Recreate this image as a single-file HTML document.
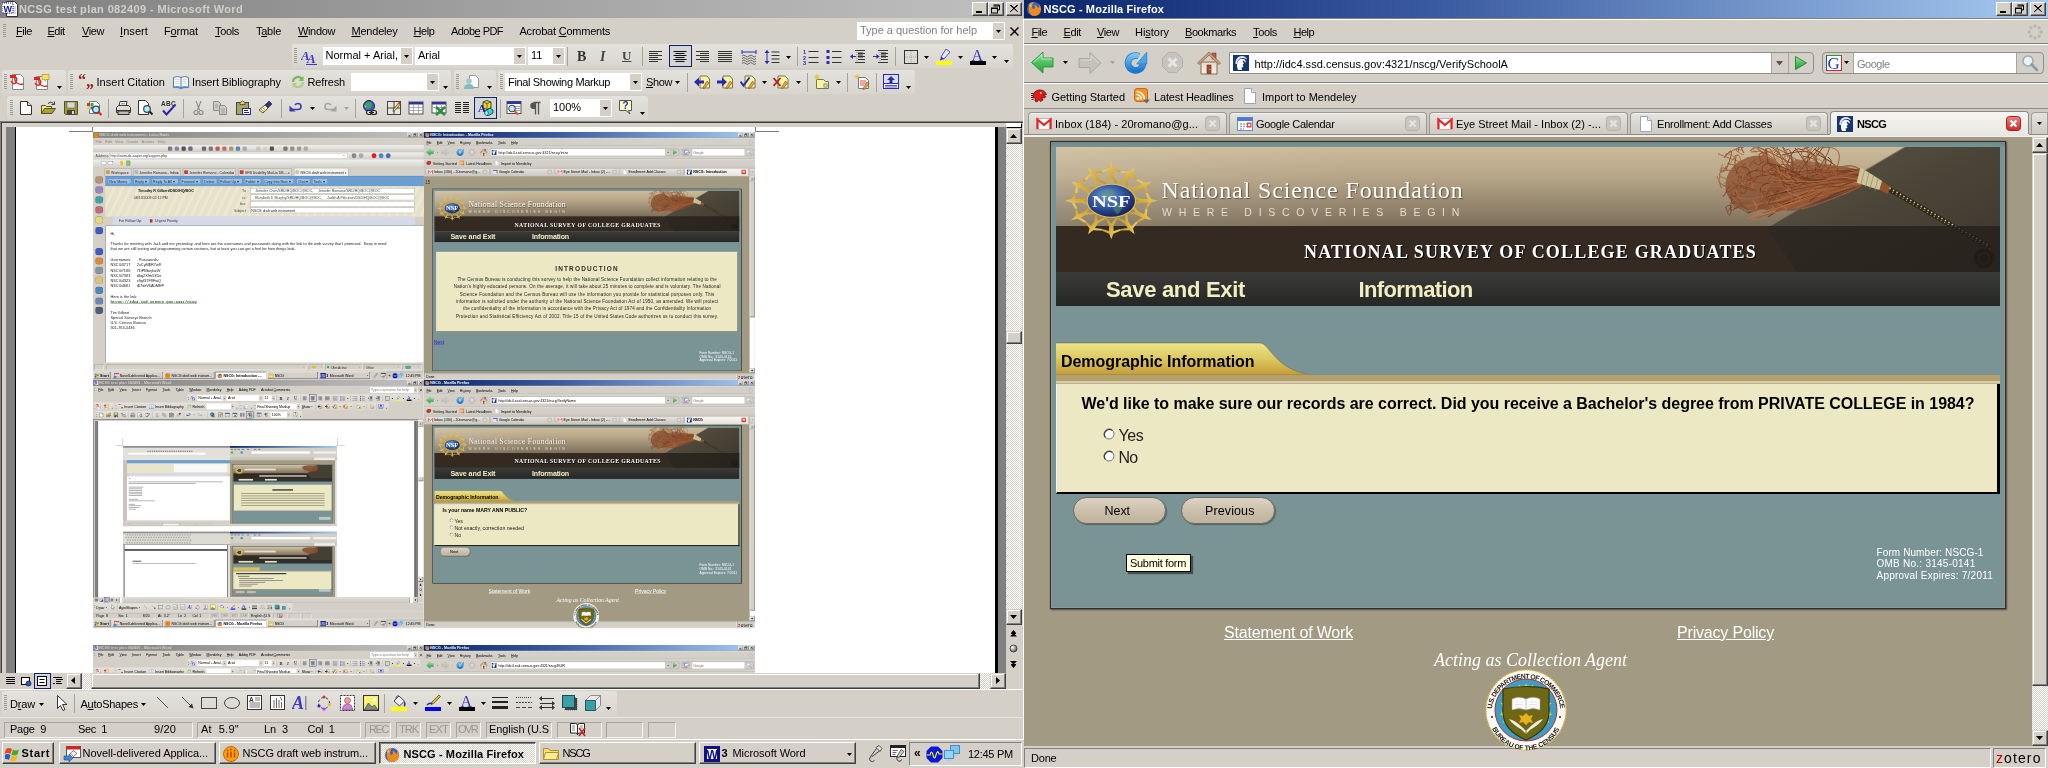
<!DOCTYPE html><html lang="en"><head><meta charset="utf-8"><title>NSCG screenshot</title><style>
*{box-sizing:border-box;margin:0;padding:0}
html,body{width:2048px;height:768px;overflow:hidden;background:#d4d0c8}
body{font-family:"Liberation Sans",sans-serif;font-size:11px;color:#000;position:relative}
.a{position:absolute;display:block}
.t{position:absolute;white-space:pre;display:block}
u{text-decoration:underline;text-underline-offset:1px}
.win{position:absolute;overflow:hidden;background:#d4d0c8}
.top{will-change:transform}
.raised{border:1px solid;border-color:#fff #404040 #404040 #fff;box-shadow:inset -1px -1px 0 #808080,inset 1px 1px 0 #d4d0c8;background:#d4d0c8}
.sraised{border:1px solid;border-color:#d4d0c8 #404040 #404040 #d4d0c8;box-shadow:inset -1px -1px 0 #808080,inset 1px 1px 0 #fff;background:#d4d0c8}
.sunk{border:1px solid;border-color:#808080 #fff #fff #808080}
.sunk2{border:1px solid;border-color:#808080 #fff #fff #808080;box-shadow:inset 1px 1px 0 #404040,inset -1px -1px 0 #d4d0c8}
.tb{background:linear-gradient(#e4e2dc,#d8d5ce);border-radius:3px}
.grip{background:repeating-linear-gradient(#9c9a94 0 1px,transparent 1px 2px)}
.sep{background:#a6a398;width:1px}
.dith{background-image:conic-gradient(#fff 25%,#d4d0c8 0 50%,#fff 0 75%,#d4d0c8 0);background-size:2px 2px}
.cap{border:1px solid;border-color:#fff #404040 #404040 #fff;box-shadow:inset -1px -1px 0 #808080;background:#d4d0c8}

.pagebg{background:#a29a82}
</style></head><body><svg width="0" height="0" style="position:absolute"><defs><linearGradient id="gGreen" x1="0" y1="0" x2="0" y2="1"><stop offset="0" stop-color="#a8e8a8"/><stop offset=".5" stop-color="#50c060"/><stop offset="1" stop-color="#2a9a3a"/></linearGradient>
<linearGradient id="gBlue" x1="0" y1="0" x2="0" y2="1"><stop offset="0" stop-color="#78c4f4"/><stop offset="1" stop-color="#1a78d0"/></linearGradient>
<linearGradient id="gHome" x1="0" y1="0" x2="0" y2="1"><stop offset="0" stop-color="#e8d8c8"/><stop offset="1" stop-color="#f8f0e8"/></linearGradient>
<linearGradient id="gRed" x1="0" y1="0" x2="0" y2="1"><stop offset="0" stop-color="#f08080"/><stop offset="1" stop-color="#d02828"/></linearGradient><linearGradient id="gGold" x1="0" y1="0" x2="1" y2="1"><stop offset="0" stop-color="#f4e088"/><stop offset=".5" stop-color="#d8b040"/><stop offset="1" stop-color="#b88a20"/></linearGradient>
<radialGradient id="gGlobe" cx=".4" cy=".35" r=".7"><stop offset="0" stop-color="#6a9ad8"/><stop offset=".6" stop-color="#2a4a98"/><stop offset="1" stop-color="#141e50"/></radialGradient>
<linearGradient id="gBan" x1="0" y1="0" x2="0" y2="1"><stop offset="0" stop-color="#ccbb9a"/><stop offset=".35" stop-color="#b8a789"/><stop offset=".8" stop-color="#8f816a"/><stop offset="1" stop-color="#7d6f5a"/></linearGradient>
<linearGradient id="gHaze" x1="0" y1="0" x2="1" y2="0"><stop offset="0" stop-color="#fff" stop-opacity=".12"/><stop offset="1" stop-color="#fff" stop-opacity="0"/></linearGradient><linearGradient id="gNav" x1="0" y1="0" x2="0" y2="1"><stop offset="0" stop-color="#3b3c39"/><stop offset="1" stop-color="#262725"/></linearGradient>
<linearGradient id="gCap" x1="0" y1="0" x2="1" y2="1"><stop offset="0" stop-color="#5e5645"/><stop offset=".5" stop-color="#4a4438"/><stop offset="1" stop-color="#3b362d"/></linearGradient>
<radialGradient id="gBall" cx=".35" cy=".35" r=".7"><stop offset="0" stop-color="#fff"/><stop offset="1" stop-color="#555"/></radialGradient><linearGradient id="gTab" x1="0" y1="0" x2="0" y2="1"><stop offset="0" stop-color="#ece488"/><stop offset=".5" stop-color="#dcc860"/><stop offset="1" stop-color="#c29c3a"/></linearGradient><symbol id="new" viewBox="0 0 16 16" overflow="visible"><path d="M2.5 1.5h7l4 4v9h-11z" fill="#fff" stroke="#333" /><path d="M9.5 1.5v4h4" fill="#ddd" stroke="#333"/></symbol><symbol id="open" viewBox="0 0 16 16" overflow="visible"><path d="M1.5 13.5v-8h4l1 1h5v2" fill="#f4ec7a" stroke="#55521a"/><path d="M1.5 13.5l3-5h11l-3.5 5z" fill="#a8a43c" stroke="#55521a"/><path d="M8 3.5q3-3 5.5 0" fill="none" stroke="#333"/><path d="M14.5 1.5v3h-3" fill="none" stroke="#333"/></symbol><symbol id="save" viewBox="0 0 16 16" overflow="visible"><path d="M1.5 1.5h13v13h-12l-1-1z" fill="#9c983c" stroke="#55521a"/><rect x="4" y="2" width="8" height="6" fill="#d8d8d8" stroke="#666" stroke-width=".6"/><rect x="4" y="10" width="8" height="4.5" fill="#444"/><rect x="9" y="11" width="2" height="3" fill="#ddd"/></symbol><symbol id="perm" viewBox="0 0 16 16" overflow="visible"><path d="M3.5 1.5h7l3 3v9h-10z" fill="#fff" stroke="#777"/><rect x="1" y="3" width="3" height="3" fill="#d33"/><rect x="4.5" y="3" width="3" height="3" fill="#3a3"/><rect x="1" y="6.5" width="3" height="3" fill="#dd3"/><rect x="4.5" y="6.5" width="3" height="3" fill="#36c"/><circle cx="10" cy="9.5" r="3.3" fill="#aef" stroke="#444" stroke-width="1.2"/><path d="M12.5 12l3 3" stroke="#e22" stroke-width="2.2"/></symbol><symbol id="print" viewBox="0 0 16 16" overflow="visible"><path d="M4 6l1-4.5h7l-1 4.5" fill="#fff" stroke="#333"/><path d="M1.5 7.5l2-2h10l2 2v5h-14z" fill="#ddd" stroke="#333"/><path d="M1.5 10.5h14" stroke="#333"/><rect x="3" y="11" width="11" height="3.5" fill="#bbb" stroke="#333"/><rect x="8" y="9" width="3" height="1" fill="#ee3"/><path d="M6 3.5h4M5.7 5h4" stroke="#777" stroke-width=".7"/></symbol><symbol id="preview" viewBox="0 0 16 16" overflow="visible"><path d="M1.5 .5h7l3 3v11h-10z" fill="#fff" stroke="#333"/><circle cx="10" cy="9" r="3.3" fill="#aef" stroke="#444" stroke-width="1.2"/><path d="M12.5 11.5l3 3" stroke="#222" stroke-width="2"/></symbol><symbol id="spell" viewBox="0 0 16 16" overflow="visible"><text x="0" y="6" font-size="6.5" font-family="Liberation Sans,sans-serif" font-weight="bold" fill="#333" letter-spacing=".3">ABC</text><path d="M2 10.5l3.5 4 9-10" fill="none" stroke="#2a2aa0" stroke-width="2"/></symbol><symbol id="cut" viewBox="0 0 16 16" overflow="visible"><path d="M6 1l3.5 9M11 1L7.5 10" stroke="#8c8c8c" stroke-width="1.1" fill="none"/><circle cx="6" cy="12.5" r="2" fill="none" stroke="#8c8c8c" stroke-width="1.1"/><circle cx="11" cy="12.5" r="2" fill="none" stroke="#8c8c8c" stroke-width="1.1"/></symbol><symbol id="copy" viewBox="0 0 16 16" overflow="visible"><path d="M1.5 1.5h5l2 2v7h-7z" fill="#d0cdc6" stroke="#8c8c8c"/><path d="M7.5 5.5h5l2 2v7h-7z" fill="#d0cdc6" stroke="#8c8c8c"/><path d="M9 9h4M9 11h4M9 13h4M3 5h3M3 7h3" stroke="#8c8c8c" stroke-width=".7"/></symbol><symbol id="paste" viewBox="0 0 16 16" overflow="visible"><rect x="1.5" y="2.5" width="12" height="12" fill="#a8a468" stroke="#444"/><path d="M5 2.5q2.5-3 5 0v2h-5z" fill="#e8d860" stroke="#444" stroke-width=".8"/><rect x="7.5" y="8.5" width="8" height="6" fill="#fff" stroke="#2a2aa0"/><path d="M9 10.5h4M9 12.5h5" stroke="#2a2aa0"/></symbol><symbol id="painter" viewBox="0 0 16 16" overflow="visible"><path d="M11 1l3 3-4 4-3-3z" fill="#33338c" stroke="#222" stroke-width=".6"/><path d="M7 5l3 3-5 5-4-3z" fill="#f8f4a0" stroke="#333" stroke-width=".8"/><path d="M3 9l3 3M4.5 7.5l3 3" stroke="#888" stroke-width=".7"/><path d="M1 14.5h3l1-1" stroke="#ee4" fill="none"/></symbol><symbol id="undo" viewBox="0 0 16 16" overflow="visible"><path d="M4 9.5h6a3 3 0 0 0 0-6q-2 0-3 1.5" fill="none" stroke="#3a3ab4" stroke-width="1.6"/><path d="M1.5 5.5v6h6z" fill="#3a3ab4"/></symbol><symbol id="redo" viewBox="0 0 16 16" overflow="visible"><path d="M12 9.5h-6a3 3 0 0 1 0-6q2 0 3 1.5" fill="none" stroke="#a4a4a4" stroke-width="1.6"/><path d="M14.5 5.5v6h-6z" fill="#a4a4a4"/></symbol><symbol id="hlink" viewBox="0 0 16 16" overflow="visible"><circle cx="7" cy="6" r="5.5" fill="#3c5ce0" stroke="#223"/><path d="M4 3q3-2 5 0l1 3-3 3-3-1-1-3z" fill="#3fa845"/><path d="M2 5l2 1v2z" fill="#fff" opacity=".7"/><rect x="4.5" y="10.5" width="5" height="4" rx="2" fill="#ddd" stroke="#222" stroke-width="1.2"/><rect x="9.5" y="10.5" width="5" height="4" rx="2" fill="#ddd" stroke="#222" stroke-width="1.2"/><path d="M7 12.5h5" stroke="#222" stroke-width="1.2"/></symbol><symbol id="tblbord" viewBox="0 0 16 16" overflow="visible"><rect x="1.5" y="1.5" width="13" height="13" fill="#e8e6e0" stroke="#444"/><path d="M8 1.5v13M1.5 8h13" stroke="#444"/><path d="M12.5 3l1.5 1.5-5 6-2 1 .5-2z" fill="#f0e040" stroke="#333" stroke-width=".7"/><circle cx="13.3" cy="3.2" r="1.2" fill="#d33"/></symbol><symbol id="instbl" viewBox="0 0 16 16" overflow="visible"><rect x="1" y="2" width="14" height="12" fill="#fff" stroke="#555"/><rect x="1" y="2" width="14" height="2.5" fill="#33339c"/><path d="M1 7.5h14M1 10.5h14M5.5 4.5v9.5M10.5 4.5v9.5" stroke="#999" stroke-width=".8"/></symbol><symbol id="excel" viewBox="0 0 16 16" overflow="visible"><rect x="1" y="2" width="14" height="11" fill="#fff" stroke="#555"/><rect x="1" y="2" width="14" height="2.5" fill="#33339c"/><path d="M1 7.5h14M5.5 4.5v8.5M10.5 4.5v8.5" stroke="#999" stroke-width=".8"/><path d="M5 7l9 8M14 7l-9 8" stroke="#2e8b3e" stroke-width="2.6"/></symbol><symbol id="columns" viewBox="0 0 16 16" overflow="visible"><path d="M1 2.5h6M1 4.5h6M1 6.5h6M1 8.5h6M1 10.5h6M1 12.5h6M9 2.5h6M9 4.5h6M9 6.5h6M9 8.5h6M9 10.5h6M9 12.5h6" stroke="#222" stroke-width="1"/></symbol><symbol id="drawing" viewBox="0 0 16 16" overflow="visible"><path d="M5 2l4-1.5 4 1.5v6l-4 1.5-4-1.5z" fill="#e8d820" stroke="#222" stroke-width=".8"/><path d="M5 2l4 1.5 4-1.5M9 3.5v6" stroke="#222" stroke-width=".6" fill="none"/><text x="0" y="12" font-size="11" font-weight="bold" font-family="Liberation Serif,serif" fill="#1a1ab0">A</text><path d="M7 11l5-3 3 2v3l-5 3-3-2z" fill="#30d8e0" stroke="#222" stroke-width=".8"/><ellipse cx="8.5" cy="13" rx="1.8" ry="2.4" fill="#8ff" stroke="#222" stroke-width=".6"/></symbol><symbol id="docmap" viewBox="0 0 16 16" overflow="visible"><rect x="1" y="1.5" width="14" height="12" fill="#fff" stroke="#555"/><rect x="1" y="1.5" width="14" height="2.5" fill="#33339c"/><path d="M9 6.5h5M9 8.5h5M9 10.5h5" stroke="#888" stroke-width=".8"/><circle cx="6" cy="8.5" r="3.2" fill="#bef" stroke="#444" stroke-width="1.1"/><path d="M8.5 11l3.5 3.5" stroke="#e44" stroke-width="2"/></symbol><symbol id="para" viewBox="0 0 16 16" overflow="visible"><path d="M11.5 2.5v12M8.5 2.5v12M13.5 2.5h-7" stroke="#555" stroke-width="1.3" fill="none"/><path d="M8.5 2.5h-2a3 3 0 0 0 0 6.5h2z" fill="#555"/></symbol><symbol id="help" viewBox="0 0 16 16" overflow="visible"><path d="M1.5 .5h12v10h-3l1.5 3.5-4-3.5h-6.5z" fill="#fbf8c8" stroke="#555"/><text x="4.5" y="9" font-size="10" font-weight="bold" font-family="Liberation Sans,sans-serif" fill="#2a2aa8">?</text></symbol><symbol id="pdf1" viewBox="0 0 16 16" overflow="visible"><path d="M2.5 .5h8l3 3v12h-11z" fill="#fff" stroke="#888"/><path d="M1 7q3 5 5 1t-1-5q-1 4 2 6t6 1" fill="none" stroke="#d22" stroke-width="1.4"/><rect x="0" y="1" width="6" height="3" fill="#d22"/></symbol><symbol id="pdf2" viewBox="0 0 16 16" overflow="visible"><path d="M2.5 2.5h8l3 3v10h-11z" fill="#fff" stroke="#888"/><path d="M1 9q3 4 5 1t-1-5q-1 4 2 6t6 1" fill="none" stroke="#d22" stroke-width="1.4"/><rect x="0" y="3" width="6" height="3" fill="#d22"/><path d="M8 .5h7v5h-3l-1 2v-2h-3z" fill="#f8e060" stroke="#a80" stroke-width=".6"/></symbol><symbol id="quote" viewBox="0 0 16 16" overflow="visible"><text x="0" y="11" font-size="16" font-weight="bold" font-family="Liberation Serif,serif" fill="#a02020">&#8220;</text><text x="8" y="13" font-size="16" font-weight="bold" font-family="Liberation Serif,serif" fill="#a02020">&#8222;</text></symbol><symbol id="book" viewBox="0 0 16 16" overflow="visible"><path d="M.5 3.5q4-2 7.5 0q3.5-2 7.5 0v10q-4-2-7.5 0q-3.5-2-7.5 0z" fill="#fff" stroke="#4a7ab0" stroke-width="1"/><path d="M8 3.5v10" stroke="#4a7ab0"/><path d="M.5 13.5q4-1 7.5 1q3.5-2 7.5-1" stroke="#4a90d0" stroke-width="1.5" fill="none"/><path d="M2.5 5.5q2-.8 4 0M2.5 7.5q2-.8 4 0M2.5 9.5q2-.8 4 0M9.5 5.5q2-.8 4 0M9.5 7.5q2-.8 4 0M9.5 9.5q2-.8 4 0" stroke="#aaa" stroke-width=".6" fill="none"/></symbol><symbol id="refresh" viewBox="0 0 16 16" overflow="visible"><path d="M3 8a5 5 0 0 1 9-3" fill="none" stroke="#78b858" stroke-width="2.2"/><path d="M13.5 2v5h-5z" fill="#78b858"/><path d="M13 8a5 5 0 0 1-9 3" fill="none" stroke="#a8d088" stroke-width="2.2"/><path d="M2.5 14v-5h5z" fill="#a8d088"/></symbol><symbol id="emailrev" viewBox="0 0 16 16" overflow="visible"><path d="M5.5 1.5h6l3 3v9h-9z" fill="#fff" stroke="#999"/><circle cx="5" cy="7" r="2.8" fill="#9cc"/><path d="M0 15q0-5 5-5t5 5z" fill="#8bb"/></symbol><symbol id="revprev" viewBox="0 0 16 16" overflow="visible"><path d="M6 2h7l2.5 3v9h-9.5z" fill="#f8f4a0" stroke="#775"/><path d="M0 8l5-4.5v3h5v3h-5v3z" fill="#2a2ab0"/><path d="M13 7l2 2-4 5-2 .5.5-2z" fill="#e8a040" stroke="#642" stroke-width=".5"/></symbol><symbol id="revnext" viewBox="0 0 16 16" overflow="visible"><path d="M6 2h7l2.5 3v9h-9.5z" fill="#f8f4a0" stroke="#775"/><path d="M10 8l-5-4.5v3h-5v3h5v3z" fill="#2a2ab0"/><path d="M13 7l2 2-4 5-2 .5.5-2z" fill="#e8a040" stroke="#642" stroke-width=".5"/></symbol><symbol id="revacc" viewBox="0 0 16 16" overflow="visible"><path d="M5 2h7l3 3v9h-10z" fill="#f8f4a0" stroke="#775"/><path d="M.5 7.5l3 4 6-8" fill="none" stroke="#2a2ab0" stroke-width="2"/><path d="M12.5 7l2 2-4 5-2 .5.5-2z" fill="#e8a040" stroke="#642" stroke-width=".5"/></symbol><symbol id="revrej" viewBox="0 0 16 16" overflow="visible"><path d="M5 2h7l3 3v9h-10z" fill="#f8f4a0" stroke="#775"/><path d="M.5 4l7 8M7.5 4l-7 8" stroke="#b02020" stroke-width="1.8"/><path d="M12.5 7l2 2-4 5-2 .5.5-2z" fill="#e8a040" stroke="#642" stroke-width=".5"/></symbol><symbol id="newcomm" viewBox="0 0 16 16" overflow="visible"><path d="M2.5 5.5h7l2 2h3v7h-12z" fill="#f8f4a0" stroke="#775"/><path d="M3 0v6M0 3h6M1 1l4 4M5 1l-4 4" stroke="#e8c020" stroke-width=".8"/><rect x="10" y="10" width="3" height="3" fill="#fff" stroke="#555" stroke-width=".7"/></symbol><symbol id="track" viewBox="0 0 16 16" overflow="visible"><path d="M4.5 3.5h7l3 3v8h-10z" fill="#fff" stroke="#777"/><path d="M6 7h6M6 9h6M6 11h4" stroke="#d33" stroke-width=".9"/><path d="M3 0v5M.5 2.5h5M1.3 .8l3.4 3.4M4.7 .8l-3.4 3.4" stroke="#e8c020" stroke-width=".8"/><path d="M13 8l2 2-4 5-2 .5.5-2z" fill="#e8a040" stroke="#642" stroke-width=".5"/></symbol><symbol id="revpane" viewBox="0 0 16 16" overflow="visible"><rect x=".5" y=".5" width="15" height="14" fill="#fff" stroke="#2a2ab0"/><rect x=".5" y=".5" width="15" height="9" fill="#d8e0f8" stroke="#2a2ab0"/><path d="M8 2l4 4h-2.5v3h-3v-3h-2.5z" fill="#2a2ab0"/><path d="M2 11.5h12M2 13h12" stroke="#2a2ab0" stroke-width=".8"/></symbol><symbol id="styles" viewBox="0 0 16 16" overflow="visible"><text x="0" y="11" font-size="13" font-style="italic" font-weight="bold" font-family="Liberation Serif,serif" fill="#3a3ad0">A</text><text x="6" y="14" font-size="13" font-style="italic" font-weight="bold" font-family="Liberation Serif,serif" fill="#3a3ad0">A</text><path d="M5 15.5h11" stroke="#3a3ad0"/></symbol><symbol id="al_l" viewBox="0 0 16 16" overflow="visible"><path d="M1 2.5h13M1 4.5h9M1 6.5h13M1 8.5h9M1 10.5h13M1 12.5h9" stroke="#333"/></symbol><symbol id="al_c" viewBox="0 0 16 16" overflow="visible"><path d="M1.5 2.5h13M3.5 4.5h9M1.5 6.5h13M3.5 8.5h9M1.5 10.5h13M3.5 12.5h9" stroke="#111"/></symbol><symbol id="al_r" viewBox="0 0 16 16" overflow="visible"><path d="M2 2.5h13M6 4.5h9M2 6.5h13M6 8.5h9M2 10.5h13M6 12.5h9" stroke="#333"/></symbol><symbol id="al_j" viewBox="0 0 16 16" overflow="visible"><path d="M1 2.5h14M1 4.5h14M1 6.5h14M1 8.5h14M1 10.5h14M1 12.5h14" stroke="#333"/></symbol><symbol id="al_d" viewBox="0 0 16 16" overflow="visible"><path d="M1 3h14" stroke="#2a2ab0"/><path d="M1 1v4M15 1v4" stroke="#2a2ab0"/><path d="M1 7q1.8-2 3.5 0t3.5 0t3.5 0t3.5 0M1 9.5q1.8-2 3.5 0t3.5 0t3.5 0t3.5 0M1 12q1.8-2 3.5 0t3.5 0t3.5 0t3.5 0M1 14.5q1.8-2 3.5 0t3.5 0t3.5 0t3.5 0" stroke="#555" fill="none" stroke-width=".9"/></symbol><symbol id="lnsp" viewBox="0 0 16 16" overflow="visible"><path d="M3 1.5v13" stroke="#2a2ab0"/><path d="M.5 4l2.5-3 2.5 3zM.5 12l2.5 3 2.5-3z" fill="#2a2ab0"/><path d="M7.5 3h8M7.5 6.5h8M7.5 10h8M7.5 13.5h8" stroke="#333"/></symbol><symbol id="numlist" viewBox="0 0 16 16" overflow="visible"><text x="0" y="5" font-size="5.5" font-weight="bold" font-family="Liberation Sans,sans-serif" fill="#2a2ab0">1</text><text x="0" y="10.5" font-size="5.5" font-weight="bold" font-family="Liberation Sans,sans-serif" fill="#2a2ab0">2</text><text x="0" y="16" font-size="5.5" font-weight="bold" font-family="Liberation Sans,sans-serif" fill="#2a2ab0">3</text><path d="M5.5 2.5h10M5.5 8.5h10M5.5 13.5h10" stroke="#333"/></symbol><symbol id="bullist" viewBox="0 0 16 16" overflow="visible"><rect x=".5" y="1" width="3" height="3" fill="#2a2ab0"/><rect x=".5" y="7" width="3" height="3" fill="#2a2ab0"/><rect x=".5" y="12" width="3" height="3" fill="#2a2ab0"/><path d="M6 2.5h9.5M6 8.5h9.5M6 13.5h9.5" stroke="#333"/></symbol><symbol id="outdent" viewBox="0 0 16 16" overflow="visible"><path d="M5 1.5h10M8 4.5h7M8 7.5h7M8 10.5h7M5 13.5h10" stroke="#333"/><path d="M8 4.5h5M8 7.5h5" stroke="#333" stroke-width="2"/><path d="M6 7.5h-5" stroke="#2a2ab0"/><path d="M0 7.5l3-2.5v5z" fill="#2a2ab0"/><path d="M7 1v14" stroke="#555" stroke-dasharray="1 1" stroke-width=".6"/></symbol><symbol id="indent" viewBox="0 0 16 16" overflow="visible"><path d="M5 1.5h10M8 4.5h7M8 7.5h7M8 10.5h7M5 13.5h10" stroke="#333"/><path d="M8 4.5h5M8 7.5h5" stroke="#333" stroke-width="2"/><path d="M0 7.5h5" stroke="#2a2ab0"/><path d="M6.5 7.5l-3-2.5v5z" fill="#2a2ab0"/><path d="M7 1v14" stroke="#555" stroke-dasharray="1 1" stroke-width=".6"/></symbol><symbol id="borders" viewBox="0 0 16 16" overflow="visible"><rect x="1.5" y="1.5" width="13" height="13" fill="none" stroke="#333"/><path d="M8 2v12M2 8h12" stroke="#999" stroke-dasharray="1 1" stroke-width=".8"/></symbol><symbol id="hilite" viewBox="0 0 16 16" overflow="visible"><path d="M10 0l4 3-6 7-3-2z" fill="#e8e8f8" stroke="#2a2ab0" stroke-width=".8"/><path d="M5 8l3 2-4 1.5z" fill="#2a2ab0"/><rect x="0" y="12" width="16" height="4" fill="#ff0"/></symbol><symbol id="fcolor" viewBox="0 0 16 16" overflow="visible"><text x="1.5" y="11.5" font-size="16" font-family="Liberation Serif,serif" fill="#3232c0">A</text><rect x="0" y="12" width="16" height="4" fill="#000"/></symbol><symbol id="cursor" viewBox="0 0 16 16" overflow="visible"><path d="M3.5 .5v13l3-3 2.5 5 2-1-2.5-5h4.5z" fill="#fff" stroke="#222" stroke-width=".9"/></symbol><symbol id="line" viewBox="0 0 16 16" overflow="visible"><path d="M2 2l11 11" stroke="#555" stroke-width="1"/></symbol><symbol id="arrowi" viewBox="0 0 16 16" overflow="visible"><path d="M2 2l9 9" stroke="#555" stroke-width="1"/><path d="M13.5 13.5l-5-1.5 3.5-3.5z" fill="#333"/></symbol><symbol id="rect" viewBox="0 0 16 16" overflow="visible"><rect x=".5" y="2.5" width="15" height="11" fill="none" stroke="#444"/></symbol><symbol id="oval" viewBox="0 0 16 16" overflow="visible"><ellipse cx="8" cy="8" rx="7.5" ry="5.5" fill="none" stroke="#444"/></symbol><symbol id="textbox" viewBox="0 0 16 16" overflow="visible"><rect x=".5" y=".5" width="14" height="14" fill="#fff" stroke="#333"/><text x="2" y="6.5" font-size="6.5" font-weight="bold" font-family="Liberation Sans,sans-serif" fill="#333">A</text><path d="M8 3h5M8 5h5M2.5 8h10.5M2.5 10h10.5M2.5 12h10.5" stroke="#555" stroke-width=".8"/></symbol><symbol id="vtextbox" viewBox="0 0 16 16" overflow="visible"><rect x=".5" y=".5" width="14" height="14" fill="#fff" stroke="#333"/><path d="M4 5v8M6.5 3v10M9 5v8M11.5 7v6" stroke="#555" stroke-width=".9"/><path d="M10 2l2 3h-1" stroke="#333" fill="none" stroke-width=".7"/></symbol><symbol id="wordart" viewBox="0 0 16 16" overflow="visible"><text x="0" y="14" font-size="18" font-weight="bold" font-style="italic" font-family="Liberation Serif,serif" fill="#3a3ad0">A</text><path d="M13 1l1.5 0v14h-1.5z" fill="#88a"/></symbol><symbol id="diagram" viewBox="0 0 16 16" overflow="visible"><circle cx="8" cy="8" r="5.5" fill="none" stroke="#2a2ab0" stroke-dasharray="2.5 2"/><circle cx="8" cy="2" r="1.6" fill="#d33"/><circle cx="13.5" cy="9.5" r="1.6" fill="#e8c020"/><circle cx="3" cy="11" r="1.6" fill="#2a2ab0"/><circle cx="8" cy="14" r="1.6" fill="#d3d"/></symbol><symbol id="clipart" viewBox="0 0 16 16" overflow="visible"><rect x=".5" y=".5" width="14" height="15" fill="#fff" stroke="#333" stroke-dasharray="2 1"/><circle cx="7.5" cy="5.5" r="3" fill="#e8a0a0" stroke="#a33" stroke-width=".6"/><path d="M2.5 15q0-6 5-6t5 6z" fill="#c8c" stroke="#737" stroke-width=".6"/></symbol><symbol id="picture" viewBox="0 0 16 16" overflow="visible"><rect x=".5" y=".5" width="15" height="15" fill="#f8f070" stroke="#333"/><circle cx="11.5" cy="4.5" r="1.8" fill="#fff"/><path d="M1 15l4.5-7 3.5 4 2.5-2 3.5 5z" fill="#888" stroke="#333" stroke-width=".6"/></symbol><symbol id="fill" viewBox="0 0 16 16" overflow="visible"><path d="M3 6l5-5 5.5 5-5 5z" fill="#eee" stroke="#333" stroke-width=".9"/><path d="M8 1q-3-1-3 3" fill="none" stroke="#333" stroke-width=".8"/><path d="M13.5 6q2 3 .5 5t-1-3z" fill="#2a2ab0"/><rect x="0" y="12" width="16" height="4" fill="#ff0"/></symbol><symbol id="lcolor" viewBox="0 0 16 16" overflow="visible"><path d="M14 0l1.5 1.5-7 7-2.5 1 1-2.5z" fill="#e8c020" stroke="#333" stroke-width=".7"/><path d="M2 10q3-3 5-1" stroke="#2a2ab0" fill="none" stroke-width="1.5"/><rect x="0" y="12" width="16" height="4" fill="#00f"/></symbol><symbol id="lstyle" viewBox="0 0 16 16" overflow="visible"><path d="M0 2.5h16" stroke="#222" stroke-width="1"/><path d="M0 7h16" stroke="#222" stroke-width="2"/><path d="M0 12.5h16" stroke="#222" stroke-width="3"/></symbol><symbol id="dstyle" viewBox="0 0 16 16" overflow="visible"><path d="M0 2.5h16" stroke="#444" stroke-dasharray="1 1"/><path d="M0 7.5h16" stroke="#444" stroke-dasharray="2 1"/><path d="M0 12.5h16" stroke="#444" stroke-dasharray="4 2"/></symbol><symbol id="astyle" viewBox="0 0 16 16" overflow="visible"><path d="M2 3.5h13M1 8.5h13M2 12.5h13" stroke="#333"/><path d="M0 3.5l3-2.5v5zM16 8.5l-3-2.5v5zM0 12.5l3-2.5v5zM16 12.5l-3-2.5v5z" fill="#333"/></symbol><symbol id="shadow" viewBox="0 0 16 16" overflow="visible"><rect x="3" y="3" width="12" height="12" fill="#444" /><path d="M3 3h12v12h-12z" fill="none" stroke="#222" stroke-dasharray="1 1" stroke-width=".5"/><rect x=".5" y=".5" width="12" height="12" fill="#3aa0a8" stroke="#245"/></symbol><symbol id="threed" viewBox="0 0 16 16" overflow="visible"><path d="M.5 5.5l5-5h10v10l-5 5h-10z" fill="#e8e8e8" stroke="#777" stroke-width=".8"/><rect x=".5" y="5.5" width="10" height="10" fill="#3aa0a8" stroke="#245" stroke-width=".8"/><path d="M10.5 5.5l5-5" stroke="#777" stroke-width=".8"/></symbol><symbol id="v_normal" viewBox="0 0 16 16" overflow="visible"><path d="M1 1.5h9M1 3.5h9M1 5.5h9M1 7.5h9" stroke="#000"/></symbol><symbol id="v_web" viewBox="0 0 16 16" overflow="visible"><rect x=".5" y=".5" width="8" height="7" fill="#fff" stroke="#000"/><circle cx="7.5" cy="6.5" r="2.5" fill="#2a5ad0" stroke="#000" stroke-width=".6"/></symbol><symbol id="v_print" viewBox="0 0 16 16" overflow="visible"><rect x=".5" y=".5" width="9" height="9" fill="#fff" stroke="#000"/><path d="M2.5 3.5h5M2.5 6.5h5" stroke="#000"/></symbol><symbol id="v_outline" viewBox="0 0 16 16" overflow="visible"><path d="M0 1.5h9M3 3.5h7M3 5.5h5M0 7.5h2M3 7.5h6" stroke="#000"/></symbol><symbol id="spellbook" viewBox="0 0 16 16" overflow="visible"><path d="M.5 1.5h5q2 0 2 2v9q0-1.5-2-1.5h-5zM14.5 1.5h-5q-2 0-2 2v9q0-1.5 2-1.5h5z" fill="#fff" stroke="#222"/><path d="M2 4h3M2 6h3M2 8h3M10 4h3M10 6h3" stroke="#555" stroke-width=".7"/><path d="M9 6l6 8M15 6l-6 8" stroke="#c02020" stroke-width="1.6"/></symbol><symbol id="ff_back" viewBox="0 0 24 24" overflow="visible"><path d="M.5 11.5l11.5-10.5v6h10v9h-10v6z" fill="url(#gGreen)" stroke="#2c9a4c" stroke-width="1"/><path d="M2.5 11.5l8.5-8v4.5h10" fill="none" stroke="#c8f4d0" stroke-width="1" opacity=".8"/></symbol><symbol id="ff_fwd" viewBox="0 0 24 24" overflow="visible"><path d="M23 12l-11-10.5v6h-11v9h11v6z" fill="#c4c2bc" stroke="#aaa8a2" stroke-width="1"/><path d="M21 12l-8-7.5v4.5h-10" fill="none" stroke="#dddbd6" stroke-width="1"/></symbol><symbol id="ff_reload" viewBox="0 0 24 24" overflow="visible"><path d="M19 12.7A7.5 7.5 0 1 1 14.7 5.2" fill="none" stroke="#2272c4" stroke-width="6.6"/><path d="M19 12.7A7.5 7.5 0 1 1 14.7 5.2" fill="none" stroke="url(#gBlue)" stroke-width="5.2"/><path d="M22.8 1.2V13H12.7z" fill="#4aa4e8" stroke="#2a7ac0" stroke-width=".7"/></symbol><symbol id="ff_stop" viewBox="0 0 24 24" overflow="visible"><path d="M7.5 1.5h8l6 6v8l-6 6h-8l-6-6v-8z" fill="#c6c4be" stroke="#b2b0aa"/><path d="M7.5 7.5l8 8M15.5 7.5l-8 8" stroke="#e8e7e3" stroke-width="3"/></symbol><symbol id="ff_home" viewBox="0 0 24 24" overflow="visible"><rect x="15" y="2" width="4" height="6" fill="#b85a4a" stroke="#8a3a2a" stroke-width=".6"/><path d="M4 11h16v12h-16z" fill="url(#gHome)" stroke="#8a6a48"/><path d="M.5 12l11.5-11 11.5 11-1.5 1.5-10-9.5-10 9.5z" fill="#c8a080" stroke="#8a6a48" stroke-width=".8"/><rect x="10" y="14" width="4" height="8.5" fill="#a04a3a" stroke="#6a2a1a" stroke-width=".6"/><circle cx="13" cy="18.5" r=".6" fill="#ff0"/></symbol><symbol id="ff_go" viewBox="0 0 16 16" overflow="visible"><path d="M2.5 1.5l11 6.5-11 6.5z" fill="url(#gGreen)" stroke="#2c8a3c"/></symbol><symbol id="ff_mag" viewBox="0 0 18 18" overflow="visible"><circle cx="7" cy="7" r="5" fill="#e8f4fc" stroke="#9ab" stroke-width="1.6"/><path d="M10.5 10.5l5.5 5.5" stroke="#89a" stroke-width="2.6" stroke-linecap="round"/><path d="M4 6q1-3 4-2.5" stroke="#fff" fill="none"/></symbol><symbol id="ff_g" viewBox="0 0 16 16" overflow="visible"><rect x=".5" y=".5" width="15" height="15" fill="#fff" stroke="#2a4ab8"/><path d="M.5 15.5h15v-15" fill="none" stroke="#d22"/><path d="M.5 .5h15" stroke="#2a9a3a"/><text x="1.5" y="14" font-size="17" font-family="Liberation Serif,serif" fill="#1a3ac0">G</text></symbol><symbol id="ff_spartan" viewBox="0 0 16 16" overflow="visible"><rect width="16" height="16" fill="#17346f"/><path d="M5 15C3.5 11 3.5 6.5 6.5 4.5 9.5 2.8 12.5 4 13 7l-1 .5C11.5 6 10.5 5.5 9.5 6l1.5 3-1.5.5 1 2.5-2 .5.5 2.5z" fill="#fff"/><path d="M2.5 9C2 4.5 5 1 9 1c2.5 0 4.5 1.5 5 3.5C12 2.8 9 2.5 7 3.5 5 4.5 4 6.5 4 9z" fill="#dfe5f2"/></symbol><symbol id="ff_throb" viewBox="0 0 16 16" overflow="visible"><g fill="#b8b6b0"><circle cx="8" cy="2" r="1.7"/><circle cx="12.2" cy="3.8" r="1.7"/><circle cx="14" cy="8" r="1.7"/><circle cx="12.2" cy="12.2" r="1.7"/><circle cx="8" cy="14" r="1.7"/><circle cx="3.8" cy="12.2" r="1.7"/><circle cx="2" cy="8" r="1.7"/><circle cx="3.8" cy="3.8" r="1.7"/></g></symbol><symbol id="ff_fox" viewBox="0 0 16 16" overflow="visible"><circle cx="8" cy="8" r="7" fill="#3a62c0"/><path d="M8 1q-4 0-6 3 2-1 3 0-3 2-2 6 1 5 6 5 6-1 6-7 0-3-2-5 1 3-1 4-1-3-4-3 2 2 0 4-2 0-2-2 0-3 2-5z" fill="#f08a1c"/><path d="M3 4q2-1 3 0-2 1-2 3z" fill="#f8d040"/></symbol><symbol id="ff_dino" viewBox="0 0 16 16" overflow="visible"><path d="M2 9q0-6 6-7 4-.5 6 2l1.5 2.5-3.5.5 3 1.5-1.5 1.5-3-.5 1.5 2.5-2.5 1.5-1.5-2-2 2.5-2-1 .5-2.5-3-1z" fill="#e41c1c" stroke="#500" stroke-width=".7"/><circle cx="10" cy="5" r="1" fill="#fff"/><circle cx="10.3" cy="5" r=".5" fill="#000"/><path d="M0 5.5h2.5M0 7.5h2M0 9.5h2M.5 11.5h2" stroke="#222" stroke-width=".9"/></symbol><symbol id="ff_rss" viewBox="0 0 16 16" overflow="visible"><rect x=".5" y=".5" width="13" height="13" rx="2.5" fill="#f89028" stroke="#d06808"/><circle cx="4" cy="10.5" r="1.5" fill="#fff"/><path d="M2.5 6.5a5 5 0 0 1 5 5M2.5 3.5a8 8 0 0 1 8 8" fill="none" stroke="#fff" stroke-width="1.6"/><path d="M9 11.5h7l-3.5 4z" fill="#666"/></symbol><symbol id="ff_page" viewBox="0 0 16 16" overflow="visible"><path d="M2.5 .5h7l4 4v11h-11z" fill="#fff" stroke="#9aa4b8"/><path d="M9.5 .5v4h4" fill="#e4e8f0" stroke="#9aa4b8"/></symbol><symbol id="ff_gmail" viewBox="0 0 16 16" overflow="visible"><rect x=".5" y="2.5" width="15" height="11" fill="#fff" stroke="#e8a0a0"/><path d="M1.5 13v-9.5l6.5 5.5 6.5-5.5v9.5" fill="none" stroke="#e02828" stroke-width="2.2"/></symbol><symbol id="ff_gcal" viewBox="0 0 16 16" overflow="visible"><rect x=".5" y="1.5" width="15" height="13" fill="#fff" stroke="#6a8ac8"/><rect x=".5" y="1.5" width="15" height="3.5" fill="#4a7ad8"/><path d="M3 8h8M3 10.5h8M3 13h4" stroke="#9ab" stroke-dasharray="2 1" stroke-width="1.5"/><rect x="10" y="6.5" width="4.5" height="5" fill="#e04040"/><circle cx="12.2" cy="9" r="1.2" fill="#fff"/></symbol><symbol id="ff_tabx" viewBox="0 0 15 15" overflow="visible"><rect x=".5" y=".5" width="14" height="14" rx="3" fill="#c8c5be" stroke="#b4b1aa"/><path d="M4.5 4.5l6 6M10.5 4.5l-6 6" stroke="#e6e4df" stroke-width="2.4"/></symbol><symbol id="ff_tabxr" viewBox="0 0 15 15" overflow="visible"><rect x=".5" y=".5" width="14" height="14" rx="3" fill="url(#gRed)" stroke="#a82020"/><path d="M4.5 4.5l6 6M10.5 4.5l-6 6" stroke="#fff" stroke-width="2.4"/></symbol><symbol id="tk_flag" viewBox="0 0 16 16" overflow="visible"><path d="M1 3q3-2 6 0l-1.5 5q-3-2-6 0z" fill="#e84820"/><path d="M8 3.5q3 2 6 0l-1.5 5q-3 2-6 0z" fill="#48a828"/><path d="M-.5 9q3-2 6 0l-1.5 5q-3-2-6 0z" fill="#2858d8"/><path d="M6.5 9.5q3 2 6 0l-1.5 5q-3 2-6 0z" fill="#f0b818"/></symbol><symbol id="tk_novell" viewBox="0 0 18 16" overflow="visible"><rect x="3.5" y=".5" width="14" height="11" fill="#fff" stroke="#555"/><rect x="3.5" y=".5" width="14" height="3" fill="#e02020"/><path d="M10.5 4.5l3.5 3-3.5 3-3.5-3z" fill="#eee" stroke="#555" stroke-width=".7"/><path d="M1 10h5v-2l4 4-4 4v-2h-5z" fill="#3888d8" stroke="#1a4a88" stroke-width=".6"/></symbol><symbol id="tk_notes" viewBox="0 0 16 16" overflow="visible"><circle cx="8" cy="8" r="7.5" fill="#f8a010" stroke="#c86800"/><path d="M4.5 6.5v5M8 5.5v6M11.5 6.5v5" stroke="#c84800" stroke-width="1.6"/><circle cx="4.5" cy="4.5" r="1" fill="#c84800"/><circle cx="8" cy="3.5" r="1" fill="#c84800"/><circle cx="11.5" cy="4.5" r="1" fill="#c84800"/></symbol><symbol id="tk_folder" viewBox="0 0 16 16" overflow="visible"><path d="M.5 13.5v-11h5l1.5 2h8.5v9z" fill="#f8e078" stroke="#b89020"/><path d="M.5 13.5l2-7h13l-2 7z" fill="#fcec98" stroke="#b89020"/></symbol><symbol id="tk_word" viewBox="0 0 16 16" overflow="visible"><rect x=".5" y=".5" width="15" height="15" fill="#fff" stroke="#101088"/><rect x="0" y="0" width="16" height="3" fill="#101088"/><rect x="0" y="13" width="16" height="3" fill="#101088"/><rect x="0" y="0" width="3" height="16" fill="#101088"/><rect x="13" y="0" width="3" height="16" fill="#101088"/><text x="2.5" y="13" font-size="12" font-weight="bold" font-family="Liberation Sans,sans-serif" fill="#101088">W</text></symbol><symbol id="tk_mic" viewBox="0 0 16 18" overflow="visible"><path d="M9 2.5l3-2 3 3-2 3z" fill="#ddd" stroke="#333" stroke-width=".8"/><path d="M9.5 3.5l-6 8M12.5 6l-8 6" stroke="#333" stroke-width=".9"/><path d="M3.5 11.5q-2 3 0 4.5t4-.5" fill="none" stroke="#333" stroke-width=".9"/></symbol><symbol id="tk_lang" viewBox="0 0 17 18" overflow="visible"><rect x=".5" y=".5" width="15" height="11" fill="#fff" stroke="#222"/><rect x=".5" y=".5" width="15" height="2.5" fill="#222"/><path d="M2.5 5.5h5M2.5 7.5h4M2.5 9.5h3" stroke="#444" stroke-width=".8"/><path d="M11 4.5l3 2-5 6-2-1z" fill="#ccc" stroke="#222" stroke-width=".7"/><path d="M7 12q-1 3 1.5 4t3-1.5" fill="none" stroke="#222" stroke-width=".9"/></symbol><symbol id="tk_oct" viewBox="0 0 17 17" overflow="visible"><path d="M5 .5h7l4.5 4.5v7l-4.5 4.5h-7l-4.5-4.5v-7z" fill="#0818d8"/><path d="M1 9h3q1.5-6 3 0t3 0 3-1h3" fill="none" stroke="#f8f020" stroke-width="1.2"/></symbol><symbol id="tk_net" viewBox="0 0 16 18" overflow="visible"><rect x="6.5" y=".5" width="9" height="8" fill="#7ac8f0" stroke="#4a88c8"/><rect x="9" y="9.5" width="4" height="2" fill="#b8c8d8"/><rect x=".5" y="5.5" width="9" height="8" fill="#90d4f8" stroke="#4a88c8"/><rect x="3" y="14.5" width="4" height="1.5" fill="#b8c8d8"/><ellipse cx="5" cy="16.8" rx="4" ry="1" fill="#c8d0e0"/></symbol><symbol id="tk_wordico" viewBox="0 0 16 16" overflow="visible"><path d="M4.5 .5h8l3 3v12h-11z" fill="#fff" stroke="#333"/><path d="M6 6h8M6 8h8M6 10h8M6 12h8" stroke="#999" stroke-width=".7"/><rect x="0" y="2" width="11" height="10" fill="#fff" stroke="#1010c0" stroke-dasharray="1 1"/><text x="1.5" y="10.5" font-size="9" font-weight="bold" font-family="Liberation Sans,sans-serif" fill="#1010a0">W</text></symbol><symbol id="art_banner" viewBox="0 0 944 159"><rect width="944" height="79" fill="url(#gBan)"/><rect y="79" width="944" height="46" fill="#3a2f26"/><path d="M849 0L716 77.7 712 82.5 741 125H944V0z" fill="url(#gCap)"/><path d="M849 0L716 77.7" stroke="#857a64" stroke-width="1.2" opacity=".7"/><path d="M805 23L776 18 740 12 720 30 700 62 738 64 805 39z" fill="#7a4528" opacity=".6"/><ellipse cx="700" cy="36" rx="31" ry="27" fill="#85492b" opacity=".72" transform="rotate(-20 700 36)"/><path d="M805 25Q773 36 741 55" fill="none" stroke="#a86840" stroke-width="1.3"/><path d="M805 31Q756 38 727 50" fill="none" stroke="#94563a" stroke-width="0.8"/><path d="M805 36Q746 50 706 55" fill="none" stroke="#94563a" stroke-width="1.2"/><path d="M805 23Q751 45 713 59" fill="none" stroke="#b8744a" stroke-width="0.8"/><path d="M805 35Q740 48 695 70" fill="none" stroke="#b8744a" stroke-width="1.0"/><path d="M805 25Q779 32 739 52" fill="none" stroke="#9a5a36" stroke-width="0.9"/><path d="M805 39Q786 47 757 54" fill="none" stroke="#7a4226" stroke-width="0.9"/><path d="M805 31Q787 40 752 43" fill="none" stroke="#94563a" stroke-width="1.0"/><path d="M805 39Q765 42 727 52" fill="none" stroke="#7a4226" stroke-width="0.9"/><path d="M805 35Q776 36 764 36" fill="none" stroke="#9a5a36" stroke-width="1.1"/><path d="M805 28Q788 33 763 38" fill="none" stroke="#b8744a" stroke-width="1.0"/><path d="M805 33Q750 44 712 50" fill="none" stroke="#94563a" stroke-width="1.0"/><path d="M805 34Q782 46 740 61" fill="none" stroke="#a5623c" stroke-width="1.4"/><path d="M805 33Q778 36 756 48" fill="none" stroke="#9a5a36" stroke-width="0.9"/><path d="M805 23Q777 43 750 56" fill="none" stroke="#8c4e2c" stroke-width="1.3"/><path d="M805 34Q746 50 691 59" fill="none" stroke="#a5623c" stroke-width="1.4"/><path d="M805 35Q774 42 725 51" fill="none" stroke="#a86840" stroke-width="0.8"/><path d="M805 26Q786 41 753 56" fill="none" stroke="#94563a" stroke-width="1.1"/><path d="M805 38Q767 38 725 48" fill="none" stroke="#8c4e2c" stroke-width="1.0"/><path d="M805 24Q771 31 743 46" fill="none" stroke="#94563a" stroke-width="1.0"/><path d="M805 29Q776 37 762 56" fill="none" stroke="#7a4226" stroke-width="0.9"/><path d="M805 34Q769 34 749 41" fill="none" stroke="#6e3a20" stroke-width="1.1"/><path d="M805 28Q759 34 726 50" fill="none" stroke="#94563a" stroke-width="0.9"/><path d="M805 35Q776 46 746 53" fill="none" stroke="#8c4e2c" stroke-width="1.3"/><path d="M805 22Q770 30 724 47" fill="none" stroke="#9a5a36" stroke-width="1.0"/><path d="M805 35Q756 38 712 49" fill="none" stroke="#6e3a20" stroke-width="1.3"/><path d="M805 36Q766 41 726 57" fill="none" stroke="#b8744a" stroke-width="1.4"/><path d="M805 28Q775 34 742 52" fill="none" stroke="#b8744a" stroke-width="1.4"/><path d="M805 28Q751 43 712 70" fill="none" stroke="#7a4226" stroke-width="1.2"/><path d="M805 37Q793 43 763 47" fill="none" stroke="#a86840" stroke-width="1.1"/><path d="M805 31Q771 36 755 39" fill="none" stroke="#8c4e2c" stroke-width="0.9"/><path d="M805 35Q777 41 751 55" fill="none" stroke="#94563a" stroke-width="1.0"/><path d="M805 26Q772 34 758 51" fill="none" stroke="#b8744a" stroke-width="1.2"/><path d="M805 38Q782 47 748 53" fill="none" stroke="#6e3a20" stroke-width="0.9"/><path d="M805 39Q768 54 718 60" fill="none" stroke="#8c4e2c" stroke-width="0.9"/><path d="M805 26Q772 35 755 53" fill="none" stroke="#6e3a20" stroke-width="1.2"/><path d="M805 29Q785 40 745 62" fill="none" stroke="#94563a" stroke-width="0.9"/><path d="M805 28Q766 47 737 57" fill="none" stroke="#b8744a" stroke-width="1.1"/><path d="M805 39Q784 43 762 56" fill="none" stroke="#6e3a20" stroke-width="1.2"/><path d="M805 25Q761 41 718 55" fill="none" stroke="#a5623c" stroke-width="1.2"/><path d="M805 33Q745 51 696 73" fill="none" stroke="#b8744a" stroke-width="0.8"/><path d="M805 31Q752 45 691 66" fill="none" stroke="#8c4e2c" stroke-width="1.4"/><path d="M805 25Q781 25 763 40" fill="none" stroke="#a5623c" stroke-width="0.9"/><path d="M805 36Q769 39 751 50" fill="none" stroke="#94563a" stroke-width="1.3"/><path d="M805 26Q770 42 732 61" fill="none" stroke="#8c4e2c" stroke-width="1.2"/><path d="M805 23Q773 45 722 64" fill="none" stroke="#a5623c" stroke-width="0.8"/><path d="M805 37Q769 49 735 56" fill="none" stroke="#b8744a" stroke-width="0.9"/><path d="M805 25Q748 46 710 63" fill="none" stroke="#7a4226" stroke-width="0.9"/><path d="M805 24Q775 30 752 46" fill="none" stroke="#a86840" stroke-width="1.0"/><path d="M805 36Q757 39 719 47" fill="none" stroke="#6e3a20" stroke-width="1.0"/><path d="M805 34Q766 46 744 52" fill="none" stroke="#9a5a36" stroke-width="1.1"/><path d="M805 35Q773 39 735 57" fill="none" stroke="#b8744a" stroke-width="1.1"/><path d="M805 25Q787 42 754 56" fill="none" stroke="#9a5a36" stroke-width="1.2"/><path d="M805 34Q762 41 735 56" fill="none" stroke="#9a5a36" stroke-width="1.4"/><path d="M805 39Q774 40 749 39" fill="none" stroke="#8c4e2c" stroke-width="1.3"/><path d="M805 34Q753 56 700 71" fill="none" stroke="#9a5a36" stroke-width="0.9"/><path d="M805 31Q763 49 710 58" fill="none" stroke="#7a4226" stroke-width="0.9"/><path d="M805 33Q767 47 715 62" fill="none" stroke="#8c4e2c" stroke-width="1.3"/><path d="M805 39Q780 52 746 62" fill="none" stroke="#9a5a36" stroke-width="1.4"/><path d="M805 31Q773 36 757 49" fill="none" stroke="#94563a" stroke-width="1.2"/><path d="M805 30Q760 35 726 49" fill="none" stroke="#94563a" stroke-width="0.9"/><path d="M805 31Q742 54 691 72" fill="none" stroke="#b8744a" stroke-width="1.2"/><path d="M805 36Q785 44 745 56" fill="none" stroke="#94563a" stroke-width="0.8"/><path d="M805 36Q787 39 755 44" fill="none" stroke="#a86840" stroke-width="0.9"/><path d="M805 35Q769 40 751 49" fill="none" stroke="#a5623c" stroke-width="1.1"/><path d="M805 30Q763 47 718 60" fill="none" stroke="#6e3a20" stroke-width="1.3"/><path d="M805 29Q762 52 707 66" fill="none" stroke="#9a5a36" stroke-width="1.2"/><path d="M805 28Q774 36 753 55" fill="none" stroke="#6e3a20" stroke-width="0.9"/><path d="M805 33Q764 45 738 53" fill="none" stroke="#a86840" stroke-width="0.9"/><path d="M805 34Q757 43 714 62" fill="none" stroke="#a5623c" stroke-width="1.0"/><path d="M805 26Q788 17 776 21T762 29T747 10" fill="none" stroke="#9a5a36" stroke-width="0.9"/><path d="M805 28Q772 34 760 38T736 30T704 29" fill="none" stroke="#b8744a" stroke-width="0.9"/><path d="M805 28Q779 30 767 34T740 37T728 20" fill="none" stroke="#a86840" stroke-width="1.0"/><path d="M805 33Q792 35 780 39T727 17T701 7" fill="none" stroke="#b8744a" stroke-width="0.8"/><path d="M805 36Q770 29 758 33T701 21T663 7" fill="none" stroke="#a5623c" stroke-width="0.9"/><path d="M805 24Q767 26 755 30T721 19T685 32" fill="none" stroke="#9a5a36" stroke-width="0.8"/><path d="M805 30Q759 27 747 31T755 32T751 15" fill="none" stroke="#94563a" stroke-width="0.8"/><path d="M805 26Q793 22 781 26T766 24T751 1" fill="none" stroke="#a86840" stroke-width="0.8"/><path d="M805 35Q751 40 739 44T745 19T750 12" fill="none" stroke="#b8744a" stroke-width="0.8"/><path d="M805 29Q760 34 748 38T724 21T695 5" fill="none" stroke="#a5623c" stroke-width="1.0"/><path d="M805 24Q762 16 750 20T736 17T737 20" fill="none" stroke="#94563a" stroke-width="0.9"/><path d="M805 23Q796 17 784 21T760 20T762 12" fill="none" stroke="#b8744a" stroke-width="0.9"/><path d="M805 33Q748 31 736 35T699 35T680 10" fill="none" stroke="#8c4e2c" stroke-width="1.0"/><path d="M805 25Q780 22 768 26T753 11T745 8" fill="none" stroke="#a5623c" stroke-width="1.0"/><path d="M805 29Q763 33 751 37T760 27T758 2" fill="none" stroke="#7a4226" stroke-width="1.1"/><path d="M805 25Q797 21 785 25T736 32T705 45" fill="none" stroke="#6e3a20" stroke-width="1.1"/><path d="M805 25Q796 27 784 31T723 10T688 6" fill="none" stroke="#94563a" stroke-width="1.1"/><path d="M805 29Q782 27 770 31T769 25T772 10" fill="none" stroke="#6e3a20" stroke-width="1.0"/><path d="M805 29Q749 31 737 35T731 18T747 3" fill="none" stroke="#7a4226" stroke-width="1.0"/><path d="M805 24Q773 18 761 22T734 24T712 33" fill="none" stroke="#7a4226" stroke-width="0.8"/><path d="M805 22Q767 25 755 29T770 29T761 7" fill="none" stroke="#6e3a20" stroke-width="1.0"/><path d="M805 24Q764 29 752 33T736 25T702 29" fill="none" stroke="#a5623c" stroke-width="0.7"/><path d="M805 27Q755 22 743 26T723 5T686 1" fill="none" stroke="#9a5a36" stroke-width="1.0"/><path d="M805 34Q778 27 766 31T769 11T748 2" fill="none" stroke="#6e3a20" stroke-width="0.8"/><path d="M805 32Q766 35 754 39T712 35T695 43" fill="none" stroke="#9a5a36" stroke-width="0.8"/><path d="M805 28Q791 34 779 38T737 40T671 44" fill="none" stroke="#a5623c" stroke-width="0.8"/><path d="M805 31Q796 35 784 39T781 20T765 1" fill="none" stroke="#a5623c" stroke-width="1.0"/><path d="M805 35Q778 25 766 29T758 29T749 16" fill="none" stroke="#8c4e2c" stroke-width="1.0"/><path d="M805 23Q795 28 783 32T743 32T712 26" fill="none" stroke="#94563a" stroke-width="1.0"/><path d="M805 29Q760 28 748 32T736 50T734 45" fill="none" stroke="#a5623c" stroke-width="0.8"/><path d="M805 28Q763 22 751 26T716 26T702 25" fill="none" stroke="#8c4e2c" stroke-width="1.1"/><path d="M805 31Q791 28 779 32T740 29T715 24" fill="none" stroke="#6e3a20" stroke-width="1.0"/><path d="M805 32Q763 31 751 35T756 26T746 9" fill="none" stroke="#6e3a20" stroke-width="0.8"/><path d="M805 25Q774 30 762 34T713 48T681 43" fill="none" stroke="#a86840" stroke-width="0.9"/><path d="M805 29Q759 24 747 28T757 8T760 10" fill="none" stroke="#6e3a20" stroke-width="0.9"/><path d="M805 23Q797 16 785 20T724 36T663 35" fill="none" stroke="#9a5a36" stroke-width="1.0"/><path d="M805 32Q797 35 785 39T737 25T707 28" fill="none" stroke="#6e3a20" stroke-width="1.1"/><path d="M805 28Q792 28 780 32T740 30T691 33" fill="none" stroke="#6e3a20" stroke-width="0.9"/><path d="M805 35Q750 30 738 34T719 13T704 16" fill="none" stroke="#a5623c" stroke-width="1.1"/><path d="M805 25Q756 21 744 25T756 5T752 4" fill="none" stroke="#7a4226" stroke-width="0.7"/><path d="M805 23Q781 26 769 30T760 16T726 8" fill="none" stroke="#6e3a20" stroke-width="0.9"/><path d="M805 23Q755 16 743 20T734 22T728 30" fill="none" stroke="#94563a" stroke-width="0.8"/><path d="M805 31Q757 30 745 34T709 9T682 5" fill="none" stroke="#94563a" stroke-width="1.0"/><path d="M805 27Q767 28 755 32T736 22T693 37" fill="none" stroke="#6e3a20" stroke-width="0.8"/><path d="M805 29Q751 33 739 37T725 27T714 19" fill="none" stroke="#6e3a20" stroke-width="1.1"/><path d="M805 33Q768 34 756 38T718 30T668 37" fill="none" stroke="#a86840" stroke-width="0.8"/><path d="M805 30Q775 24 763 28T764 31T768 12" fill="none" stroke="#9a5a36" stroke-width="0.8"/><path d="M805 34Q761 37 749 41T748 35T739 1" fill="none" stroke="#7a4226" stroke-width="1.0"/><path d="M805 35Q794 32 782 36T762 18T751 16" fill="none" stroke="#6e3a20" stroke-width="0.7"/><path d="M805 34Q756 36 744 40T705 30T671 17" fill="none" stroke="#94563a" stroke-width="0.9"/><path d="M805 35Q785 27 773 31T776 32T753 6" fill="none" stroke="#a86840" stroke-width="0.8"/><path d="M805 33Q758 36 746 40T697 30T664 30" fill="none" stroke="#94563a" stroke-width="0.9"/><path d="M805 32Q775 37 763 41T731 16T694 4" fill="none" stroke="#8c4e2c" stroke-width="1.0"/><path d="M805 34Q759 31 747 35T723 25T705 16" fill="none" stroke="#6e3a20" stroke-width="0.7"/><path d="M805 30Q753 35 741 39T728 39T724 27" fill="none" stroke="#7a4226" stroke-width="0.9"/><path d="M805 26Q778 17 766 21T762 2T746 5" fill="none" stroke="#a5623c" stroke-width="0.9"/><path d="M805 34Q773 26 761 30T733 9T732 10" fill="none" stroke="#94563a" stroke-width="1.0"/><path d="M805 33Q787 28 775 32T738 34T716 36" fill="none" stroke="#b8744a" stroke-width="0.8"/><path d="M805 31Q758 24 746 28T735 41T716 30" fill="none" stroke="#a5623c" stroke-width="0.7"/><path d="M805 22Q796 27 784 31T736 10T670 8" fill="none" stroke="#9a5a36" stroke-width="0.9"/><path d="M714 53q-2 -0 -6 -5t2 -3" fill="none" stroke="#6e3a20" stroke-width=".8"/><path d="M690 28q4 -4 4 -2t1 5" fill="none" stroke="#6e3a20" stroke-width=".8"/><path d="M686 20q6 -5 2 -3t1 4" fill="none" stroke="#8c4e2c" stroke-width=".8"/><path d="M709 51q2 -1 0 4t0 -1" fill="none" stroke="#9a5a36" stroke-width=".8"/><path d="M679 55q-8 -0 8 8t-1 -4" fill="none" stroke="#7a4226" stroke-width=".8"/><path d="M688 7q-0 2 -6 -2t3 -2" fill="none" stroke="#a5623c" stroke-width=".8"/><path d="M739 54q5 -4 2 -5t2 -4" fill="none" stroke="#a86840" stroke-width=".8"/><path d="M730 10q-2 -4 -1 1t-3 5" fill="none" stroke="#a86840" stroke-width=".8"/><path d="M696 24q-2 1 -4 -6t-2 -3" fill="none" stroke="#b8744a" stroke-width=".8"/><path d="M711 7q-10 -4 -7 5t-6 4" fill="none" stroke="#7a4226" stroke-width=".8"/><path d="M670 19q-1 9 4 -7t-6 -1" fill="none" stroke="#7a4226" stroke-width=".8"/><path d="M724 44q-7 -0 -1 1t-6 2" fill="none" stroke="#8c4e2c" stroke-width=".8"/><path d="M739 38q-3 5 -4 2t2 9" fill="none" stroke="#7a4226" stroke-width=".8"/><path d="M689 29q-9 2 5 1t-2 9" fill="none" stroke="#8c4e2c" stroke-width=".8"/><path d="M699 61q5 2 -0 -5t2 4" fill="none" stroke="#b8744a" stroke-width=".8"/><path d="M696 41q2 -11 -6 -5t-2 -9" fill="none" stroke="#b8744a" stroke-width=".8"/><path d="M669 61q7 -7 6 3t-5 -3" fill="none" stroke="#7a4226" stroke-width=".8"/><path d="M700 12q-4 3 -6 6t1 -1" fill="none" stroke="#7a4226" stroke-width=".8"/><path d="M687 38q-6 4 -5 -5t4 2" fill="none" stroke="#7a4226" stroke-width=".8"/><path d="M683 19q7 -5 -4 6t-5 6" fill="none" stroke="#a5623c" stroke-width=".8"/><path d="M699 29q-4 1 -6 2t1 3" fill="none" stroke="#9a5a36" stroke-width=".8"/><path d="M674 51q4 -6 1 6t7 2" fill="none" stroke="#6e3a20" stroke-width=".8"/><path d="M683 44q-9 -10 10 -3t-9 -1" fill="none" stroke="#7a4226" stroke-width=".8"/><path d="M708 25q0 8 6 -3t8 5" fill="none" stroke="#8c4e2c" stroke-width=".8"/><path d="M694 41q10 10 11 -9t-11 8" fill="none" stroke="#9a5a36" stroke-width=".8"/><path d="M705 55q-6 6 -5 9t-8 -5" fill="none" stroke="#a5623c" stroke-width=".8"/><path d="M737 27q1 7 -0 -9t1 7" fill="none" stroke="#94563a" stroke-width=".8"/><path d="M709 11q-4 -1 5 1t3 2" fill="none" stroke="#a86840" stroke-width=".8"/><path d="M681 27q-2 -9 7 -7t3 9" fill="none" stroke="#6e3a20" stroke-width=".8"/><path d="M718 22q4 8 4 6t1 -3" fill="none" stroke="#94563a" stroke-width=".8"/><path d="M720 6q3 4 2 -0t-4 0" fill="none" stroke="#7a4226" stroke-width=".8"/><path d="M738 24q-1 5 -2 -10t-6 -11" fill="none" stroke="#7a4226" stroke-width=".8"/><path d="M670 46q1 -3 8 5t-2 -1" fill="none" stroke="#a5623c" stroke-width=".8"/><path d="M679 59q-3 5 4 1t-0 -3" fill="none" stroke="#7a4226" stroke-width=".8"/><path d="M670 10q-2 -6 5 -2t2 4" fill="none" stroke="#a5623c" stroke-width=".8"/><path d="M679 10q8 -8 -6 7t-6 -0" fill="none" stroke="#a86840" stroke-width=".8"/><path d="M674 40q-1 -2 -4 5t-3 3" fill="none" stroke="#7a4226" stroke-width=".8"/><path d="M721 54q3 -0 -4 -6t1 -1" fill="none" stroke="#a86840" stroke-width=".8"/><path d="M733 40q-5 6 6 8t1 7" fill="none" stroke="#b8744a" stroke-width=".8"/><path d="M687 33q1 -0 -9 8t-7 2" fill="none" stroke="#7a4226" stroke-width=".8"/><path d="M728 23q0 1 -6 1t-2 6" fill="none" stroke="#6e3a20" stroke-width=".8"/><path d="M704 27q2 -7 -7 -3t5 -2" fill="none" stroke="#7a4226" stroke-width=".8"/><path d="M738 32q6 6 -2 -1t5 -5" fill="none" stroke="#6e3a20" stroke-width=".8"/><path d="M674 61q-4 7 4 -4t5 5" fill="none" stroke="#8c4e2c" stroke-width=".8"/><path d="M670 32q-10 -6 -6 5t-3 -8" fill="none" stroke="#a5623c" stroke-width=".8"/><path d="M708 22q-2 3 -0 -6t2 5" fill="none" stroke="#a5623c" stroke-width=".8"/><path d="M708 12q-5 5 -4 -0t4 -3" fill="none" stroke="#94563a" stroke-width=".8"/><path d="M713 43q-4 6 -2 8t-5 7" fill="none" stroke="#7a4226" stroke-width=".8"/><path d="M704 7q-5 1 9 -2t6 -8" fill="none" stroke="#a86840" stroke-width=".8"/><path d="M681 35q5 8 0 -1t8 3" fill="none" stroke="#a5623c" stroke-width=".8"/><path d="M717 59q-2 9 9 6t-5 -8" fill="none" stroke="#b8744a" stroke-width=".8"/><path d="M678 9q8 -4 6 8t8 -7" fill="none" stroke="#a5623c" stroke-width=".8"/><path d="M730 25q10 10 -4 2t9 3" fill="none" stroke="#b8744a" stroke-width=".8"/><path d="M672 40q2 -4 1 -2t1 5" fill="none" stroke="#94563a" stroke-width=".8"/><path d="M700 35q-11 -5 -10 5t-6 5" fill="none" stroke="#7a4226" stroke-width=".8"/><path d="M740 16q5 -1 -5 3t5 -1" fill="none" stroke="#94563a" stroke-width=".8"/><path d="M695 38q-7 2 -8 -3t8 6" fill="none" stroke="#94563a" stroke-width=".8"/><path d="M711 25q3 1 -6 -3t4 5" fill="none" stroke="#9a5a36" stroke-width=".8"/><path d="M716 57q-1 3 -5 1t2 -6" fill="none" stroke="#9a5a36" stroke-width=".8"/><path d="M730 31q-4 4 -3 -2t-6 5" fill="none" stroke="#9a5a36" stroke-width=".8"/><path d="M708 12q7 -3 1 -4t3 3" fill="none" stroke="#a5623c" stroke-width=".8"/><path d="M711 12q2 9 0 -4t-1 1" fill="none" stroke="#7a4226" stroke-width=".8"/><path d="M714 54q-5 6 4 -6t-1 6" fill="none" stroke="#6e3a20" stroke-width=".8"/><path d="M677 54q-6 4 7 2t9 1" fill="none" stroke="#8c4e2c" stroke-width=".8"/><path d="M685 48q2 -4 -5 -10t-0 1" fill="none" stroke="#8c4e2c" stroke-width=".8"/><path d="M674 47q7 5 6 1t-1 -3" fill="none" stroke="#6e3a20" stroke-width=".8"/><path d="M672 24q-6 -6 -7 -1t6 -1" fill="none" stroke="#94563a" stroke-width=".8"/><path d="M725 34q-4 -2 -2 1t-0 -2" fill="none" stroke="#a5623c" stroke-width=".8"/><path d="M725 27q2 8 -4 -8t9 0" fill="none" stroke="#a86840" stroke-width=".8"/><path d="M706 54q-2 4 -2 -5t6 -2" fill="none" stroke="#8c4e2c" stroke-width=".8"/><path d="M804.4 20.3L826.2 34 823.5 43.1 800.7 35.8z" fill="#cfc59c"/><path d="M808.5 23l-3.5 14M813 26l-3.5 13.5M817.5 28.5l-3.5 13M822 31.5l-3 12" stroke="#9e9060" stroke-width=".8"/><path d="M826.2 34l8.2 6-2.4 7-8.5-3.9z" fill="#8f532c"/><path d="M834 42.5L934 100.5" stroke="#2c2618" stroke-width="5"/><path d="M833.5 41L933.5 99" stroke="#cfc28a" stroke-width="1.5" stroke-dasharray="1.5 2.5"/><path d="M834.5 44L934.5 102" stroke="#a89a62" stroke-width="1.2" stroke-dasharray="1.2 2.8" stroke-dashoffset="2"/><circle cx="928" cy="111.5" r="10" fill="#231f1b"/><circle cx="928" cy="111.5" r="5.5" fill="none" stroke="#35312b" stroke-width="1.5"/><rect y="79" width="944" height="46" fill="#2a221c" opacity=".35"/><path d="M714 79L712 82.5 741 125H944V79z" fill="#1e1a15" opacity=".55"/><rect width="300" height="79" fill="url(#gHaze)"/><rect y="125" width="944" height="34" fill="url(#gNav)"/><g transform="translate(55.3 53.8) scale(1.21 1)"><path d="M0-38.5L1.7-33 8-29.8 7.5-28.2 1.9-30.3 1.7-25 5.2-17.5 3.6-17 0-23-3.6-17-5.2-17.5-1.7-25-1.9-30.3-7.5-28.2-8-29.8-1.7-33z" transform="rotate(0)" fill="url(#gGold)"/><path d="M0-38.5L1.7-33 8-29.8 7.5-28.2 1.9-30.3 1.7-25 5.2-17.5 3.6-17 0-23-3.6-17-5.2-17.5-1.7-25-1.9-30.3-7.5-28.2-8-29.8-1.7-33z" transform="rotate(30)" fill="url(#gGold)"/><path d="M0-38.5L1.7-33 8-29.8 7.5-28.2 1.9-30.3 1.7-25 5.2-17.5 3.6-17 0-23-3.6-17-5.2-17.5-1.7-25-1.9-30.3-7.5-28.2-8-29.8-1.7-33z" transform="rotate(60)" fill="url(#gGold)"/><path d="M0-38.5L1.7-33 8-29.8 7.5-28.2 1.9-30.3 1.7-25 5.2-17.5 3.6-17 0-23-3.6-17-5.2-17.5-1.7-25-1.9-30.3-7.5-28.2-8-29.8-1.7-33z" transform="rotate(90)" fill="url(#gGold)"/><path d="M0-38.5L1.7-33 8-29.8 7.5-28.2 1.9-30.3 1.7-25 5.2-17.5 3.6-17 0-23-3.6-17-5.2-17.5-1.7-25-1.9-30.3-7.5-28.2-8-29.8-1.7-33z" transform="rotate(120)" fill="url(#gGold)"/><path d="M0-38.5L1.7-33 8-29.8 7.5-28.2 1.9-30.3 1.7-25 5.2-17.5 3.6-17 0-23-3.6-17-5.2-17.5-1.7-25-1.9-30.3-7.5-28.2-8-29.8-1.7-33z" transform="rotate(150)" fill="url(#gGold)"/><path d="M0-38.5L1.7-33 8-29.8 7.5-28.2 1.9-30.3 1.7-25 5.2-17.5 3.6-17 0-23-3.6-17-5.2-17.5-1.7-25-1.9-30.3-7.5-28.2-8-29.8-1.7-33z" transform="rotate(180)" fill="url(#gGold)"/><path d="M0-38.5L1.7-33 8-29.8 7.5-28.2 1.9-30.3 1.7-25 5.2-17.5 3.6-17 0-23-3.6-17-5.2-17.5-1.7-25-1.9-30.3-7.5-28.2-8-29.8-1.7-33z" transform="rotate(210)" fill="url(#gGold)"/><path d="M0-38.5L1.7-33 8-29.8 7.5-28.2 1.9-30.3 1.7-25 5.2-17.5 3.6-17 0-23-3.6-17-5.2-17.5-1.7-25-1.9-30.3-7.5-28.2-8-29.8-1.7-33z" transform="rotate(240)" fill="url(#gGold)"/><path d="M0-38.5L1.7-33 8-29.8 7.5-28.2 1.9-30.3 1.7-25 5.2-17.5 3.6-17 0-23-3.6-17-5.2-17.5-1.7-25-1.9-30.3-7.5-28.2-8-29.8-1.7-33z" transform="rotate(270)" fill="url(#gGold)"/><path d="M0-38.5L1.7-33 8-29.8 7.5-28.2 1.9-30.3 1.7-25 5.2-17.5 3.6-17 0-23-3.6-17-5.2-17.5-1.7-25-1.9-30.3-7.5-28.2-8-29.8-1.7-33z" transform="rotate(300)" fill="url(#gGold)"/><path d="M0-38.5L1.7-33 8-29.8 7.5-28.2 1.9-30.3 1.7-25 5.2-17.5 3.6-17 0-23-3.6-17-5.2-17.5-1.7-25-1.9-30.3-7.5-28.2-8-29.8-1.7-33z" transform="rotate(330)" fill="url(#gGold)"/><ellipse rx="20.5" ry="17" fill="#e0c050"/><ellipse rx="19.5" ry="16" fill="url(#gGlobe)"/><path d="M-9-9q6-5 12-1l-2 6-5 2-4-2zM1 3l6-1 2 6-4 6-3-5z" fill="#5a9a6a" opacity=".5"/></g></symbol><symbol id="art_seal" viewBox="0 0 82 82" overflow="visible"><circle cx="41" cy="41" r="40" fill="#fbf9f2" stroke="#e8c050" stroke-width="1.5" stroke-dasharray="1.5 1.5"/><circle cx="41" cy="41" r="31" fill="#3f9cc4" stroke="#b03030" stroke-width="1"/><path d="M0-26.5l1 2 2 .3-1.5 1.5.4 2.1-1.9-1-1.9 1 .4-2.1-1.5-1.5 2-.3z" transform="translate(41 41) rotate(-75)" fill="#f0d040"/><path d="M0-26.5l1 2 2 .3-1.5 1.5.4 2.1-1.9-1-1.9 1 .4-2.1-1.5-1.5 2-.3z" transform="translate(41 41) rotate(-60)" fill="#f0d040"/><path d="M0-26.5l1 2 2 .3-1.5 1.5.4 2.1-1.9-1-1.9 1 .4-2.1-1.5-1.5 2-.3z" transform="translate(41 41) rotate(-45)" fill="#f0d040"/><path d="M0-26.5l1 2 2 .3-1.5 1.5.4 2.1-1.9-1-1.9 1 .4-2.1-1.5-1.5 2-.3z" transform="translate(41 41) rotate(-30)" fill="#f0d040"/><path d="M0-26.5l1 2 2 .3-1.5 1.5.4 2.1-1.9-1-1.9 1 .4-2.1-1.5-1.5 2-.3z" transform="translate(41 41) rotate(-15)" fill="#f0d040"/><path d="M0-26.5l1 2 2 .3-1.5 1.5.4 2.1-1.9-1-1.9 1 .4-2.1-1.5-1.5 2-.3z" transform="translate(41 41) rotate(0)" fill="#f0d040"/><path d="M0-26.5l1 2 2 .3-1.5 1.5.4 2.1-1.9-1-1.9 1 .4-2.1-1.5-1.5 2-.3z" transform="translate(41 41) rotate(15)" fill="#f0d040"/><path d="M0-26.5l1 2 2 .3-1.5 1.5.4 2.1-1.9-1-1.9 1 .4-2.1-1.5-1.5 2-.3z" transform="translate(41 41) rotate(30)" fill="#f0d040"/><path d="M0-26.5l1 2 2 .3-1.5 1.5.4 2.1-1.9-1-1.9 1 .4-2.1-1.5-1.5 2-.3z" transform="translate(41 41) rotate(45)" fill="#f0d040"/><path d="M0-26.5l1 2 2 .3-1.5 1.5.4 2.1-1.9-1-1.9 1 .4-2.1-1.5-1.5 2-.3z" transform="translate(41 41) rotate(60)" fill="#f0d040"/><path d="M0-26.5l1 2 2 .3-1.5 1.5.4 2.1-1.9-1-1.9 1 .4-2.1-1.5-1.5 2-.3z" transform="translate(41 41) rotate(75)" fill="#f0d040"/><path d="M0-26.5l1 2 2 .3-1.5 1.5.4 2.1-1.9-1-1.9 1 .4-2.1-1.5-1.5 2-.3z" transform="translate(41 41) rotate(-100)" fill="#f0d040"/><path d="M0-26.5l1 2 2 .3-1.5 1.5.4 2.1-1.9-1-1.9 1 .4-2.1-1.5-1.5 2-.3z" transform="translate(41 41) rotate(100)" fill="#f0d040"/><path d="M0-26.5l1 2 2 .3-1.5 1.5.4 2.1-1.9-1-1.9 1 .4-2.1-1.5-1.5 2-.3z" transform="translate(41 41) rotate(-118)" fill="#f0d040"/><path d="M0-26.5l1 2 2 .3-1.5 1.5.4 2.1-1.9-1-1.9 1 .4-2.1-1.5-1.5 2-.3z" transform="translate(41 41) rotate(118)" fill="#f0d040"/><path d="M18 20q23-5 46 0v23q0 18-23 28-23-10-23-28z" fill="#6e6716" stroke="#38330a" stroke-width="1.2"/><path d="M27 30q7-3.5 14 0 7-3.5 14 0v11q-7-3-14 0-7-3-14 0z" fill="#fff" stroke="#999" stroke-width=".6"/><path d="M41 30v11" stroke="#999" stroke-width=".6"/><path d="M30 33h8M30 35.5h8M30 38h8M44 33h8M44 35.5h8M44 38h8" stroke="#ccc" stroke-width=".5"/><path d="M41 44l3 3 4-1-2 4 2 4-4-1-3 3-3-3-4 1 2-4-2-4 4 1z" fill="#e8b020"/><path d="M24 50q6 1 14 9l4 4-1.5 1.5-4-4q-9-5-12.5-10.5zM58 50q-6 1-14 9l-4 4 1.5 1.5 4-4q9-5 12.5-10.5z" fill="#f0ece0"/><circle cx="7" cy="48" r="1" fill="#222"/><circle cx="75" cy="48" r="1" fill="#222"/><path id="sealTop" d="M6.5 44a34.5 34.5 0 0 1 69 0" fill="none"/><path id="sealBot" d="M3.8 44a37.2 37.2 0 0 0 74.4 0" fill="none"/></symbol></defs></svg><div class="win top" style="left:0;top:0;width:1024px;height:768px"><div class="a" style="left:0px;top:0px;width:1024px;height:18px;background:linear-gradient(90deg,#808080,#a8a8a8 60%,#c0c0c0)"></div><svg class="a" style="left:2px;top:1px;" width="16" height="16" viewBox="0 0 16 16"><use href="#tk_wordico"/></svg><span class="t" style="left:19px;top:2.00px;font-size:11px;line-height:14px;font-weight:bold;color:#d4d0c8;letter-spacing:0.367px;">NCSG test plan 082409 - Microsoft Word</span><div class="a cap" style="left:972px;top:2px;width:16px;height:14px;"></div><div class="a cap" style="left:988px;top:2px;width:16px;height:14px;"></div><div class="a cap" style="left:1006px;top:2px;width:16px;height:14px;"></div><div class="a" style="left:976px;top:11px;width:6px;height:2px;background:#000"></div><svg class="a" style="left:991px;top:4px;" width="10" height="10" viewBox="0 0 10 10"><path d="M2.5 1h6v5h-2M2.5 2h6" stroke="#000" fill="none"/><rect x=".5" y="4" width="6" height="5" fill="none" stroke="#000"/><path d="M.5 4.5h6" stroke="#000"/></svg><svg class="a" style="left:1010px;top:5px;" width="8" height="8" viewBox="0 0 8 8"><path d="M0 0l8 7M1 0l7 7M8 0l-8 7M7 0l-7 7" stroke="#000" stroke-width="1"/></svg><div class="a grip" style="left:3px;top:24px;width:3px;height:14px;"></div><span class="t" style="left:16px;top:24.00px;font-size:11px;line-height:14px;letter-spacing:-0.431px;"><u>F</u>ile</span><span class="t" style="left:47.5px;top:24.00px;font-size:11px;line-height:14px;letter-spacing:-0.489px;"><u>E</u>dit</span><span class="t" style="left:82px;top:24.00px;font-size:11px;line-height:14px;letter-spacing:-0.411px;"><u>V</u>iew</span><span class="t" style="left:120px;top:24.00px;font-size:11px;line-height:14px;letter-spacing:0.082px;"><u>I</u>nsert</span><span class="t" style="left:164px;top:24.00px;font-size:11px;line-height:14px;letter-spacing:-0.140px;">F<u>o</u>rmat</span><span class="t" style="left:215px;top:24.00px;font-size:11px;line-height:14px;letter-spacing:-0.336px;"><u>T</u>ools</span><span class="t" style="left:256px;top:24.00px;font-size:11px;line-height:14px;letter-spacing:-0.259px;">T<u>a</u>ble</span><span class="t" style="left:298px;top:24.00px;font-size:11px;line-height:14px;letter-spacing:-0.354px;"><u>W</u>indow</span><span class="t" style="left:351.5px;top:24.00px;font-size:11px;line-height:14px;letter-spacing:-0.212px;"><u>M</u>endeley</span><span class="t" style="left:413.5px;top:24.00px;font-size:11px;line-height:14px;letter-spacing:-0.406px;"><u>H</u>elp</span><span class="t" style="left:451px;top:24.00px;font-size:11px;line-height:14px;letter-spacing:-0.540px;">Adob<u>e</u> PDF</span><span class="t" style="left:519.5px;top:24.00px;font-size:11px;line-height:14px;letter-spacing:-0.228px;">Acrobat <u>C</u>omments</span><div class="a" style="left:857px;top:22px;width:148px;height:18px;background:#fff"></div><span class="t" style="left:860px;top:23.00px;font-size:11px;line-height:14px;color:#808080;letter-spacing:-0.017px;">Type a question for help</span><div class="a" style="left:993px;top:23px;width:11px;height:16px;background:#d4d0c8"></div><svg class="a" style="left:996px;top:30px" width="5" height="3"><path d="M0 0H5L2.5 3z" fill="#000"/></svg><svg class="a" style="left:1010px;top:27px;" width="9" height="9" viewBox="0 0 9 9"><path d="M.5 .5l8 8M8.5 .5l-8 8" stroke="#000" stroke-width="1.5"/></svg><div class="a tb" style="left:292px;top:44px;width:721px;height:24px;"></div><div class="a grip" style="left:294px;top:48px;width:3px;height:15px;"></div><svg class="a" style="left:301px;top:49px;" width="16" height="16" viewBox="0 0 16 16"><use href="#styles"/></svg><div class="a" style="left:323px;top:47px;width:90px;height:18px;background:#fff"></div><div class="a" style="left:401px;top:48px;width:11px;height:16px;background:#d4d0c8"></div><svg class="a" style="left:404px;top:55px" width="5" height="3"><path d="M0 0H5L2.5 3z" fill="#000"/></svg><span class="t" style="left:325.5px;top:48.00px;font-size:11px;line-height:14px;color:#000;">Normal + Arial,</span><div class="a" style="left:415px;top:47px;width:111px;height:18px;background:#fff"></div><div class="a" style="left:514px;top:48px;width:11px;height:16px;background:#d4d0c8"></div><svg class="a" style="left:517px;top:55px" width="5" height="3"><path d="M0 0H5L2.5 3z" fill="#000"/></svg><span class="t" style="left:418px;top:48.00px;font-size:11px;line-height:14px;color:#000;">Arial</span><div class="a" style="left:527.5px;top:47px;width:37px;height:18px;background:#fff"></div><div class="a" style="left:552.5px;top:48px;width:11px;height:16px;background:#d4d0c8"></div><svg class="a" style="left:555.5px;top:55px" width="5" height="3"><path d="M0 0H5L2.5 3z" fill="#000"/></svg><span class="t" style="left:531px;top:48.00px;font-size:11px;line-height:14px;color:#000;">11</span><div class="a sep" style="left:567px;top:47px;width:1px;height:19px;"></div><span class="t" style="left:577px;top:48.00px;font-size:14px;line-height:18px;font-weight:bold;font-family:Liberation Serif,serif;color:#333;">B</span><span class="t" style="left:600px;top:48.00px;font-size:14px;line-height:18px;font-weight:bold;font-style:italic;font-family:Liberation Serif,serif;color:#444;">I</span><span class="t" style="left:622px;top:48.00px;font-size:13px;line-height:16px;font-weight:bold;font-family:Liberation Serif,serif;color:#444;text-decoration:underline;">U</span><div class="a sep" style="left:642px;top:47px;width:1px;height:19px;"></div><svg class="a" style="left:648px;top:49px;" width="16" height="16" viewBox="0 0 16 16"><use href="#al_l"/></svg><div class="a" style="left:669px;top:45px;width:23px;height:22px;border:1px solid #0a246a;background:#d4d5d8"></div><svg class="a" style="left:672px;top:49px;" width="16" height="16" viewBox="0 0 16 16"><use href="#al_c"/></svg><svg class="a" style="left:694px;top:49px;" width="16" height="16" viewBox="0 0 16 16"><use href="#al_r"/></svg><svg class="a" style="left:717px;top:49px;" width="16" height="16" viewBox="0 0 16 16"><use href="#al_j"/></svg><svg class="a" style="left:741px;top:49px;" width="16" height="16" viewBox="0 0 16 16"><use href="#al_d"/></svg><svg class="a" style="left:764px;top:49px;" width="16" height="16" viewBox="0 0 16 16"><use href="#lnsp"/></svg><svg class="a" style="left:786px;top:56px" width="5" height="3"><path d="M0 0H5L2.5 3z" fill="#000"/></svg><div class="a sep" style="left:797px;top:47px;width:1px;height:19px;"></div><svg class="a" style="left:803px;top:49px;" width="16" height="16" viewBox="0 0 16 16"><use href="#numlist"/></svg><svg class="a" style="left:826px;top:49px;" width="16" height="16" viewBox="0 0 16 16"><use href="#bullist"/></svg><svg class="a" style="left:850px;top:49px;" width="16" height="16" viewBox="0 0 16 16"><use href="#outdent"/></svg><svg class="a" style="left:873px;top:49px;" width="16" height="16" viewBox="0 0 16 16"><use href="#indent"/></svg><div class="a sep" style="left:895px;top:47px;width:1px;height:19px;"></div><svg class="a" style="left:903px;top:49px;" width="16" height="16" viewBox="0 0 16 16"><use href="#borders"/></svg><svg class="a" style="left:924px;top:56px" width="5" height="3"><path d="M0 0H5L2.5 3z" fill="#000"/></svg><svg class="a" style="left:936px;top:49px;" width="16" height="16" viewBox="0 0 16 16"><use href="#hilite"/></svg><svg class="a" style="left:958px;top:56px" width="5" height="3"><path d="M0 0H5L2.5 3z" fill="#000"/></svg><svg class="a" style="left:970px;top:49px;" width="16" height="16" viewBox="0 0 16 16"><use href="#fcolor"/></svg><svg class="a" style="left:992px;top:56px" width="5" height="3"><path d="M0 0H5L2.5 3z" fill="#000"/></svg><svg class="a" style="left:1004px;top:60px" width="5" height="3"><path d="M0 0H5L2.5 3z" fill="#000"/></svg><div class="a tb" style="left:2px;top:70px;width:64px;height:24px;"></div><div class="a grip" style="left:4px;top:74px;width:3px;height:15px;"></div><svg class="a" style="left:10px;top:74px;" width="16" height="16" viewBox="0 0 16 16"><use href="#pdf1"/></svg><svg class="a" style="left:34px;top:74px;" width="16" height="16" viewBox="0 0 16 16"><use href="#pdf2"/></svg><svg class="a" style="left:57px;top:86px" width="5" height="3"><path d="M0 0H5L2.5 3z" fill="#000"/></svg><div class="a tb" style="left:68px;top:70px;width:383px;height:24px;"></div><div class="a grip" style="left:70px;top:74px;width:3px;height:15px;"></div><svg class="a" style="left:78px;top:74px;" width="16" height="16" viewBox="0 0 16 16"><use href="#quote"/></svg><span class="t" style="left:96.5px;top:75.00px;font-size:11px;line-height:14px;letter-spacing:0.042px;">Insert Citation</span><svg class="a" style="left:173px;top:74px;" width="16" height="16" viewBox="0 0 16 16"><use href="#book"/></svg><span class="t" style="left:192px;top:75.00px;font-size:11px;line-height:14px;letter-spacing:-0.111px;">Insert Bibliography</span><svg class="a" style="left:290px;top:74px;" width="16" height="16" viewBox="0 0 16 16"><use href="#refresh"/></svg><span class="t" style="left:307.5px;top:75.00px;font-size:11px;line-height:14px;letter-spacing:-0.145px;">Refresh</span><div class="a" style="left:351px;top:73px;width:88px;height:18px;background:#fff"></div><div class="a" style="left:427px;top:74px;width:11px;height:16px;background:#d4d0c8"></div><svg class="a" style="left:430px;top:81px" width="5" height="3"><path d="M0 0H5L2.5 3z" fill="#000"/></svg><svg class="a" style="left:443px;top:86px" width="5" height="3"><path d="M0 0H5L2.5 3z" fill="#000"/></svg><div class="a tb" style="left:454px;top:70px;width:42px;height:24px;"></div><div class="a grip" style="left:456px;top:74px;width:3px;height:15px;"></div><svg class="a" style="left:464px;top:74px;" width="16" height="16" viewBox="0 0 16 16"><use href="#emailrev"/></svg><svg class="a" style="left:487px;top:86px" width="5" height="3"><path d="M0 0H5L2.5 3z" fill="#000"/></svg><div class="a tb" style="left:498px;top:70px;width:417px;height:24px;"></div><div class="a grip" style="left:500px;top:74px;width:3px;height:15px;"></div><div class="a" style="left:505px;top:73px;width:137px;height:18px;background:#fff"></div><div class="a" style="left:630px;top:74px;width:11px;height:16px;background:#d4d0c8"></div><svg class="a" style="left:633px;top:81px" width="5" height="3"><path d="M0 0H5L2.5 3z" fill="#000"/></svg><span class="t" style="left:508px;top:75.00px;font-size:11px;line-height:14px;letter-spacing:-0.341px;">Final Showing Markup</span><span class="t" style="left:646px;top:75.00px;font-size:11px;line-height:14px;letter-spacing:-0.379px;"><u>S</u>how</span><svg class="a" style="left:675px;top:81px" width="5" height="3"><path d="M0 0H5L2.5 3z" fill="#000"/></svg><div class="a sep" style="left:687px;top:73px;width:1px;height:19px;"></div><svg class="a" style="left:694px;top:74px;" width="16" height="16" viewBox="0 0 16 16"><use href="#revprev"/></svg><svg class="a" style="left:717px;top:74px;" width="16" height="16" viewBox="0 0 16 16"><use href="#revnext"/></svg><svg class="a" style="left:740px;top:74px;" width="16" height="16" viewBox="0 0 16 16"><use href="#revacc"/></svg><svg class="a" style="left:762px;top:81px" width="5" height="3"><path d="M0 0H5L2.5 3z" fill="#000"/></svg><svg class="a" style="left:773px;top:74px;" width="16" height="16" viewBox="0 0 16 16"><use href="#revrej"/></svg><svg class="a" style="left:796px;top:81px" width="5" height="3"><path d="M0 0H5L2.5 3z" fill="#000"/></svg><div class="a sep" style="left:807px;top:73px;width:1px;height:19px;"></div><svg class="a" style="left:814px;top:74px;" width="16" height="16" viewBox="0 0 16 16"><use href="#newcomm"/></svg><svg class="a" style="left:836px;top:81px" width="5" height="3"><path d="M0 0H5L2.5 3z" fill="#000"/></svg><div class="a sep" style="left:847px;top:73px;width:1px;height:19px;"></div><svg class="a" style="left:854px;top:74px;" width="16" height="16" viewBox="0 0 16 16"><use href="#track"/></svg><div class="a sep" style="left:876px;top:73px;width:1px;height:19px;"></div><svg class="a" style="left:883px;top:74px;" width="16" height="16" viewBox="0 0 16 16"><use href="#revpane"/></svg><svg class="a" style="left:906px;top:86px" width="5" height="3"><path d="M0 0H5L2.5 3z" fill="#000"/></svg><div class="a tb" style="left:7px;top:96px;width:641px;height:24px;"></div><div class="a grip" style="left:10px;top:100px;width:3px;height:15px;"></div><svg class="a" style="left:18px;top:100px;" width="16" height="16" viewBox="0 0 16 16"><use href="#new"/></svg><svg class="a" style="left:40px;top:100px;" width="16" height="16" viewBox="0 0 16 16"><use href="#open"/></svg><svg class="a" style="left:63px;top:100px;" width="16" height="16" viewBox="0 0 16 16"><use href="#save"/></svg><svg class="a" style="left:86px;top:100px;" width="16" height="16" viewBox="0 0 16 16"><use href="#perm"/></svg><svg class="a" style="left:115px;top:100px;" width="16" height="16" viewBox="0 0 16 16"><use href="#print"/></svg><svg class="a" style="left:137px;top:100px;" width="16" height="16" viewBox="0 0 16 16"><use href="#preview"/></svg><svg class="a" style="left:161px;top:100px;" width="16" height="16" viewBox="0 0 16 16"><use href="#spell"/></svg><svg class="a" style="left:190px;top:100px;" width="16" height="16" viewBox="0 0 16 16"><use href="#cut"/></svg><svg class="a" style="left:212px;top:100px;" width="16" height="16" viewBox="0 0 16 16"><use href="#copy"/></svg><svg class="a" style="left:235px;top:100px;" width="16" height="16" viewBox="0 0 16 16"><use href="#paste"/></svg><svg class="a" style="left:258px;top:100px;" width="16" height="16" viewBox="0 0 16 16"><use href="#painter"/></svg><svg class="a" style="left:288px;top:100px;" width="16" height="16" viewBox="0 0 16 16"><use href="#undo"/></svg><svg class="a" style="left:322px;top:100px;" width="16" height="16" viewBox="0 0 16 16"><use href="#redo"/></svg><svg class="a" style="left:362px;top:100px;" width="16" height="16" viewBox="0 0 16 16"><use href="#hlink"/></svg><svg class="a" style="left:386px;top:100px;" width="16" height="16" viewBox="0 0 16 16"><use href="#tblbord"/></svg><svg class="a" style="left:408px;top:100px;" width="16" height="16" viewBox="0 0 16 16"><use href="#instbl"/></svg><svg class="a" style="left:431px;top:100px;" width="16" height="16" viewBox="0 0 16 16"><use href="#excel"/></svg><svg class="a" style="left:454px;top:100px;" width="16" height="16" viewBox="0 0 16 16"><use href="#columns"/></svg><div class="a sep" style="left:108px;top:99px;width:1px;height:19px;"></div><div class="a sep" style="left:183px;top:99px;width:1px;height:19px;"></div><div class="a sep" style="left:281px;top:99px;width:1px;height:19px;"></div><div class="a sep" style="left:355px;top:99px;width:1px;height:19px;"></div><div class="a sep" style="left:499.5px;top:99px;width:1px;height:19px;"></div><svg class="a" style="left:310px;top:107px" width="5" height="3"><path d="M0 0H5L2.5 3z" fill="#000"/></svg><svg class="a" style="left:344px;top:107px" width="5" height="3"><path d="M0 0H5L2.5 3z" fill="#a0a0a0"/></svg><div class="a" style="left:474px;top:97px;width:23px;height:22px;border:1px solid #0a246a;background:#d4d5d8"></div><svg class="a" style="left:478px;top:100px;" width="16" height="16" viewBox="0 0 16 16"><use href="#drawing"/></svg><svg class="a" style="left:506px;top:100px;" width="16" height="16" viewBox="0 0 16 16"><use href="#docmap"/></svg><svg class="a" style="left:527px;top:100px;" width="16" height="16" viewBox="0 0 16 16"><use href="#para"/></svg><div class="a" style="left:549.5px;top:99px;width:62px;height:18px;background:#fff"></div><div class="a" style="left:599.5px;top:100px;width:11px;height:16px;background:#d4d0c8"></div><svg class="a" style="left:602.5px;top:107px" width="5" height="3"><path d="M0 0H5L2.5 3z" fill="#000"/></svg><span class="t" style="left:553px;top:100.00px;font-size:11px;line-height:14px;color:#000;">100%</span><svg class="a" style="left:618px;top:100px;" width="16" height="16" viewBox="0 0 16 16"><use href="#help"/></svg><svg class="a" style="left:640px;top:112px" width="5" height="3"><path d="M0 0H5L2.5 3z" fill="#000"/></svg><div class="a" style="left:0px;top:121px;width:1024px;height:1px;background:#808080"></div><div class="a" style="left:1px;top:122px;width:1023px;height:1px;background:#404040"></div><div class="a" style="left:0px;top:121px;width:1px;height:552px;background:#808080"></div><div class="a" style="left:1px;top:122px;width:1px;height:551px;background:#404040"></div><div class="a" style="left:6px;top:127px;width:9px;height:546px;background:#808080"></div><div class="a" style="left:15px;top:127px;width:1px;height:546px;background:#000"></div><div class="a" style="left:16px;top:127px;width:979px;height:546px;background:#fff;overflow:hidden"><div class="a" style="left:53px;top:4px;width:24px;height:1px;background:#808080"></div><div class="a" style="left:76px;top:0px;width:1px;height:5px;background:#808080"></div><div class="a" style="left:739px;top:4px;width:24px;height:1px;background:#808080"></div><div class="a" style="left:739px;top:0px;width:1px;height:5px;background:#808080"></div><div class="a" style="left:77px;top:5px;width:2048px;height:768px;transform:scale(0.3232);transform-origin:0 0;overflow:hidden;background:#d4d0c8"><div class="win" style="left:0;top:0;width:1024px;height:768px"><div class="a" style="left:0px;top:0px;width:1024px;height:18px;background:linear-gradient(90deg,#808080,#a8a8a8 60%,#c0c0c0)"></div><svg class="a" style="left:2px;top:1px;" width="16" height="16" viewBox="0 0 16 16"><use href="#tk_notes"/></svg><span class="t" style="left:19px;top:2.00px;font-size:11px;line-height:14px;font-weight:bold;color:#d4d0c8;">NSCG draft web instrument - Lotus Notes</span><div class="a cap" style="left:972px;top:2px;width:16px;height:14px;"></div><div class="a cap" style="left:988px;top:2px;width:16px;height:14px;"></div><div class="a cap" style="left:1006px;top:2px;width:16px;height:14px;"></div><div class="a" style="left:976px;top:11px;width:6px;height:2px;background:#000"></div><svg class="a" style="left:991px;top:4px;" width="10" height="10" viewBox="0 0 10 10"><path d="M2.5 1h6v5h-2M2.5 2h6" stroke="#000" fill="none"/><rect x=".5" y="4" width="6" height="5" fill="none" stroke="#000"/><path d="M.5 4.5h6" stroke="#000"/></svg><svg class="a" style="left:1010px;top:5px;" width="8" height="8" viewBox="0 0 8 8"><path d="M0 0l8 7M1 0l7 7M8 0l-8 7M7 0l-7 7" stroke="#000" stroke-width="1"/></svg><span class="t" style="left:8px;top:23.00px;font-size:12px;line-height:15px;color:#8a8880;">File</span><span class="t" style="left:38px;top:23.00px;font-size:12px;line-height:15px;color:#8a8880;">Edit</span><span class="t" style="left:68px;top:23.00px;font-size:12px;line-height:15px;color:#8a8880;">View</span><span class="t" style="left:104px;top:23.00px;font-size:12px;line-height:15px;color:#8a8880;">Create</span><span class="t" style="left:150px;top:23.00px;font-size:12px;line-height:15px;color:#8a8880;">Actions</span><span class="t" style="left:200px;top:23.00px;font-size:12px;line-height:15px;color:#8a8880;">Help</span><div class="a" style="left:0px;top:41px;width:1024px;height:22px;background:linear-gradient(#f4f3f0,#c8c6c0)"></div><div class="a" style="left:232px;top:45px;width:13px;height:13px;background:#556;border-radius:3px;opacity:.75"></div><div class="a" style="left:253px;top:45px;width:13px;height:13px;background:#668;border-radius:3px;opacity:.75"></div><div class="a" style="left:274px;top:45px;width:13px;height:13px;background:#222;border-radius:3px;opacity:.75"></div><div class="a" style="left:295px;top:45px;width:13px;height:13px;background:#445;border-radius:3px;opacity:.75"></div><div class="a" style="left:337px;top:45px;width:13px;height:13px;background:#444;border-radius:3px;opacity:.75"></div><div class="a" style="left:358px;top:45px;width:13px;height:13px;background:#555;border-radius:3px;opacity:.75"></div><div class="a" style="left:379px;top:45px;width:13px;height:13px;background:#a33;border-radius:3px;opacity:.75"></div><div class="a" style="left:400px;top:45px;width:13px;height:13px;background:#b44;border-radius:3px;opacity:.75"></div><div class="a" style="left:421px;top:45px;width:13px;height:13px;background:#884;border-radius:3px;opacity:.75"></div><div class="a" style="left:442px;top:45px;width:13px;height:13px;background:#36a;border-radius:3px;opacity:.75"></div><div class="a" style="left:463px;top:45px;width:13px;height:13px;background:#999;border-radius:3px;opacity:.75"></div><div class="a" style="left:505px;top:45px;width:13px;height:13px;background:#bbb;border-radius:3px;opacity:.75"></div><div class="a" style="left:526px;top:45px;width:13px;height:13px;background:#ccc;border-radius:3px;opacity:.75"></div><div class="a" style="left:547px;top:45px;width:13px;height:13px;background:#222;border-radius:3px;opacity:.75"></div><div class="a" style="left:568px;top:45px;width:13px;height:13px;background:#ddd;border-radius:3px;opacity:.75"></div><div class="a" style="left:589px;top:45px;width:13px;height:13px;background:#555;border-radius:3px;opacity:.75"></div><div class="a" style="left:610px;top:45px;width:13px;height:13px;background:#777;border-radius:3px;opacity:.75"></div><div class="a" style="left:631px;top:45px;width:13px;height:13px;background:#888;border-radius:3px;opacity:.75"></div><div class="a" style="left:652px;top:45px;width:13px;height:13px;background:#999;border-radius:3px;opacity:.75"></div><div class="a" style="left:0px;top:63px;width:1024px;height:22px;background:linear-gradient(#f0efec,#d0cec8)"></div><span class="t" style="left:8px;top:67.00px;font-size:11px;line-height:14px;color:#555;">Address</span><div class="a" style="left:50px;top:65px;width:738px;height:18px;background:#fff;border:1px solid #999"></div><span class="t" style="left:54px;top:67.00px;font-size:11px;line-height:14px;color:#333;">http://www.dc-aapor.org/coppes.php</span><svg class="a" style="left:774px;top:72px" width="5" height="3"><path d="M0 0H5L2.5 3z" fill="#000"/></svg><div class="a" style="left:800px;top:66px;width:15px;height:15px;background:#888;border-radius:8px"></div><div class="a" style="left:822px;top:66px;width:15px;height:15px;background:#aaa;border-radius:8px"></div><div class="a" style="left:862px;top:66px;width:15px;height:15px;background:#e02020;border-radius:8px"></div><div class="a" style="left:884px;top:66px;width:15px;height:15px;background:#4a8ac0;border-radius:8px"></div><div class="a" style="left:906px;top:66px;width:15px;height:15px;background:#4a6ac0;border-radius:8px"></div><div class="a" style="left:0px;top:85px;width:1024px;height:24px;background:linear-gradient(#f0efec,#d4d2cc)"></div><div class="a" style="left:24px;top:90px;width:18px;height:12px;border:1px solid #555;border-radius:6px;background:#fff"></div><div class="a" style="left:46px;top:90px;width:16px;height:12px;border:1px solid #555;background:#fff"></div><div class="a" style="left:84px;top:89px;width:9px;height:15px;background:#e8c820;border-radius:4px"></div><div class="a" style="left:104px;top:89px;width:11px;height:15px;background:#8ac860;border:1px solid #585"></div><div class="a" style="left:0px;top:109px;width:1024px;height:27px;background:#d4d0c8"></div><div class="a" style="left:36px;top:113px;width:84px;height:23px;border:1px solid #888;border-bottom:none;background:#dcd9d2"></div><div class="a" style="left:40px;top:118px;width:12px;height:12px;background:#c8a040;border-radius:2px"></div><span class="t" style="left:56px;top:118.00px;font-size:11px;line-height:14px;color:#222;">Workspace</span><div class="a" style="left:124px;top:113px;width:146px;height:23px;border:1px solid #888;border-bottom:none;background:#dcd9d2"></div><div class="a" style="left:128px;top:118px;width:12px;height:12px;background:#b0b8c8;border-radius:2px"></div><span class="t" style="left:144px;top:118.00px;font-size:11px;line-height:14px;color:#222;">Jennifer Romano - Inbox</span><span class="t" style="left:259px;top:120.00px;font-size:10px;line-height:12px;color:#444;">x</span><div class="a" style="left:278px;top:113px;width:164px;height:23px;border:1px solid #888;border-bottom:none;background:#dcd9d2"></div><div class="a" style="left:282px;top:118px;width:12px;height:12px;background:#c04040;border-radius:2px"></div><span class="t" style="left:298px;top:118.00px;font-size:11px;line-height:14px;color:#222;">Jennifer Romano - Calendar</span><span class="t" style="left:431px;top:120.00px;font-size:10px;line-height:12px;color:#444;">x</span><div class="a" style="left:450px;top:113px;width:164px;height:23px;border:1px solid #888;border-bottom:none;background:#dcd9d2"></div><div class="a" style="left:454px;top:118px;width:12px;height:12px;background:#c04040;border-radius:2px"></div><span class="t" style="left:470px;top:118.00px;font-size:11px;line-height:14px;color:#222;">SFB Usability Mail-in DB -...</span><span class="t" style="left:603px;top:120.00px;font-size:10px;line-height:12px;color:#444;">x</span><div class="a" style="left:622px;top:111px;width:168px;height:25px;border:1px solid #888;border-bottom:none;background:#f4f3ee"></div><div class="a" style="left:626px;top:118px;width:12px;height:12px;background:#c8c8a0;border-radius:2px"></div><span class="t" style="left:642px;top:118.00px;font-size:11px;line-height:14px;color:#222;">NSCG draft web instrument</span><span class="t" style="left:779px;top:120.00px;font-size:10px;line-height:12px;color:#444;">x</span><div class="a" style="left:0px;top:136px;width:38px;height:582px;background:#d4d0c8"></div><div class="a" style="left:7px;top:137px;width:24px;height:22px;background:#b09070;border-radius:9px;border:1px solid rgba(0,0,0,.35);opacity:.9"></div><div class="a" style="left:7px;top:168px;width:24px;height:22px;background:#9080c0;border-radius:9px;border:1px solid rgba(0,0,0,.35);opacity:.9"></div><div class="a" style="left:7px;top:199px;width:24px;height:22px;background:#30a0a0;border-radius:9px;border:1px solid rgba(0,0,0,.35);opacity:.9"></div><div class="a" style="left:7px;top:230px;width:24px;height:22px;background:#c06070;border-radius:9px;border:1px solid rgba(0,0,0,.35);opacity:.9"></div><div class="a" style="left:7px;top:261px;width:24px;height:22px;background:#e8d870;border-radius:9px;border:1px solid rgba(0,0,0,.35);opacity:.9"></div><div class="a" style="left:7px;top:294px;width:24px;height:22px;background:#3050c0;border-radius:9px;border:1px solid rgba(0,0,0,.35);opacity:.9"></div><div class="a" style="left:7px;top:359px;width:24px;height:22px;background:#3050c0;border-radius:9px;border:1px solid rgba(0,0,0,.35);opacity:.9"></div><div class="a" style="left:7px;top:388px;width:24px;height:22px;background:#e08030;border-radius:9px;border:1px solid rgba(0,0,0,.35);opacity:.9"></div><div class="a" style="left:7px;top:417px;width:24px;height:22px;background:#8090a0;border-radius:9px;border:1px solid rgba(0,0,0,.35);opacity:.9"></div><div class="a" style="left:7px;top:447px;width:24px;height:22px;background:#e0c070;border-radius:9px;border:1px solid rgba(0,0,0,.35);opacity:.9"></div><div class="a" style="left:7px;top:479px;width:24px;height:22px;background:#4080c0;border-radius:9px;border:1px solid rgba(0,0,0,.35);opacity:.9"></div><div class="a" style="left:7px;top:512px;width:24px;height:22px;background:#6080b0;border-radius:9px;border:1px solid rgba(0,0,0,.35);opacity:.9"></div><div class="a" style="left:7px;top:541px;width:24px;height:22px;background:#405070;border-radius:9px;border:1px solid rgba(0,0,0,.35);opacity:.9"></div><div class="a" style="left:38px;top:136px;width:986px;height:32px;background:#6b9fd2;border-top:1px solid #4a7ab0"></div><div class="a" style="left:46px;top:144px;width:72px;height:17px;background:#9cc0e4;border:1px solid #4a78b0"></div><span class="t" style="left:50px;top:146.00px;font-size:11px;line-height:14px;color:#234;">New Memo</span><div class="a" style="left:126px;top:144px;width:50px;height:17px;background:#9cc0e4;border:1px solid #4a78b0"></div><span class="t" style="left:130px;top:146.00px;font-size:11px;line-height:14px;color:#234;">Reply ▾</span><div class="a" style="left:182px;top:144px;width:82px;height:17px;background:#9cc0e4;border:1px solid #4a78b0"></div><span class="t" style="left:186px;top:146.00px;font-size:11px;line-height:14px;color:#234;">Reply To All ▾</span><div class="a" style="left:270px;top:144px;width:64px;height:17px;background:#9cc0e4;border:1px solid #4a78b0"></div><span class="t" style="left:274px;top:146.00px;font-size:11px;line-height:14px;color:#234;">Forward ▾</span><div class="a" style="left:340px;top:144px;width:44px;height:17px;background:#9cc0e4;border:1px solid #4a78b0"></div><span class="t" style="left:344px;top:146.00px;font-size:11px;line-height:14px;color:#234;">Delete</span><div class="a" style="left:390px;top:144px;width:72px;height:17px;background:#9cc0e4;border:1px solid #4a78b0"></div><span class="t" style="left:394px;top:146.00px;font-size:11px;line-height:14px;color:#234;">Follow Up ▾</span><div class="a" style="left:468px;top:144px;width:52px;height:17px;background:#9cc0e4;border:1px solid #4a78b0"></div><span class="t" style="left:472px;top:146.00px;font-size:11px;line-height:14px;color:#234;">Folder ▾</span><div class="a" style="left:526px;top:144px;width:96px;height:17px;background:#9cc0e4;border:1px solid #4a78b0"></div><span class="t" style="left:530px;top:146.00px;font-size:11px;line-height:14px;color:#234;">Copy Into New ▾</span><div class="a" style="left:630px;top:144px;width:42px;height:17px;background:#9cc0e4;border:1px solid #4a78b0"></div><span class="t" style="left:634px;top:146.00px;font-size:11px;line-height:14px;color:#234;">Chat ▾</span><div class="a" style="left:678px;top:144px;width:48px;height:17px;background:#9cc0e4;border:1px solid #4a78b0"></div><span class="t" style="left:682px;top:146.00px;font-size:11px;line-height:14px;color:#234;">Tools ▾</span><div class="a" style="left:38px;top:168px;width:986px;height:94px;background:#e9e5cd"></div><div class="a" style="left:38px;top:168px;width:986px;height:94px;background:repeating-linear-gradient(115deg,rgba(255,255,255,.12) 0 9px,rgba(200,190,150,.08) 9px 23px)"></div><span class="t" style="left:139px;top:176.00px;font-size:11.5px;line-height:14px;font-weight:bold;color:#111;">Timothy R Gilbert/DSD/HQ/BOC</span><span class="t" style="left:126px;top:196.00px;font-size:11px;line-height:14px;color:#333;">08/13/2009 02:12 PM</span><span class="t" style="left:461.382px;top:176.00px;font-size:11px;line-height:14px;color:#444;">To</span><div class="a" style="left:487px;top:174px;width:508px;height:17px;background:#fff;border:1px solid #888"></div><span class="t" style="left:462px;top:196.00px;font-size:11px;line-height:14px;color:#444;">cc</span><div class="a" style="left:487px;top:194px;width:508px;height:17px;background:#fff;border:1px solid #888"></div><span class="t" style="left:455.882px;top:216.00px;font-size:11px;line-height:14px;color:#444;">bcc</span><div class="a" style="left:487px;top:214px;width:508px;height:17px;background:#fff;border:1px solid #888"></div><span class="t" style="left:436.31px;top:236.00px;font-size:11px;line-height:14px;color:#444;">Subject</span><div class="a" style="left:487px;top:234px;width:508px;height:17px;background:#fff;border:1px solid #888"></div><span class="t" style="left:502px;top:176.00px;font-size:11px;line-height:14px;color:#444;">Jennifer Chen/SRD/HQ/BOC@BOC,     Jennifer Romano/SRD/HQ/BOC@BOC</span><span class="t" style="left:502px;top:196.00px;font-size:11px;line-height:14px;color:#444;">Elizabeth D Murphy/SRD/HQ/BOC@BOC,     Judith A Pitkurton/DSD/HQ/BOC@BOC</span><span class="t" style="left:490px;top:236.00px;font-size:11px;line-height:14px;color:#222;">NSCG draft web instrument</span><div class="a" style="left:62px;top:262px;width:934px;height:27px;background:#d6d9e8"></div><span class="t" style="left:80px;top:269.00px;font-size:11px;line-height:14px;color:#333;">For Follow Up:</span><div class="a" style="left:176px;top:270px;width:8px;height:10px;background:#c03010"></div><span class="t" style="left:192px;top:269.00px;font-size:11px;line-height:14px;color:#333;">Urgent Priority</span><div class="a" style="left:38px;top:289px;width:986px;height:2px;background:#8aa"></div><div class="a" style="left:38px;top:291px;width:984px;height:422px;background:#fff"></div><div class="a" style="left:38px;top:291px;width:2px;height:422px;background:#888"></div><span class="t" style="left:54px;top:307.00px;font-size:12px;line-height:15px;color:#222;">Hi,</span><span class="t" style="left:54px;top:338.00px;font-size:12px;line-height:15px;color:#222;">Thanks for meeting with Jack and me yesterday, and here are the usernames and passwords along with the link to the web survey that I promised.  Keep in mind</span><span class="t" style="left:54px;top:353.00px;font-size:12px;line-height:15px;color:#222;">that we are still testing and programming certain sections, but at least you can get a feel for how things look.</span><span class="t" style="left:54px;top:388.00px;font-size:12px;line-height:15px;color:#222;">Usernames:       Passwords:</span><span class="t" style="left:54px;top:405.00px;font-size:12px;line-height:15px;color:#222;">NSCG3717      2xCyM$R7w8</span><span class="t" style="left:54px;top:421.00px;font-size:12px;line-height:15px;color:#222;">NSCG7186      7DPBbzjfxxW</span><span class="t" style="left:54px;top:437.00px;font-size:12px;line-height:15px;color:#222;">NSCG7383      dkq2X9h53De</span><span class="t" style="left:54px;top:453.00px;font-size:12px;line-height:15px;color:#222;">NSCG4323      x9gf37F8FwQ</span><span class="t" style="left:54px;top:469.00px;font-size:12px;line-height:15px;color:#222;">NSCG4681      t$7dzV6A0MEP</span><span class="t" style="left:54px;top:504.00px;font-size:12px;line-height:15px;color:#222;">Here is the link:</span><span class="t" style="left:54px;top:552.00px;font-size:12px;line-height:15px;color:#222;">Tim Gilbert</span><span class="t" style="left:54px;top:567.00px;font-size:12px;line-height:15px;color:#222;">Special Surveys Branch</span><span class="t" style="left:54px;top:583.00px;font-size:12px;line-height:15px;color:#222;">U.S. Census Bureau</span><span class="t" style="left:54px;top:599.00px;font-size:12px;line-height:15px;color:#222;">301-763-5436</span><span class="t" style="left:54px;top:520.00px;font-size:12px;line-height:15px;color:#185018;font-family:Liberation Mono,monospace;font-weight:bold;text-decoration:underline;">https://idc4.ssd.census.gov:4321/nscg</span><div class="a" style="left:0px;top:716px;width:1024px;height:24px;background:#d4d0c8"></div><div class="a sunk" style="left:4px;top:720px;width:30px;height:16px;"></div><div class="a sunk" style="left:42px;top:720px;width:620px;height:16px;"></div><svg class="a" style="left:650px;top:726px" width="5" height="3"><path d="M0 0H5L2.5 3z" fill="#000"/></svg><div class="a sunk" style="left:668px;top:720px;width:46px;height:16px;"></div><div class="a" style="left:676px;top:724px;width:14px;height:7px;background:#d8c030;border-radius:3px"></div><svg class="a" style="left:704px;top:726px" width="5" height="3"><path d="M0 0H5L2.5 3z" fill="#000"/></svg><div class="a sunk" style="left:718px;top:720px;width:116px;height:16px;"></div><div class="a" style="left:724px;top:724px;width:7px;height:7px;background:#20b020;border-radius:4px"></div><span class="t" style="left:736px;top:723.00px;font-size:10px;line-height:12px;color:#333;">I Am Active</span><svg class="a" style="left:822px;top:726px" width="5" height="3"><path d="M0 0H5L2.5 3z" fill="#000"/></svg><div class="a sunk" style="left:838px;top:720px;width:116px;height:16px;"></div><span class="t" style="left:844px;top:723.00px;font-size:10px;line-height:12px;color:#333;">Office</span><svg class="a" style="left:942px;top:726px" width="5" height="3"><path d="M0 0H5L2.5 3z" fill="#000"/></svg><div class="a sunk" style="left:958px;top:720px;width:60px;height:16px;"></div><div class="a" style="left:966px;top:723px;width:18px;height:10px;background:#60a0a0;border-radius:4px"></div><svg class="a" style="left:1004px;top:726px" width="5" height="3"><path d="M0 0H5L2.5 3z" fill="#000"/></svg><div class="a" style="left:0px;top:739px;width:1024px;height:29px;background:#d4d0c8;border-top:1px solid #fff"></div><div class="a raised" style="left:2px;top:742px;width:52px;height:22px;"></div><svg class="a" style="left:5px;top:746px;" width="16" height="16" viewBox="0 0 16 16"><use href="#tk_flag"/></svg><span class="t" style="left:21.5px;top:746.00px;font-size:11px;line-height:14px;font-weight:bold;letter-spacing:0.688px;">Start</span><div class="a raised" style="left:59px;top:742px;width:157px;height:22px;"></div><svg class="a" style="left:63px;top:746px;" width="18" height="16" viewBox="0 0 18 16"><use href="#tk_novell"/></svg><span class="t" style="left:82.5px;top:746.00px;font-size:11px;line-height:14px;letter-spacing:-0.039px;">Novell-delivered Applica...</span><div class="a raised" style="left:219px;top:742px;width:157px;height:22px;"></div><svg class="a" style="left:223px;top:746px;" width="16" height="16" viewBox="0 0 16 16"><use href="#tk_notes"/></svg><span class="t" style="left:242.5px;top:746.00px;font-size:11px;line-height:14px;letter-spacing:-0.115px;">NSCG draft web instrum...</span><div class="a dith" style="left:379px;top:742px;width:157px;height:22px;border:1px solid;border-color:#404040 #fff #fff #404040;box-shadow:inset 1px 1px 0 #808080"></div><svg class="a" style="left:384px;top:747px;" width="16" height="16" viewBox="0 0 16 16"><use href="#ff_fox"/></svg><span class="t" style="left:403.5px;top:747.00px;font-size:11px;line-height:14px;font-weight:bold;letter-spacing:0.085px;">NSCG: Introduction -...</span><div class="a raised" style="left:539px;top:742px;width:157px;height:22px;"></div><svg class="a" style="left:543px;top:746px;" width="16" height="16" viewBox="0 0 16 16"><use href="#tk_folder"/></svg><span class="t" style="left:562.5px;top:746.00px;font-size:11px;line-height:14px;letter-spacing:-1.195px;">NSCG</span><div class="a raised" style="left:699px;top:742px;width:157px;height:22px;"></div><svg class="a" style="left:704px;top:746px;" width="16" height="16" viewBox="0 0 16 16"><use href="#tk_word"/></svg><span class="t" style="left:721.5px;top:746.00px;font-size:11px;line-height:14px;font-weight:bold;">3</span><span class="t" style="left:732.5px;top:746.00px;font-size:11px;line-height:14px;letter-spacing:-0.054px;">Microsoft Word</span><svg class="a" style="left:847px;top:753px" width="5" height="3"><path d="M0 0H5L2.5 3z" fill="#000"/></svg><svg class="a" style="left:867px;top:745px;" width="16" height="18" viewBox="0 0 16 18"><use href="#tk_mic"/></svg><svg class="a" style="left:890px;top:745px;" width="17" height="18" viewBox="0 0 17 18"><use href="#tk_lang"/></svg><div class="a sunk" style="left:909px;top:742px;width:113px;height:24px;"></div><span class="t" style="left:914px;top:746.00px;font-size:12px;line-height:15px;font-weight:bold;">«</span><svg class="a" style="left:926px;top:746px;" width="17" height="17" viewBox="0 0 17 17"><use href="#tk_oct"/></svg><svg class="a" style="left:944px;top:745px;" width="16" height="18" viewBox="0 0 16 18"><use href="#tk_net"/></svg><span class="t" style="left:968px;top:747.00px;font-size:11px;line-height:14px;letter-spacing:-0.260px;">12:45 PM</span></div><div class="win" style="left:1024px;top:0;width:1024px;height:768px"><div class="a" style="left:0px;top:0px;width:1024px;height:18px;background:linear-gradient(90deg,#0a246a,#3a5aa0 40%,#a6caf0)"></div><svg class="a" style="left:2px;top:1px;" width="16" height="16" viewBox="0 0 16 16"><use href="#ff_fox"/></svg><span class="t" style="left:19.5px;top:2.00px;font-size:11px;line-height:14px;font-weight:bold;color:#fff;letter-spacing:0.199px;">NSCG: Introduction - Mozilla Firefox</span><div class="a cap" style="left:972px;top:2px;width:16px;height:14px;"></div><div class="a cap" style="left:988px;top:2px;width:16px;height:14px;"></div><div class="a cap" style="left:1006px;top:2px;width:16px;height:14px;"></div><div class="a" style="left:976px;top:11px;width:6px;height:2px;background:#000"></div><svg class="a" style="left:991px;top:4px;" width="10" height="10" viewBox="0 0 10 10"><path d="M2.5 1h6v5h-2M2.5 2h6" stroke="#000" fill="none"/><rect x=".5" y="4" width="6" height="5" fill="none" stroke="#000"/><path d="M.5 4.5h6" stroke="#000"/></svg><svg class="a" style="left:1010px;top:5px;" width="8" height="8" viewBox="0 0 8 8"><path d="M0 0l8 7M1 0l7 7M8 0l-8 7M7 0l-7 7" stroke="#000" stroke-width="1"/></svg><div class="a" style="left:0px;top:18px;width:1024px;height:1px;background:#808080"></div><div class="a" style="left:0px;top:19px;width:1024px;height:1px;background:#fff"></div><span class="t" style="left:7.5px;top:25.00px;font-size:11px;line-height:14px;letter-spacing:-0.556px;"><u>F</u>ile</span><span class="t" style="left:39.5px;top:25.00px;font-size:11px;line-height:14px;letter-spacing:-0.364px;"><u>E</u>dit</span><span class="t" style="left:73px;top:25.00px;font-size:11px;line-height:14px;letter-spacing:-0.411px;"><u>V</u>iew</span><span class="t" style="left:111px;top:25.00px;font-size:11px;line-height:14px;letter-spacing:-0.032px;">Hi<u>s</u>tory</span><span class="t" style="left:161px;top:25.00px;font-size:11px;line-height:14px;letter-spacing:-0.446px;"><u>B</u>ookmarks</span><span class="t" style="left:229px;top:25.00px;font-size:11px;line-height:14px;letter-spacing:-0.336px;"><u>T</u>ools</span><span class="t" style="left:269.5px;top:25.00px;font-size:11px;line-height:14px;letter-spacing:-0.531px;"><u>H</u>elp</span><svg class="a" style="left:1003px;top:24px;" width="16" height="16" viewBox="0 0 16 16"><use href="#ff_throb"/></svg><div class="a" style="left:0px;top:43px;width:1024px;height:1px;background:#808080"></div><div class="a" style="left:0px;top:44px;width:1024px;height:1px;background:#fff"></div><svg class="a" style="left:7px;top:51px;" width="24" height="24" viewBox="0 0 24 24"><use href="#ff_back"/></svg><svg class="a" style="left:39px;top:61px" width="5" height="3"><path d="M0 0H5L2.5 3z" fill="#000"/></svg><svg class="a" style="left:54px;top:51px;" width="24" height="24" viewBox="0 0 24 24"><use href="#ff_fwd"/></svg><svg class="a" style="left:86px;top:61px" width="5" height="3"><path d="M0 0H5L2.5 3z" fill="#a0a0a0"/></svg><svg class="a" style="left:100px;top:51px;" width="24" height="24" viewBox="0 0 24 24"><use href="#ff_reload"/></svg><svg class="a" style="left:137px;top:51px;" width="24" height="24" viewBox="0 0 24 24"><use href="#ff_stop"/></svg><svg class="a" style="left:173px;top:51px;" width="24" height="24" viewBox="0 0 24 24"><use href="#ff_home"/></svg><div class="a" style="left:205px;top:52px;width:585px;height:22px;border:1px solid #8e8f8f;border-radius:0 4px 4px 0;background:#d4d0c8"></div><div class="a" style="left:206px;top:53px;width:541px;height:20px;background:#fff"></div><div class="a" style="left:747px;top:53px;width:1px;height:20px;background:#a8a6a0"></div><div class="a" style="left:764px;top:53px;width:1px;height:20px;background:#a8a6a0"></div><svg class="a" style="left:752px;top:61px;" width="8" height="5" viewBox="0 0 8 5"><path d="M0 0h7l-3.5 4.5z" fill="#555"/></svg><svg class="a" style="left:769px;top:55px;" width="16" height="16" viewBox="0 0 16 16"><use href="#ff_go"/></svg><svg class="a" style="left:209px;top:55px;" width="16" height="16" viewBox="0 0 16 16"><use href="#ff_spartan"/></svg><span class="t" style="left:230.5px;top:57.00px;font-size:11px;line-height:14px;letter-spacing:0.242px;">http://idc4.ssd.census.gov:4321/nscg/intro</span><div class="a" style="left:798px;top:52px;width:222px;height:22px;border:1px solid #8e8f8f;border-radius:4px;background:#d4d0c8"></div><svg class="a" style="left:802px;top:55px;" width="16" height="16" viewBox="0 0 16 16"><use href="#ff_g"/></svg><svg class="a" style="left:820px;top:61px" width="5" height="3"><path d="M0 0H5L2.5 3z" fill="#000"/></svg><div class="a" style="left:829px;top:53px;width:164px;height:20px;background:#fff;border-left:1px solid #a8a6a0;border-right:1px solid #a8a6a0"></div><span class="t" style="left:833px;top:57.00px;font-size:11px;line-height:14px;color:#808080;letter-spacing:-0.495px;">Google</span><svg class="a" style="left:997px;top:54px;" width="18" height="18" viewBox="0 0 18 18"><use href="#ff_mag"/></svg><div class="a" style="left:0px;top:82px;width:1024px;height:1px;background:#808080"></div><div class="a" style="left:0px;top:83px;width:1024px;height:1px;background:#fff"></div><svg class="a" style="left:7px;top:88px;" width="16" height="16" viewBox="0 0 16 16"><use href="#ff_dino"/></svg><span class="t" style="left:27.5px;top:90.00px;font-size:11px;line-height:14px;letter-spacing:-0.032px;">Getting Started</span><svg class="a" style="left:110px;top:88px;" width="16" height="16" viewBox="0 0 16 16"><use href="#ff_rss"/></svg><span class="t" style="left:130px;top:90.00px;font-size:11px;line-height:14px;letter-spacing:-0.153px;">Latest Headlines</span><svg class="a" style="left:218px;top:88px;" width="16" height="16" viewBox="0 0 16 16"><use href="#ff_page"/></svg><span class="t" style="left:238px;top:90.00px;font-size:11px;line-height:14px;letter-spacing:0.019px;">Import to Mendeley</span><div class="a" style="left:0px;top:108px;width:1024px;height:1px;background:#8e8c86"></div><div class="a" style="left:0px;top:109px;width:1024px;height:26px;background:linear-gradient(#cfccc5,#c6c3bb)"></div><div class="a" style="left:4px;top:112px;width:199px;height:22px;background:linear-gradient(#e6e4de,#cdcac2);border:1px solid #9a9892;border-bottom:none;border-radius:4px 4px 0 0;box-shadow:inset 0 1px 0 #f4f3ef"></div><svg class="a" style="left:12px;top:116px;" width="16" height="16" viewBox="0 0 16 16"><use href="#ff_gmail"/></svg><span class="t" style="left:31px;top:117.00px;font-size:11px;line-height:14px;letter-spacing:0.059px;">Inbox (180) - 20romano@g...</span><svg class="a" style="left:181px;top:116px;" width="15" height="15" viewBox="0 0 15 15"><use href="#ff_tabx"/></svg><div class="a" style="left:205px;top:112px;width:198px;height:22px;background:linear-gradient(#e6e4de,#cdcac2);border:1px solid #9a9892;border-bottom:none;border-radius:4px 4px 0 0;box-shadow:inset 0 1px 0 #f4f3ef"></div><svg class="a" style="left:213px;top:116px;" width="16" height="16" viewBox="0 0 16 16"><use href="#ff_gcal"/></svg><span class="t" style="left:232px;top:117.00px;font-size:11px;line-height:14px;letter-spacing:-0.311px;">Google Calendar</span><svg class="a" style="left:381px;top:116px;" width="15" height="15" viewBox="0 0 15 15"><use href="#ff_tabx"/></svg><div class="a" style="left:405px;top:112px;width:199px;height:22px;background:linear-gradient(#e6e4de,#cdcac2);border:1px solid #9a9892;border-bottom:none;border-radius:4px 4px 0 0;box-shadow:inset 0 1px 0 #f4f3ef"></div><svg class="a" style="left:413px;top:116px;" width="16" height="16" viewBox="0 0 16 16"><use href="#ff_gmail"/></svg><span class="t" style="left:432px;top:117.00px;font-size:11px;line-height:14px;letter-spacing:0.042px;">Eye Street Mail - Inbox (2) -...</span><svg class="a" style="left:582px;top:116px;" width="15" height="15" viewBox="0 0 15 15"><use href="#ff_tabx"/></svg><div class="a" style="left:606px;top:112px;width:198px;height:22px;background:linear-gradient(#e6e4de,#cdcac2);border:1px solid #9a9892;border-bottom:none;border-radius:4px 4px 0 0;box-shadow:inset 0 1px 0 #f4f3ef"></div><svg class="a" style="left:614px;top:116px;" width="16" height="16" viewBox="0 0 16 16"><use href="#ff_page"/></svg><span class="t" style="left:633px;top:117.00px;font-size:11px;line-height:14px;letter-spacing:-0.210px;">Enrollment: Add Classes</span><svg class="a" style="left:782px;top:116px;" width="15" height="15" viewBox="0 0 15 15"><use href="#ff_tabx"/></svg><div class="a" style="left:806px;top:111px;width:199px;height:25px;background:linear-gradient(#f6f5f1,#e8e6e0);border:1px solid #8c8a84;border-bottom:none;border-radius:4px 4px 0 0"></div><svg class="a" style="left:813px;top:116px;" width="16" height="16" viewBox="0 0 16 16"><use href="#ff_spartan"/></svg><span class="t" style="left:833px;top:117.00px;font-size:11px;line-height:14px;font-weight:bold;letter-spacing:0.075px;">NSCG: Introduction</span><svg class="a" style="left:982px;top:116px;" width="15" height="15" viewBox="0 0 15 15"><use href="#ff_tabxr"/></svg><div class="a" style="left:1007px;top:112px;width:17px;height:22px;background:linear-gradient(#e4e2dc,#cdcac2);border:1px solid #a09e98;border-bottom:none;border-radius:4px 0 0 0"></div><svg class="a" style="left:1013px;top:122px" width="5" height="3"><path d="M0 0H5L2.5 3z" fill="#000"/></svg><div class="a" style="left:0px;top:134px;width:1024px;height:1px;background:#8c8a84"></div><div class="a" style="left:0px;top:135px;width:1024px;height:2px;background:#f0eee8"></div><div class="a" style="left:806px;top:134px;width:199px;height:2px;background:#e8e6e0"></div><div class="a" style="left:0px;top:746px;width:1024px;height:22px;background:#d4d0c8"></div><div class="a" style="left:0px;top:748px;width:967px;height:20px;border:1px solid;border-color:#808080 #fff #fff #808080"></div><div class="a" style="left:969px;top:748px;width:53px;height:20px;border:1px solid;border-color:#808080 #fff #fff #808080"></div><span class="t" style="left:7px;top:751.00px;font-size:11px;line-height:14px;letter-spacing:-0.199px;">Done</span><span class="t" style="left:972px;top:749.00px;font-size:14px;line-height:18px;letter-spacing:1.100px;"><span style="color:#b00000">z</span>otero</span><div class="a pagebg" style="left:0px;top:137px;width:1008px;height:609px;"></div><span class="t" style="left:4px;top:146.00px;font-size:14px;line-height:18px;color:#333;">15</span><div class="a" style="left:0px;top:35px;width:1007px;height:720px;"><div class="a" style="left:26px;top:141px;width:956px;height:563px;background:#7a9496;border:1px solid #302e2c;box-shadow:0 0 1.5px .5px rgba(50,44,34,.75),1px 1px 1.5px rgba(40,36,28,.5),inset 0 0 0 1px rgba(255,255,255,.07)"></div><div class="a" style="left:27px;top:142px;width:954px;height:5px;background:linear-gradient(#6f898b,#7a9496)"></div><svg class="a" style="left:32px;top:147px;" width="944" height="159" viewBox="0 0 944 159"><use href="#art_banner"/><text x="35.9" y="59.8" font-size="17" font-weight="bold" font-family="Liberation Serif,serif" fill="#fff" textLength="38.7" lengthAdjust="spacingAndGlyphs">NSF</text></svg><span class="t" style="left:137.5px;top:175.00px;font-size:24px;line-height:30px;font-family:Liberation Serif,serif;color:#fff;letter-spacing:0.867px;text-shadow:1px 1px 1px rgba(60,40,20,.6);">National Science Foundation</span><span class="t" style="left:138px;top:205.50px;font-size:10.5px;line-height:13px;color:#e4dccb;letter-spacing:6.724px;">WHERE DISCOVERIES BEGIN</span><span class="t" style="left:280px;top:240.50px;font-size:18px;line-height:22px;font-weight:bold;font-family:Liberation Serif,serif;color:#fff;letter-spacing:1.182px;text-shadow:1px 1px 1px #000;">NATIONAL SURVEY OF COLLEGE GRADUATES</span><span class="t" style="left:82px;top:276.00px;font-size:22px;line-height:28px;font-weight:bold;color:#f2eec4;letter-spacing:-0.313px;">Save and Exit</span><span class="t" style="left:334.5px;top:276.00px;font-size:22px;line-height:28px;font-weight:bold;color:#f2eec4;letter-spacing:-0.635px;">Information</span></div><div class="a" style="left:38px;top:371px;width:934px;height:248px;background:#ece8c4;border:1px solid #f8f6e0;border-right:2px solid #5a5a4a;border-bottom:2px solid #5a5a4a"></div><span class="t" style="left:406px;top:411.00px;font-size:20px;line-height:25px;font-weight:bold;color:#2a2a2a;letter-spacing:3.640px;">INTRODUCTION</span><span class="t" style="left:103.5px;top:447.00px;font-size:14px;line-height:18px;color:#222;letter-spacing:0.542px;">The Census Bureau is conducting this survey to help the National Science Foundation collect information relating to the</span><span class="t" style="left:92px;top:469.50px;font-size:14px;line-height:18px;color:#222;letter-spacing:0.591px;">Nation's highly educated persons. On the average, it will take about 25 minutes to complete and is voluntary. The National</span><span class="t" style="left:111px;top:492.00px;font-size:14px;line-height:18px;color:#222;letter-spacing:0.752px;">Science Foundation and the Census Bureau will use the information you provide for statistical purposes only. This</span><span class="t" style="left:99px;top:514.50px;font-size:14px;line-height:18px;color:#222;letter-spacing:0.621px;">information is solicited under the authority of the National Science Foundation Act of 1950, as amended. We will protect</span><span class="t" style="left:121px;top:537.00px;font-size:14px;line-height:18px;color:#222;letter-spacing:0.551px;">the confidentiality of the information in accordance with the Privacy Act of 1974 and the Confidentiality Information</span><span class="t" style="left:99px;top:559.50px;font-size:14px;line-height:18px;color:#222;letter-spacing:0.602px;">Protection and Statistical Efficiency Act of 2002. Title 15 of the United States Code authorizes us to conduct this survey.</span><span class="t" style="left:30px;top:641.00px;font-size:16px;line-height:20px;color:#2222cc;text-decoration:underline;">Next</span><span class="t" style="left:852.5px;top:678.00px;font-size:10px;line-height:12px;color:#fff;letter-spacing:0.104px;">Form Number: NSCG-1</span><span class="t" style="left:852.5px;top:689.00px;font-size:10px;line-height:12px;color:#fff;letter-spacing:0.250px;">OMB No.: 3145-0141</span><span class="t" style="left:852.5px;top:701.00px;font-size:10px;line-height:12px;color:#fff;letter-spacing:0.230px;">Approval Expires: 7/2011</span><div class="a dith" style="left:1008px;top:137px;width:16px;height:609px;"></div><div class="a sraised" style="left:1008px;top:137px;width:16px;height:16px;"></div><svg class="a" style="left:1012px;top:143px;" width="7" height="4" viewBox="0 0 7 4"><path d="M0 4h7l-3.5-4z" fill="#000"/></svg><div class="a sraised" style="left:1008px;top:153px;width:16px;height:420px;"></div><div class="a sraised" style="left:1008px;top:730px;width:16px;height:16px;"></div><svg class="a" style="left:1012px;top:736px;" width="7" height="4" viewBox="0 0 7 4"><path d="M0 0h7l-3.5 4z" fill="#000"/></svg></div></div><div class="a" style="left:77px;top:253.2px;width:2048px;height:768px;transform:scale(0.3232);transform-origin:0 0;overflow:hidden;background:#d4d0c8"><div class="win" style="left:0;top:0;width:1024px;height:768px"><div class="a" style="left:0px;top:0px;width:1024px;height:18px;background:linear-gradient(90deg,#808080,#a8a8a8 60%,#c0c0c0)"></div><svg class="a" style="left:2px;top:1px;" width="16" height="16" viewBox="0 0 16 16"><use href="#tk_wordico"/></svg><span class="t" style="left:19px;top:2.00px;font-size:11px;line-height:14px;font-weight:bold;color:#d4d0c8;letter-spacing:0.367px;">NCSG test plan 082409 - Microsoft Word</span><div class="a cap" style="left:972px;top:2px;width:16px;height:14px;"></div><div class="a cap" style="left:988px;top:2px;width:16px;height:14px;"></div><div class="a cap" style="left:1006px;top:2px;width:16px;height:14px;"></div><div class="a" style="left:976px;top:11px;width:6px;height:2px;background:#000"></div><svg class="a" style="left:991px;top:4px;" width="10" height="10" viewBox="0 0 10 10"><path d="M2.5 1h6v5h-2M2.5 2h6" stroke="#000" fill="none"/><rect x=".5" y="4" width="6" height="5" fill="none" stroke="#000"/><path d="M.5 4.5h6" stroke="#000"/></svg><svg class="a" style="left:1010px;top:5px;" width="8" height="8" viewBox="0 0 8 8"><path d="M0 0l8 7M1 0l7 7M8 0l-8 7M7 0l-7 7" stroke="#000" stroke-width="1"/></svg><div class="a grip" style="left:3px;top:24px;width:3px;height:14px;"></div><span class="t" style="left:16px;top:24.00px;font-size:11px;line-height:14px;letter-spacing:-0.431px;"><u>F</u>ile</span><span class="t" style="left:47.5px;top:24.00px;font-size:11px;line-height:14px;letter-spacing:-0.489px;"><u>E</u>dit</span><span class="t" style="left:82px;top:24.00px;font-size:11px;line-height:14px;letter-spacing:-0.411px;"><u>V</u>iew</span><span class="t" style="left:120px;top:24.00px;font-size:11px;line-height:14px;letter-spacing:0.082px;"><u>I</u>nsert</span><span class="t" style="left:164px;top:24.00px;font-size:11px;line-height:14px;letter-spacing:-0.140px;">F<u>o</u>rmat</span><span class="t" style="left:215px;top:24.00px;font-size:11px;line-height:14px;letter-spacing:-0.336px;"><u>T</u>ools</span><span class="t" style="left:256px;top:24.00px;font-size:11px;line-height:14px;letter-spacing:-0.259px;">T<u>a</u>ble</span><span class="t" style="left:298px;top:24.00px;font-size:11px;line-height:14px;letter-spacing:-0.354px;"><u>W</u>indow</span><span class="t" style="left:351.5px;top:24.00px;font-size:11px;line-height:14px;letter-spacing:-0.212px;"><u>M</u>endeley</span><span class="t" style="left:413.5px;top:24.00px;font-size:11px;line-height:14px;letter-spacing:-0.406px;"><u>H</u>elp</span><span class="t" style="left:451px;top:24.00px;font-size:11px;line-height:14px;letter-spacing:-0.540px;">Adob<u>e</u> PDF</span><span class="t" style="left:519.5px;top:24.00px;font-size:11px;line-height:14px;letter-spacing:-0.228px;">Acrobat <u>C</u>omments</span><div class="a" style="left:857px;top:22px;width:148px;height:18px;background:#fff"></div><span class="t" style="left:860px;top:23.00px;font-size:11px;line-height:14px;color:#808080;letter-spacing:-0.017px;">Type a question for help</span><div class="a" style="left:993px;top:23px;width:11px;height:16px;background:#d4d0c8"></div><svg class="a" style="left:996px;top:30px" width="5" height="3"><path d="M0 0H5L2.5 3z" fill="#000"/></svg><svg class="a" style="left:1010px;top:27px;" width="9" height="9" viewBox="0 0 9 9"><path d="M.5 .5l8 8M8.5 .5l-8 8" stroke="#000" stroke-width="1.5"/></svg><div class="a tb" style="left:292px;top:44px;width:721px;height:24px;"></div><div class="a grip" style="left:294px;top:48px;width:3px;height:15px;"></div><svg class="a" style="left:301px;top:49px;" width="16" height="16" viewBox="0 0 16 16"><use href="#styles"/></svg><div class="a" style="left:323px;top:47px;width:90px;height:18px;background:#fff"></div><div class="a" style="left:401px;top:48px;width:11px;height:16px;background:#d4d0c8"></div><svg class="a" style="left:404px;top:55px" width="5" height="3"><path d="M0 0H5L2.5 3z" fill="#000"/></svg><span class="t" style="left:325.5px;top:48.00px;font-size:11px;line-height:14px;color:#000;">Normal + Arial,</span><div class="a" style="left:415px;top:47px;width:111px;height:18px;background:#fff"></div><div class="a" style="left:514px;top:48px;width:11px;height:16px;background:#d4d0c8"></div><svg class="a" style="left:517px;top:55px" width="5" height="3"><path d="M0 0H5L2.5 3z" fill="#000"/></svg><span class="t" style="left:418px;top:48.00px;font-size:11px;line-height:14px;color:#000;">Arial</span><div class="a" style="left:527.5px;top:47px;width:37px;height:18px;background:#fff"></div><div class="a" style="left:552.5px;top:48px;width:11px;height:16px;background:#d4d0c8"></div><svg class="a" style="left:555.5px;top:55px" width="5" height="3"><path d="M0 0H5L2.5 3z" fill="#000"/></svg><span class="t" style="left:531px;top:48.00px;font-size:11px;line-height:14px;color:#000;">11</span><div class="a sep" style="left:567px;top:47px;width:1px;height:19px;"></div><span class="t" style="left:577px;top:48.00px;font-size:14px;line-height:18px;font-weight:bold;font-family:Liberation Serif,serif;color:#333;">B</span><span class="t" style="left:600px;top:48.00px;font-size:14px;line-height:18px;font-weight:bold;font-style:italic;font-family:Liberation Serif,serif;color:#444;">I</span><span class="t" style="left:622px;top:48.00px;font-size:13px;line-height:16px;font-weight:bold;font-family:Liberation Serif,serif;color:#444;text-decoration:underline;">U</span><div class="a sep" style="left:642px;top:47px;width:1px;height:19px;"></div><svg class="a" style="left:648px;top:49px;" width="16" height="16" viewBox="0 0 16 16"><use href="#al_l"/></svg><div class="a" style="left:669px;top:45px;width:23px;height:22px;border:1px solid #0a246a;background:#d4d5d8"></div><svg class="a" style="left:672px;top:49px;" width="16" height="16" viewBox="0 0 16 16"><use href="#al_c"/></svg><svg class="a" style="left:694px;top:49px;" width="16" height="16" viewBox="0 0 16 16"><use href="#al_r"/></svg><svg class="a" style="left:717px;top:49px;" width="16" height="16" viewBox="0 0 16 16"><use href="#al_j"/></svg><svg class="a" style="left:741px;top:49px;" width="16" height="16" viewBox="0 0 16 16"><use href="#al_d"/></svg><svg class="a" style="left:764px;top:49px;" width="16" height="16" viewBox="0 0 16 16"><use href="#lnsp"/></svg><svg class="a" style="left:786px;top:56px" width="5" height="3"><path d="M0 0H5L2.5 3z" fill="#000"/></svg><div class="a sep" style="left:797px;top:47px;width:1px;height:19px;"></div><svg class="a" style="left:803px;top:49px;" width="16" height="16" viewBox="0 0 16 16"><use href="#numlist"/></svg><svg class="a" style="left:826px;top:49px;" width="16" height="16" viewBox="0 0 16 16"><use href="#bullist"/></svg><svg class="a" style="left:850px;top:49px;" width="16" height="16" viewBox="0 0 16 16"><use href="#outdent"/></svg><svg class="a" style="left:873px;top:49px;" width="16" height="16" viewBox="0 0 16 16"><use href="#indent"/></svg><div class="a sep" style="left:895px;top:47px;width:1px;height:19px;"></div><svg class="a" style="left:903px;top:49px;" width="16" height="16" viewBox="0 0 16 16"><use href="#borders"/></svg><svg class="a" style="left:924px;top:56px" width="5" height="3"><path d="M0 0H5L2.5 3z" fill="#000"/></svg><svg class="a" style="left:936px;top:49px;" width="16" height="16" viewBox="0 0 16 16"><use href="#hilite"/></svg><svg class="a" style="left:958px;top:56px" width="5" height="3"><path d="M0 0H5L2.5 3z" fill="#000"/></svg><svg class="a" style="left:970px;top:49px;" width="16" height="16" viewBox="0 0 16 16"><use href="#fcolor"/></svg><svg class="a" style="left:992px;top:56px" width="5" height="3"><path d="M0 0H5L2.5 3z" fill="#000"/></svg><svg class="a" style="left:1004px;top:60px" width="5" height="3"><path d="M0 0H5L2.5 3z" fill="#000"/></svg><div class="a tb" style="left:2px;top:70px;width:64px;height:24px;"></div><div class="a grip" style="left:4px;top:74px;width:3px;height:15px;"></div><svg class="a" style="left:10px;top:74px;" width="16" height="16" viewBox="0 0 16 16"><use href="#pdf1"/></svg><svg class="a" style="left:34px;top:74px;" width="16" height="16" viewBox="0 0 16 16"><use href="#pdf2"/></svg><svg class="a" style="left:57px;top:86px" width="5" height="3"><path d="M0 0H5L2.5 3z" fill="#000"/></svg><div class="a tb" style="left:68px;top:70px;width:383px;height:24px;"></div><div class="a grip" style="left:70px;top:74px;width:3px;height:15px;"></div><svg class="a" style="left:78px;top:74px;" width="16" height="16" viewBox="0 0 16 16"><use href="#quote"/></svg><span class="t" style="left:96.5px;top:75.00px;font-size:11px;line-height:14px;letter-spacing:0.042px;">Insert Citation</span><svg class="a" style="left:173px;top:74px;" width="16" height="16" viewBox="0 0 16 16"><use href="#book"/></svg><span class="t" style="left:192px;top:75.00px;font-size:11px;line-height:14px;letter-spacing:-0.111px;">Insert Bibliography</span><svg class="a" style="left:290px;top:74px;" width="16" height="16" viewBox="0 0 16 16"><use href="#refresh"/></svg><span class="t" style="left:307.5px;top:75.00px;font-size:11px;line-height:14px;letter-spacing:-0.145px;">Refresh</span><div class="a" style="left:351px;top:73px;width:88px;height:18px;background:#fff"></div><div class="a" style="left:427px;top:74px;width:11px;height:16px;background:#d4d0c8"></div><svg class="a" style="left:430px;top:81px" width="5" height="3"><path d="M0 0H5L2.5 3z" fill="#000"/></svg><svg class="a" style="left:443px;top:86px" width="5" height="3"><path d="M0 0H5L2.5 3z" fill="#000"/></svg><div class="a tb" style="left:454px;top:70px;width:42px;height:24px;"></div><div class="a grip" style="left:456px;top:74px;width:3px;height:15px;"></div><svg class="a" style="left:464px;top:74px;" width="16" height="16" viewBox="0 0 16 16"><use href="#emailrev"/></svg><svg class="a" style="left:487px;top:86px" width="5" height="3"><path d="M0 0H5L2.5 3z" fill="#000"/></svg><div class="a tb" style="left:498px;top:70px;width:417px;height:24px;"></div><div class="a grip" style="left:500px;top:74px;width:3px;height:15px;"></div><div class="a" style="left:505px;top:73px;width:137px;height:18px;background:#fff"></div><div class="a" style="left:630px;top:74px;width:11px;height:16px;background:#d4d0c8"></div><svg class="a" style="left:633px;top:81px" width="5" height="3"><path d="M0 0H5L2.5 3z" fill="#000"/></svg><span class="t" style="left:508px;top:75.00px;font-size:11px;line-height:14px;letter-spacing:-0.341px;">Final Showing Markup</span><span class="t" style="left:646px;top:75.00px;font-size:11px;line-height:14px;letter-spacing:-0.379px;"><u>S</u>how</span><svg class="a" style="left:675px;top:81px" width="5" height="3"><path d="M0 0H5L2.5 3z" fill="#000"/></svg><div class="a sep" style="left:687px;top:73px;width:1px;height:19px;"></div><svg class="a" style="left:694px;top:74px;" width="16" height="16" viewBox="0 0 16 16"><use href="#revprev"/></svg><svg class="a" style="left:717px;top:74px;" width="16" height="16" viewBox="0 0 16 16"><use href="#revnext"/></svg><svg class="a" style="left:740px;top:74px;" width="16" height="16" viewBox="0 0 16 16"><use href="#revacc"/></svg><svg class="a" style="left:762px;top:81px" width="5" height="3"><path d="M0 0H5L2.5 3z" fill="#000"/></svg><svg class="a" style="left:773px;top:74px;" width="16" height="16" viewBox="0 0 16 16"><use href="#revrej"/></svg><svg class="a" style="left:796px;top:81px" width="5" height="3"><path d="M0 0H5L2.5 3z" fill="#000"/></svg><div class="a sep" style="left:807px;top:73px;width:1px;height:19px;"></div><svg class="a" style="left:814px;top:74px;" width="16" height="16" viewBox="0 0 16 16"><use href="#newcomm"/></svg><svg class="a" style="left:836px;top:81px" width="5" height="3"><path d="M0 0H5L2.5 3z" fill="#000"/></svg><div class="a sep" style="left:847px;top:73px;width:1px;height:19px;"></div><svg class="a" style="left:854px;top:74px;" width="16" height="16" viewBox="0 0 16 16"><use href="#track"/></svg><div class="a sep" style="left:876px;top:73px;width:1px;height:19px;"></div><svg class="a" style="left:883px;top:74px;" width="16" height="16" viewBox="0 0 16 16"><use href="#revpane"/></svg><svg class="a" style="left:906px;top:86px" width="5" height="3"><path d="M0 0H5L2.5 3z" fill="#000"/></svg><div class="a tb" style="left:7px;top:96px;width:641px;height:24px;"></div><div class="a grip" style="left:10px;top:100px;width:3px;height:15px;"></div><svg class="a" style="left:18px;top:100px;" width="16" height="16" viewBox="0 0 16 16"><use href="#new"/></svg><svg class="a" style="left:40px;top:100px;" width="16" height="16" viewBox="0 0 16 16"><use href="#open"/></svg><svg class="a" style="left:63px;top:100px;" width="16" height="16" viewBox="0 0 16 16"><use href="#save"/></svg><svg class="a" style="left:86px;top:100px;" width="16" height="16" viewBox="0 0 16 16"><use href="#perm"/></svg><svg class="a" style="left:115px;top:100px;" width="16" height="16" viewBox="0 0 16 16"><use href="#print"/></svg><svg class="a" style="left:137px;top:100px;" width="16" height="16" viewBox="0 0 16 16"><use href="#preview"/></svg><svg class="a" style="left:161px;top:100px;" width="16" height="16" viewBox="0 0 16 16"><use href="#spell"/></svg><svg class="a" style="left:190px;top:100px;" width="16" height="16" viewBox="0 0 16 16"><use href="#cut"/></svg><svg class="a" style="left:212px;top:100px;" width="16" height="16" viewBox="0 0 16 16"><use href="#copy"/></svg><svg class="a" style="left:235px;top:100px;" width="16" height="16" viewBox="0 0 16 16"><use href="#paste"/></svg><svg class="a" style="left:258px;top:100px;" width="16" height="16" viewBox="0 0 16 16"><use href="#painter"/></svg><svg class="a" style="left:288px;top:100px;" width="16" height="16" viewBox="0 0 16 16"><use href="#undo"/></svg><svg class="a" style="left:322px;top:100px;" width="16" height="16" viewBox="0 0 16 16"><use href="#redo"/></svg><svg class="a" style="left:362px;top:100px;" width="16" height="16" viewBox="0 0 16 16"><use href="#hlink"/></svg><svg class="a" style="left:386px;top:100px;" width="16" height="16" viewBox="0 0 16 16"><use href="#tblbord"/></svg><svg class="a" style="left:408px;top:100px;" width="16" height="16" viewBox="0 0 16 16"><use href="#instbl"/></svg><svg class="a" style="left:431px;top:100px;" width="16" height="16" viewBox="0 0 16 16"><use href="#excel"/></svg><svg class="a" style="left:454px;top:100px;" width="16" height="16" viewBox="0 0 16 16"><use href="#columns"/></svg><div class="a sep" style="left:108px;top:99px;width:1px;height:19px;"></div><div class="a sep" style="left:183px;top:99px;width:1px;height:19px;"></div><div class="a sep" style="left:281px;top:99px;width:1px;height:19px;"></div><div class="a sep" style="left:355px;top:99px;width:1px;height:19px;"></div><div class="a sep" style="left:499.5px;top:99px;width:1px;height:19px;"></div><svg class="a" style="left:310px;top:107px" width="5" height="3"><path d="M0 0H5L2.5 3z" fill="#000"/></svg><svg class="a" style="left:344px;top:107px" width="5" height="3"><path d="M0 0H5L2.5 3z" fill="#a0a0a0"/></svg><div class="a" style="left:474px;top:97px;width:23px;height:22px;border:1px solid #0a246a;background:#d4d5d8"></div><svg class="a" style="left:478px;top:100px;" width="16" height="16" viewBox="0 0 16 16"><use href="#drawing"/></svg><svg class="a" style="left:506px;top:100px;" width="16" height="16" viewBox="0 0 16 16"><use href="#docmap"/></svg><svg class="a" style="left:527px;top:100px;" width="16" height="16" viewBox="0 0 16 16"><use href="#para"/></svg><div class="a" style="left:549.5px;top:99px;width:62px;height:18px;background:#fff"></div><div class="a" style="left:599.5px;top:100px;width:11px;height:16px;background:#d4d0c8"></div><svg class="a" style="left:602.5px;top:107px" width="5" height="3"><path d="M0 0H5L2.5 3z" fill="#000"/></svg><span class="t" style="left:553px;top:100.00px;font-size:11px;line-height:14px;color:#000;">100%</span><svg class="a" style="left:618px;top:100px;" width="16" height="16" viewBox="0 0 16 16"><use href="#help"/></svg><svg class="a" style="left:640px;top:112px" width="5" height="3"><path d="M0 0H5L2.5 3z" fill="#000"/></svg><div class="a" style="left:0px;top:121px;width:1024px;height:1px;background:#808080"></div><div class="a" style="left:1px;top:122px;width:1023px;height:1px;background:#404040"></div><div class="a" style="left:0px;top:121px;width:1px;height:552px;background:#808080"></div><div class="a" style="left:1px;top:122px;width:1px;height:551px;background:#404040"></div><div class="a" style="left:6px;top:127px;width:9px;height:546px;background:#808080"></div><div class="a" style="left:15px;top:127px;width:1px;height:546px;background:#000"></div><div class="a" style="left:16px;top:127px;width:979px;height:546px;background:#fff;overflow:hidden"><div class="a" style="left:53px;top:76px;width:24px;height:1px;background:#808080"></div><div class="a" style="left:76px;top:53px;width:1px;height:24px;background:#808080"></div><div class="a" style="left:739px;top:76px;width:24px;height:1px;background:#808080"></div><div class="a" style="left:739px;top:53px;width:1px;height:24px;background:#808080"></div><div class="a" style="left:77px;top:77px;width:2048px;height:768px;transform:scale(0.3232);transform-origin:0 0;overflow:hidden;background:#d4d0c8"><div class="a" style="left:0px;top:0px;width:2048px;height:768px;background:#d4d0c8"></div><div class="a" style="left:0px;top:0px;width:1024px;height:18px;background:#909090"></div><div class="a" style="left:1024px;top:0px;width:1024px;height:18px;background:linear-gradient(90deg,#0a246a,#a6caf0)"></div><div class="a" style="left:1229px;top:52px;width:560px;height:22px;background:#fff"></div><div class="a" style="left:1822px;top:52px;width:220px;height:22px;background:#f0f0ee"></div><div class="a" style="left:1031px;top:52px;width:24px;height:22px;background:#50c060;border-radius:8px"></div><div class="a" style="left:1124px;top:52px;width:24px;height:22px;background:#3a90e0;border-radius:12px"></div><div class="a" style="left:1024px;top:110px;width:1024px;height:26px;background:#c6c3bb"></div><div class="a" style="left:1830px;top:111px;width:199px;height:25px;background:#f0eee8"></div><div class="a" style="left:1031px;top:28px;width:22px;height:9px;background:#777"></div><div class="a" style="left:1063px;top:28px;width:22px;height:9px;background:#777"></div><div class="a" style="left:1097px;top:28px;width:22px;height:9px;background:#777"></div><div class="a" style="left:1135px;top:28px;width:22px;height:9px;background:#777"></div><div class="a" style="left:1185px;top:28px;width:22px;height:9px;background:#777"></div><div class="a" style="left:1253px;top:28px;width:22px;height:9px;background:#777"></div><div class="a" style="left:1293px;top:28px;width:22px;height:9px;background:#777"></div><div class="a" style="left:1024px;top:137px;width:1008px;height:609px;background:#a29a82"></div><div class="a" style="left:2032px;top:137px;width:16px;height:609px;background:#e8e6e2"></div><div class="a" style="left:1050px;top:176px;width:956px;height:563px;background:#7a9496;border:2px solid #403e3c"></div><div class="a" style="left:1056px;top:182px;width:944px;height:79px;background:linear-gradient(#d4c3a2,#7d6f5a)"></div><div class="a" style="left:1056px;top:261px;width:944px;height:46px;background:#33291f"></div><div class="a" style="left:1056px;top:307px;width:944px;height:34px;background:#30312f"></div><div class="a" style="left:1768px;top:182px;width:232px;height:125px;background:#453f34;clip-path:polygon(35% 0,100% 0,100% 100%,12% 100%,0 64%)"></div><div class="a" style="left:1714px;top:185px;width:150px;height:62px;background:#8a5032;border-radius:40% 10% 40% 60%;opacity:.9"></div><div class="a" style="left:1066px;top:198px;width:92px;height:76px;background:radial-gradient(closest-side,#2a4a98 40%,#d8b040 42% 60%,rgba(216,176,64,0) 100%)"></div><div class="a" style="left:1162px;top:217px;width:300px;height:18px;background:#f4f0e8;opacity:.8"></div><div class="a" style="left:1304px;top:281px;width:453px;height:13px;background:#eee;opacity:.85"></div><div class="a" style="left:1106px;top:316px;width:139px;height:16px;background:#e8e4bc"></div><div class="a" style="left:1358px;top:316px;width:114px;height:16px;background:#e8e4bc"></div><div class="a" style="left:0px;top:19px;width:1024px;height:117px;background:#e2e0da"></div><div class="a" style="left:232px;top:45px;width:13px;height:13px;background:#667;opacity:.7"></div><div class="a" style="left:253px;top:45px;width:13px;height:13px;background:#667;opacity:.7"></div><div class="a" style="left:274px;top:45px;width:13px;height:13px;background:#667;opacity:.7"></div><div class="a" style="left:295px;top:45px;width:13px;height:13px;background:#667;opacity:.7"></div><div class="a" style="left:316px;top:45px;width:13px;height:13px;background:#667;opacity:.7"></div><div class="a" style="left:337px;top:45px;width:13px;height:13px;background:#667;opacity:.7"></div><div class="a" style="left:358px;top:45px;width:13px;height:13px;background:#667;opacity:.7"></div><div class="a" style="left:379px;top:45px;width:13px;height:13px;background:#667;opacity:.7"></div><div class="a" style="left:400px;top:45px;width:13px;height:13px;background:#667;opacity:.7"></div><div class="a" style="left:421px;top:45px;width:13px;height:13px;background:#667;opacity:.7"></div><div class="a" style="left:442px;top:45px;width:13px;height:13px;background:#667;opacity:.7"></div><div class="a" style="left:463px;top:45px;width:13px;height:13px;background:#667;opacity:.7"></div><div class="a" style="left:484px;top:45px;width:13px;height:13px;background:#667;opacity:.7"></div><div class="a" style="left:505px;top:45px;width:13px;height:13px;background:#667;opacity:.7"></div><div class="a" style="left:526px;top:45px;width:13px;height:13px;background:#667;opacity:.7"></div><div class="a" style="left:547px;top:45px;width:13px;height:13px;background:#667;opacity:.7"></div><div class="a" style="left:568px;top:45px;width:13px;height:13px;background:#667;opacity:.7"></div><div class="a" style="left:589px;top:45px;width:13px;height:13px;background:#667;opacity:.7"></div><div class="a" style="left:610px;top:45px;width:13px;height:13px;background:#667;opacity:.7"></div><div class="a" style="left:631px;top:45px;width:13px;height:13px;background:#667;opacity:.7"></div><div class="a" style="left:652px;top:45px;width:13px;height:13px;background:#667;opacity:.7"></div><div class="a" style="left:50px;top:65px;width:738px;height:18px;background:#fff"></div><div class="a" style="left:0px;top:136px;width:38px;height:582px;background:#c8c4bc"></div><div class="a" style="left:38px;top:136px;width:986px;height:32px;background:#6b9fd2"></div><div class="a" style="left:38px;top:168px;width:986px;height:94px;background:#e9e5cd"></div><div class="a" style="left:487px;top:174px;width:508px;height:76px;background:#f8f8f4"></div><div class="a" style="left:62px;top:262px;width:934px;height:27px;background:#d6d9e8"></div><div class="a" style="left:38px;top:291px;width:984px;height:422px;background:#fff"></div><div class="a" style="left:54px;top:310px;width:20px;height:6px;background:#888"></div><div class="a" style="left:54px;top:341px;width:900px;height:6px;background:#888"></div><div class="a" style="left:54px;top:356px;width:640px;height:6px;background:#888"></div><div class="a" style="left:54px;top:391px;width:140px;height:6px;background:#888"></div><div class="a" style="left:54px;top:408px;width:130px;height:6px;background:#888"></div><div class="a" style="left:54px;top:424px;width:130px;height:6px;background:#888"></div><div class="a" style="left:54px;top:440px;width:130px;height:6px;background:#888"></div><div class="a" style="left:54px;top:456px;width:130px;height:6px;background:#888"></div><div class="a" style="left:54px;top:472px;width:130px;height:6px;background:#888"></div><div class="a" style="left:54px;top:507px;width:90px;height:6px;background:#888"></div><div class="a" style="left:54px;top:523px;width:250px;height:6px;background:#888"></div><div class="a" style="left:54px;top:555px;width:60px;height:6px;background:#888"></div><div class="a" style="left:54px;top:570px;width:120px;height:6px;background:#888"></div><div class="a" style="left:54px;top:586px;width:100px;height:6px;background:#888"></div><div class="a" style="left:54px;top:602px;width:70px;height:6px;background:#888"></div><div class="a" style="left:1062px;top:371px;width:934px;height:248px;background:#ece8c4"></div><div class="a" style="left:1130px;top:452px;width:800px;height:7px;background:#8a886e"></div><div class="a" style="left:1130px;top:474.5px;width:800px;height:7px;background:#8a886e"></div><div class="a" style="left:1130px;top:497px;width:800px;height:7px;background:#8a886e"></div><div class="a" style="left:1130px;top:519.5px;width:800px;height:7px;background:#8a886e"></div><div class="a" style="left:1130px;top:542px;width:800px;height:7px;background:#8a886e"></div><div class="a" style="left:1130px;top:564.5px;width:800px;height:7px;background:#8a886e"></div><div class="a" style="left:1430px;top:414px;width:197px;height:14px;background:#444"></div><div class="a" style="left:1876px;top:680px;width:110px;height:28px;background:#c8d4d4;opacity:.8"></div><div class="a" style="left:0px;top:740px;width:1024px;height:28px;background:#d4d0c8;border-top:1px solid #fff"></div><div class="a" style="left:2px;top:743px;width:52px;height:22px;border:1px solid #888;background:#d4d0c8"></div><div class="a" style="left:59px;top:743px;width:157px;height:22px;border:1px solid #888;background:#d4d0c8"></div><div class="a" style="left:219px;top:743px;width:157px;height:22px;border:1px solid #888;background:#d4d0c8"></div><div class="a" style="left:539px;top:743px;width:157px;height:22px;border:1px solid #888;background:#d4d0c8"></div><div class="a" style="left:699px;top:743px;width:157px;height:22px;border:1px solid #888;background:#d4d0c8"></div><div class="a" style="left:379px;top:743px;width:157px;height:22px;background:#f0efec;border:1px solid #555"></div><div class="a" style="left:1024px;top:746px;width:1024px;height:22px;background:#d4d0c8"></div></div><div class="a" style="left:77px;top:342px;width:2048px;height:768px;transform:scale(0.3232);transform-origin:0 0;overflow:hidden;background:#d4d0c8"><div class="a" style="left:0px;top:0px;width:2048px;height:768px;background:#d4d0c8"></div><div class="a" style="left:0px;top:0px;width:1024px;height:18px;background:#909090"></div><div class="a" style="left:1024px;top:0px;width:1024px;height:18px;background:linear-gradient(90deg,#0a246a,#a6caf0)"></div><div class="a" style="left:1229px;top:52px;width:560px;height:22px;background:#fff"></div><div class="a" style="left:1822px;top:52px;width:220px;height:22px;background:#f0f0ee"></div><div class="a" style="left:1031px;top:52px;width:24px;height:22px;background:#50c060;border-radius:8px"></div><div class="a" style="left:1124px;top:52px;width:24px;height:22px;background:#3a90e0;border-radius:12px"></div><div class="a" style="left:1024px;top:110px;width:1024px;height:26px;background:#c6c3bb"></div><div class="a" style="left:1830px;top:111px;width:199px;height:25px;background:#f0eee8"></div><div class="a" style="left:1031px;top:28px;width:22px;height:9px;background:#777"></div><div class="a" style="left:1063px;top:28px;width:22px;height:9px;background:#777"></div><div class="a" style="left:1097px;top:28px;width:22px;height:9px;background:#777"></div><div class="a" style="left:1135px;top:28px;width:22px;height:9px;background:#777"></div><div class="a" style="left:1185px;top:28px;width:22px;height:9px;background:#777"></div><div class="a" style="left:1253px;top:28px;width:22px;height:9px;background:#777"></div><div class="a" style="left:1293px;top:28px;width:22px;height:9px;background:#777"></div><div class="a" style="left:1024px;top:137px;width:1008px;height:609px;background:#a29a82"></div><div class="a" style="left:2032px;top:137px;width:16px;height:609px;background:#e8e6e2"></div><div class="a" style="left:1050px;top:141px;width:956px;height:468px;background:#7a9496;border:2px solid #403e3c"></div><div class="a" style="left:1056px;top:147px;width:944px;height:79px;background:linear-gradient(#d4c3a2,#7d6f5a)"></div><div class="a" style="left:1056px;top:226px;width:944px;height:46px;background:#33291f"></div><div class="a" style="left:1056px;top:272px;width:944px;height:34px;background:#30312f"></div><div class="a" style="left:1768px;top:147px;width:232px;height:125px;background:#453f34;clip-path:polygon(35% 0,100% 0,100% 100%,12% 100%,0 64%)"></div><div class="a" style="left:1714px;top:150px;width:150px;height:62px;background:#8a5032;border-radius:40% 10% 40% 60%;opacity:.9"></div><div class="a" style="left:1066px;top:163px;width:92px;height:76px;background:radial-gradient(closest-side,#2a4a98 40%,#d8b040 42% 60%,rgba(216,176,64,0) 100%)"></div><div class="a" style="left:1162px;top:182px;width:300px;height:18px;background:#f4f0e8;opacity:.8"></div><div class="a" style="left:1304px;top:246px;width:453px;height:13px;background:#eee;opacity:.85"></div><div class="a" style="left:1106px;top:281px;width:139px;height:16px;background:#e8e4bc"></div><div class="a" style="left:1358px;top:281px;width:114px;height:16px;background:#e8e4bc"></div><div class="a" style="left:0px;top:19px;width:1024px;height:102px;background:#dedbd4"></div><div class="a" style="left:35px;top:26px;width:14px;height:12px;background:#667;opacity:.45"></div><div class="a" style="left:59px;top:26px;width:14px;height:12px;background:#667;opacity:.45"></div><div class="a" style="left:83px;top:26px;width:14px;height:12px;background:#667;opacity:.45"></div><div class="a" style="left:107px;top:26px;width:14px;height:12px;background:#667;opacity:.45"></div><div class="a" style="left:131px;top:26px;width:14px;height:12px;background:#667;opacity:.45"></div><div class="a" style="left:155px;top:26px;width:14px;height:12px;background:#667;opacity:.45"></div><div class="a" style="left:179px;top:26px;width:14px;height:12px;background:#667;opacity:.45"></div><div class="a" style="left:203px;top:26px;width:14px;height:12px;background:#667;opacity:.45"></div><div class="a" style="left:227px;top:26px;width:14px;height:12px;background:#667;opacity:.45"></div><div class="a" style="left:251px;top:26px;width:14px;height:12px;background:#667;opacity:.45"></div><div class="a" style="left:275px;top:26px;width:14px;height:12px;background:#667;opacity:.45"></div><div class="a" style="left:299px;top:26px;width:14px;height:12px;background:#667;opacity:.45"></div><div class="a" style="left:323px;top:26px;width:14px;height:12px;background:#667;opacity:.45"></div><div class="a" style="left:347px;top:26px;width:14px;height:12px;background:#667;opacity:.45"></div><div class="a" style="left:371px;top:26px;width:14px;height:12px;background:#667;opacity:.45"></div><div class="a" style="left:395px;top:26px;width:14px;height:12px;background:#667;opacity:.45"></div><div class="a" style="left:419px;top:26px;width:14px;height:12px;background:#667;opacity:.45"></div><div class="a" style="left:443px;top:26px;width:14px;height:12px;background:#667;opacity:.45"></div><div class="a" style="left:467px;top:26px;width:14px;height:12px;background:#667;opacity:.45"></div><div class="a" style="left:491px;top:26px;width:14px;height:12px;background:#667;opacity:.45"></div><div class="a" style="left:515px;top:26px;width:14px;height:12px;background:#667;opacity:.45"></div><div class="a" style="left:539px;top:26px;width:14px;height:12px;background:#667;opacity:.45"></div><div class="a" style="left:563px;top:26px;width:14px;height:12px;background:#667;opacity:.45"></div><div class="a" style="left:587px;top:26px;width:14px;height:12px;background:#667;opacity:.45"></div><div class="a" style="left:611px;top:26px;width:14px;height:12px;background:#667;opacity:.45"></div><div class="a" style="left:635px;top:26px;width:14px;height:12px;background:#667;opacity:.45"></div><div class="a" style="left:23px;top:50px;width:14px;height:12px;background:#667;opacity:.45"></div><div class="a" style="left:47px;top:50px;width:14px;height:12px;background:#667;opacity:.45"></div><div class="a" style="left:71px;top:50px;width:14px;height:12px;background:#667;opacity:.45"></div><div class="a" style="left:95px;top:50px;width:14px;height:12px;background:#667;opacity:.45"></div><div class="a" style="left:119px;top:50px;width:14px;height:12px;background:#667;opacity:.45"></div><div class="a" style="left:143px;top:50px;width:14px;height:12px;background:#667;opacity:.45"></div><div class="a" style="left:167px;top:50px;width:14px;height:12px;background:#667;opacity:.45"></div><div class="a" style="left:191px;top:50px;width:14px;height:12px;background:#667;opacity:.45"></div><div class="a" style="left:215px;top:50px;width:14px;height:12px;background:#667;opacity:.45"></div><div class="a" style="left:239px;top:50px;width:14px;height:12px;background:#667;opacity:.45"></div><div class="a" style="left:263px;top:50px;width:14px;height:12px;background:#667;opacity:.45"></div><div class="a" style="left:287px;top:50px;width:14px;height:12px;background:#667;opacity:.45"></div><div class="a" style="left:311px;top:50px;width:14px;height:12px;background:#667;opacity:.45"></div><div class="a" style="left:335px;top:50px;width:14px;height:12px;background:#667;opacity:.45"></div><div class="a" style="left:359px;top:50px;width:14px;height:12px;background:#667;opacity:.45"></div><div class="a" style="left:383px;top:50px;width:14px;height:12px;background:#667;opacity:.45"></div><div class="a" style="left:407px;top:50px;width:14px;height:12px;background:#667;opacity:.45"></div><div class="a" style="left:431px;top:50px;width:14px;height:12px;background:#667;opacity:.45"></div><div class="a" style="left:455px;top:50px;width:14px;height:12px;background:#667;opacity:.45"></div><div class="a" style="left:479px;top:50px;width:14px;height:12px;background:#667;opacity:.45"></div><div class="a" style="left:503px;top:50px;width:14px;height:12px;background:#667;opacity:.45"></div><div class="a" style="left:527px;top:50px;width:14px;height:12px;background:#667;opacity:.45"></div><div class="a" style="left:551px;top:50px;width:14px;height:12px;background:#667;opacity:.45"></div><div class="a" style="left:575px;top:50px;width:14px;height:12px;background:#667;opacity:.45"></div><div class="a" style="left:599px;top:50px;width:14px;height:12px;background:#667;opacity:.45"></div><div class="a" style="left:623px;top:50px;width:14px;height:12px;background:#667;opacity:.45"></div><div class="a" style="left:38px;top:76px;width:14px;height:12px;background:#667;opacity:.45"></div><div class="a" style="left:62px;top:76px;width:14px;height:12px;background:#667;opacity:.45"></div><div class="a" style="left:86px;top:76px;width:14px;height:12px;background:#667;opacity:.45"></div><div class="a" style="left:110px;top:76px;width:14px;height:12px;background:#667;opacity:.45"></div><div class="a" style="left:134px;top:76px;width:14px;height:12px;background:#667;opacity:.45"></div><div class="a" style="left:158px;top:76px;width:14px;height:12px;background:#667;opacity:.45"></div><div class="a" style="left:182px;top:76px;width:14px;height:12px;background:#667;opacity:.45"></div><div class="a" style="left:206px;top:76px;width:14px;height:12px;background:#667;opacity:.45"></div><div class="a" style="left:230px;top:76px;width:14px;height:12px;background:#667;opacity:.45"></div><div class="a" style="left:254px;top:76px;width:14px;height:12px;background:#667;opacity:.45"></div><div class="a" style="left:278px;top:76px;width:14px;height:12px;background:#667;opacity:.45"></div><div class="a" style="left:302px;top:76px;width:14px;height:12px;background:#667;opacity:.45"></div><div class="a" style="left:326px;top:76px;width:14px;height:12px;background:#667;opacity:.45"></div><div class="a" style="left:350px;top:76px;width:14px;height:12px;background:#667;opacity:.45"></div><div class="a" style="left:374px;top:76px;width:14px;height:12px;background:#667;opacity:.45"></div><div class="a" style="left:398px;top:76px;width:14px;height:12px;background:#667;opacity:.45"></div><div class="a" style="left:422px;top:76px;width:14px;height:12px;background:#667;opacity:.45"></div><div class="a" style="left:446px;top:76px;width:14px;height:12px;background:#667;opacity:.45"></div><div class="a" style="left:470px;top:76px;width:14px;height:12px;background:#667;opacity:.45"></div><div class="a" style="left:494px;top:76px;width:14px;height:12px;background:#667;opacity:.45"></div><div class="a" style="left:518px;top:76px;width:14px;height:12px;background:#667;opacity:.45"></div><div class="a" style="left:542px;top:76px;width:14px;height:12px;background:#667;opacity:.45"></div><div class="a" style="left:566px;top:76px;width:14px;height:12px;background:#667;opacity:.45"></div><div class="a" style="left:590px;top:76px;width:14px;height:12px;background:#667;opacity:.45"></div><div class="a" style="left:614px;top:76px;width:14px;height:12px;background:#667;opacity:.45"></div><div class="a" style="left:638px;top:76px;width:14px;height:12px;background:#667;opacity:.45"></div><div class="a" style="left:32px;top:102px;width:14px;height:12px;background:#667;opacity:.45"></div><div class="a" style="left:56px;top:102px;width:14px;height:12px;background:#667;opacity:.45"></div><div class="a" style="left:80px;top:102px;width:14px;height:12px;background:#667;opacity:.45"></div><div class="a" style="left:104px;top:102px;width:14px;height:12px;background:#667;opacity:.45"></div><div class="a" style="left:128px;top:102px;width:14px;height:12px;background:#667;opacity:.45"></div><div class="a" style="left:152px;top:102px;width:14px;height:12px;background:#667;opacity:.45"></div><div class="a" style="left:176px;top:102px;width:14px;height:12px;background:#667;opacity:.45"></div><div class="a" style="left:200px;top:102px;width:14px;height:12px;background:#667;opacity:.45"></div><div class="a" style="left:224px;top:102px;width:14px;height:12px;background:#667;opacity:.45"></div><div class="a" style="left:248px;top:102px;width:14px;height:12px;background:#667;opacity:.45"></div><div class="a" style="left:272px;top:102px;width:14px;height:12px;background:#667;opacity:.45"></div><div class="a" style="left:296px;top:102px;width:14px;height:12px;background:#667;opacity:.45"></div><div class="a" style="left:320px;top:102px;width:14px;height:12px;background:#667;opacity:.45"></div><div class="a" style="left:344px;top:102px;width:14px;height:12px;background:#667;opacity:.45"></div><div class="a" style="left:368px;top:102px;width:14px;height:12px;background:#667;opacity:.45"></div><div class="a" style="left:392px;top:102px;width:14px;height:12px;background:#667;opacity:.45"></div><div class="a" style="left:416px;top:102px;width:14px;height:12px;background:#667;opacity:.45"></div><div class="a" style="left:440px;top:102px;width:14px;height:12px;background:#667;opacity:.45"></div><div class="a" style="left:464px;top:102px;width:14px;height:12px;background:#667;opacity:.45"></div><div class="a" style="left:488px;top:102px;width:14px;height:12px;background:#667;opacity:.45"></div><div class="a" style="left:512px;top:102px;width:14px;height:12px;background:#667;opacity:.45"></div><div class="a" style="left:536px;top:102px;width:14px;height:12px;background:#667;opacity:.45"></div><div class="a" style="left:560px;top:102px;width:14px;height:12px;background:#667;opacity:.45"></div><div class="a" style="left:584px;top:102px;width:14px;height:12px;background:#667;opacity:.45"></div><div class="a" style="left:608px;top:102px;width:14px;height:12px;background:#667;opacity:.45"></div><div class="a" style="left:632px;top:102px;width:14px;height:12px;background:#667;opacity:.45"></div><div class="a" style="left:0px;top:121px;width:1024px;height:3px;background:#404040"></div><div class="a" style="left:6px;top:127px;width:1000px;height:546px;background:#808080"></div><div class="a" style="left:16px;top:127px;width:979px;height:43px;background:#fff"></div><div class="a" style="left:16px;top:170px;width:979px;height:14px;background:#333"></div><div class="a" style="left:16px;top:184px;width:979px;height:489px;background:#fff"></div><div class="a" style="left:91px;top:279px;width:84px;height:9px;background:#555"></div><div class="a" style="left:91px;top:304px;width:610px;height:6px;background:#999"></div><div class="a" style="left:1006px;top:127px;width:16px;height:546px;background:#e8e6e2"></div><div class="a" style="left:0px;top:691px;width:1024px;height:48px;background:#d8d5ce"></div><div class="a" style="left:1056px;top:342px;width:252px;height:33px;background:#d8c060"></div><div class="a" style="left:1056px;top:375px;width:944px;height:9px;background:#cdbd8c"></div><div class="a" style="left:1056px;top:384px;width:944px;height:174px;background:#ece8c4;border-right:3px solid #000;border-bottom:3px solid #000"></div><div class="a" style="left:1082px;top:398px;width:480px;height:10px;background:#222"></div><div class="a" style="left:1100px;top:424px;width:110px;height:7px;background:#555"></div><div class="a" style="left:1112px;top:446px;width:330px;height:7px;background:#777"></div><div class="a" style="left:1112px;top:464px;width:420px;height:7px;background:#777"></div><div class="a" style="left:1112px;top:482px;width:250px;height:7px;background:#777"></div><div class="a" style="left:1112px;top:500px;width:180px;height:7px;background:#777"></div><div class="a" style="left:1112px;top:518px;width:120px;height:7px;background:#777"></div><div class="a" style="left:1074px;top:565px;width:93px;height:27px;background:#cbbfaa;border-radius:14px;border:1px solid #555"></div><div class="a" style="left:1182px;top:565px;width:93px;height:27px;background:#cbbfaa;border-radius:14px;border:1px solid #555"></div><div class="a" style="left:1876px;top:548px;width:110px;height:28px;background:#c8d4d4;opacity:.8"></div><div class="a" style="left:0px;top:740px;width:1024px;height:28px;background:#d4d0c8;border-top:1px solid #fff"></div><div class="a" style="left:2px;top:743px;width:52px;height:22px;border:1px solid #888;background:#d4d0c8"></div><div class="a" style="left:59px;top:743px;width:157px;height:22px;border:1px solid #888;background:#d4d0c8"></div><div class="a" style="left:219px;top:743px;width:157px;height:22px;border:1px solid #888;background:#d4d0c8"></div><div class="a" style="left:539px;top:743px;width:157px;height:22px;border:1px solid #888;background:#d4d0c8"></div><div class="a" style="left:699px;top:743px;width:157px;height:22px;border:1px solid #888;background:#d4d0c8"></div><div class="a" style="left:379px;top:743px;width:157px;height:22px;background:#f0efec;border:1px solid #555"></div><div class="a" style="left:1024px;top:746px;width:1024px;height:22px;background:#d4d0c8"></div></div></div><div class="a" style="left:995px;top:127px;width:3px;height:546px;background:#000"></div><div class="a" style="left:998px;top:127px;width:8px;height:546px;background:#808080"></div><div class="a" style="left:1006px;top:123px;width:16px;height:5px;background:#fff;border:1px solid;border-color:#fff #000 #000 #fff"></div><div class="a dith" style="left:1006px;top:128px;width:16px;height:545px;"></div><div class="a sraised" style="left:1006px;top:128px;width:16px;height:16px;"></div><svg class="a" style="left:1010px;top:134px;" width="7" height="4" viewBox="0 0 7 4"><path d="M0 4h7l-3.5-4z" fill="#000"/></svg><div class="a sraised" style="left:1006px;top:300px;width:16px;height:13px;"></div><div class="a sraised" style="left:1006px;top:609px;width:16px;height:16px;"></div><svg class="a" style="left:1010px;top:615px;" width="7" height="4" viewBox="0 0 7 4"><path d="M0 0h7l-3.5 4z" fill="#000"/></svg><div class="a" style="left:1006px;top:625px;width:16px;height:48px;background:#d4d0c8"></div><svg class="a" style="left:1010px;top:630px;" width="7" height="7" viewBox="0 0 7 7"><path d="M1 3h5l-2.5-3zM0 6.5h7l-3.5-3.5z" fill="#000"/><path d="M1 3.5h5" stroke="#000"/></svg><svg class="a" style="left:1009px;top:644px;" width="9" height="9" viewBox="0 0 9 9"><circle cx="4.5" cy="4.5" r="3.5" fill="url(#gBall)" stroke="#333" stroke-width=".8"/></svg><svg class="a" style="left:1010px;top:661px;" width="7" height="7" viewBox="0 0 7 7"><path d="M0 0h7l-3.5 3.5zM1 4h5l-2.5 3z" fill="#000"/><path d="M1 3.5h5" stroke="#000"/></svg><div class="a" style="left:2px;top:673px;width:1004px;height:16px;background:#d4d0c8"></div><svg class="a" style="left:5px;top:676px;" width="16" height="16" viewBox="0 0 16 16"><use href="#v_normal"/></svg><svg class="a" style="left:21px;top:677px;" width="16" height="16" viewBox="0 0 16 16"><use href="#v_web"/></svg><div class="a" style="left:34px;top:673px;width:17px;height:16px;border:1px solid #0a246a;background:#d4d5d8"></div><svg class="a" style="left:37px;top:676px;" width="16" height="16" viewBox="0 0 16 16"><use href="#v_print"/></svg><svg class="a" style="left:53px;top:676px;" width="16" height="16" viewBox="0 0 16 16"><use href="#v_outline"/></svg><div class="a dith" style="left:66px;top:673px;width:940px;height:16px;"></div><div class="a sraised" style="left:66px;top:673px;width:16px;height:16px;"></div><svg class="a" style="left:71px;top:677px;" width="4" height="7" viewBox="0 0 4 7"><path d="M4 0v7l-4-3.5z" fill="#000"/></svg><div class="a sraised" style="left:91px;top:673px;width:889px;height:16px;"></div><div class="a sraised" style="left:990px;top:673px;width:16px;height:16px;"></div><svg class="a" style="left:996px;top:677px;" width="4" height="7" viewBox="0 0 4 7"><path d="M0 0v7l4-3.5z" fill="#000"/></svg><div class="a" style="left:1006px;top:673px;width:16px;height:16px;background:#d4d0c8"></div><div class="a" style="left:0px;top:689px;width:1023px;height:1px;background:#fff"></div><div class="a" style="left:1023px;top:19px;width:1px;height:721px;background:#fff"></div><div class="a tb" style="left:2px;top:691px;width:615px;height:25px;"></div><div class="a grip" style="left:4px;top:695px;width:3px;height:15px;"></div><span class="t" style="left:10px;top:697.00px;font-size:11px;line-height:14px;letter-spacing:-0.167px;">D<u>r</u>aw</span><svg class="a" style="left:39px;top:703px" width="5" height="3"><path d="M0 0H5L2.5 3z" fill="#000"/></svg><svg class="a" style="left:54px;top:695px;" width="16" height="16" viewBox="0 0 16 16"><use href="#cursor"/></svg><div class="a sep" style="left:74px;top:694px;width:1px;height:19px;"></div><span class="t" style="left:80.5px;top:697.00px;font-size:11px;line-height:14px;letter-spacing:-0.244px;">A<u>u</u>toShapes</span><svg class="a" style="left:141px;top:703px" width="5" height="3"><path d="M0 0H5L2.5 3z" fill="#000"/></svg><svg class="a" style="left:155px;top:695px;" width="16" height="16" viewBox="0 0 16 16"><use href="#line"/></svg><svg class="a" style="left:180px;top:695px;" width="16" height="16" viewBox="0 0 16 16"><use href="#arrowi"/></svg><svg class="a" style="left:201px;top:695px;" width="16" height="16" viewBox="0 0 16 16"><use href="#rect"/></svg><svg class="a" style="left:224px;top:695px;" width="16" height="16" viewBox="0 0 16 16"><use href="#oval"/></svg><svg class="a" style="left:247px;top:695px;" width="16" height="16" viewBox="0 0 16 16"><use href="#textbox"/></svg><svg class="a" style="left:270px;top:695px;" width="16" height="16" viewBox="0 0 16 16"><use href="#vtextbox"/></svg><svg class="a" style="left:292px;top:695px;" width="16" height="16" viewBox="0 0 16 16"><use href="#wordart"/></svg><svg class="a" style="left:316px;top:695px;" width="16" height="16" viewBox="0 0 16 16"><use href="#diagram"/></svg><svg class="a" style="left:340px;top:695px;" width="16" height="16" viewBox="0 0 16 16"><use href="#clipart"/></svg><svg class="a" style="left:363px;top:695px;" width="16" height="16" viewBox="0 0 16 16"><use href="#picture"/></svg><svg class="a" style="left:391px;top:695px;" width="16" height="16" viewBox="0 0 16 16"><use href="#fill"/></svg><svg class="a" style="left:425px;top:695px;" width="16" height="16" viewBox="0 0 16 16"><use href="#lcolor"/></svg><svg class="a" style="left:459px;top:695px;" width="16" height="16" viewBox="0 0 16 16"><use href="#fcolor"/></svg><svg class="a" style="left:492px;top:695px;" width="16" height="16" viewBox="0 0 16 16"><use href="#lstyle"/></svg><svg class="a" style="left:516px;top:695px;" width="16" height="16" viewBox="0 0 16 16"><use href="#dstyle"/></svg><svg class="a" style="left:539px;top:695px;" width="16" height="16" viewBox="0 0 16 16"><use href="#astyle"/></svg><svg class="a" style="left:562px;top:695px;" width="16" height="16" viewBox="0 0 16 16"><use href="#shadow"/></svg><svg class="a" style="left:585px;top:695px;" width="16" height="16" viewBox="0 0 16 16"><use href="#threed"/></svg><div class="a sep" style="left:384px;top:694px;width:1px;height:19px;"></div><svg class="a" style="left:413px;top:702px" width="5" height="3"><path d="M0 0H5L2.5 3z" fill="#000"/></svg><svg class="a" style="left:447px;top:702px" width="5" height="3"><path d="M0 0H5L2.5 3z" fill="#000"/></svg><svg class="a" style="left:481px;top:702px" width="5" height="3"><path d="M0 0H5L2.5 3z" fill="#000"/></svg><svg class="a" style="left:606px;top:707px" width="5" height="3"><path d="M0 0H5L2.5 3z" fill="#000"/></svg><div class="a" style="left:0px;top:717px;width:1024px;height:1px;background:#e8e6e0"></div><div class="a" style="left:4px;top:722px;width:189px;height:16px;border:1px solid;border-color:#a8a59c #f4f3ee #f4f3ee #a8a59c"></div><div class="a" style="left:197px;top:722px;width:164px;height:16px;border:1px solid;border-color:#a8a59c #f4f3ee #f4f3ee #a8a59c"></div><div class="a" style="left:365px;top:722px;width:26px;height:16px;border:1px solid;border-color:#a8a59c #f4f3ee #f4f3ee #a8a59c"></div><div class="a" style="left:396px;top:722px;width:25px;height:16px;border:1px solid;border-color:#a8a59c #f4f3ee #f4f3ee #a8a59c"></div><div class="a" style="left:426px;top:722px;width:25px;height:16px;border:1px solid;border-color:#a8a59c #f4f3ee #f4f3ee #a8a59c"></div><div class="a" style="left:456px;top:722px;width:25px;height:16px;border:1px solid;border-color:#a8a59c #f4f3ee #f4f3ee #a8a59c"></div><div class="a" style="left:486px;top:722px;width:66px;height:16px;border:1px solid;border-color:#a8a59c #f4f3ee #f4f3ee #a8a59c"></div><div class="a" style="left:557px;top:722px;width:45px;height:16px;border:1px solid;border-color:#a8a59c #f4f3ee #f4f3ee #a8a59c"></div><div class="a" style="left:606px;top:722px;width:37px;height:16px;border:1px solid;border-color:#a8a59c #f4f3ee #f4f3ee #a8a59c"></div><div class="a" style="left:648px;top:722px;width:28px;height:16px;border:1px solid;border-color:#a8a59c #f4f3ee #f4f3ee #a8a59c"></div><span class="t" style="left:10px;top:722.00px;font-size:11px;line-height:14px;letter-spacing:-0.274px;">Page  8</span><span class="t" style="left:78px;top:722.00px;font-size:11px;line-height:14px;letter-spacing:-0.364px;">Sec  1</span><span class="t" style="left:154px;top:722.00px;font-size:11px;line-height:14px;letter-spacing:0.148px;">8/20</span><span class="t" style="left:201px;top:722.00px;font-size:11px;line-height:14px;letter-spacing:0.287px;">At  3.2"</span><span class="t" style="left:264px;top:722.00px;font-size:11px;line-height:14px;letter-spacing:-0.093px;">Ln  2</span><span class="t" style="left:307.5px;top:722.00px;font-size:11px;line-height:14px;letter-spacing:-0.289px;">Col  1</span><span class="t" style="left:369px;top:722.00px;font-size:11px;line-height:14px;color:#9a978f;letter-spacing:-1.408px;">REC</span><span class="t" style="left:399px;top:722.00px;font-size:11px;line-height:14px;color:#9a978f;letter-spacing:-1.000px;">TRK</span><span class="t" style="left:429px;top:722.00px;font-size:11px;line-height:14px;color:#9a978f;letter-spacing:-0.798px;">EXT</span><span class="t" style="left:458px;top:722.00px;font-size:11px;line-height:14px;color:#9a978f;letter-spacing:-1.612px;">OVR</span><div class="a" style="left:486px;top:722px;width:66px;height:16px;overflow:hidden"><span class="t" style="left:3px;top:0.00px;font-size:11px;line-height:14px;letter-spacing:-0.095px;">English (U.S</span></div><svg class="a" style="left:568px;top:722px;" width="20" height="16" viewBox="0 0 20 16"><use href="#spellbook"/></svg><div class="a" style="left:0px;top:739px;width:1024px;height:29px;background:#d4d0c8;border-top:1px solid #fff"></div><div class="a raised" style="left:2px;top:742px;width:52px;height:22px;"></div><svg class="a" style="left:5px;top:746px;" width="16" height="16" viewBox="0 0 16 16"><use href="#tk_flag"/></svg><span class="t" style="left:21.5px;top:746.00px;font-size:11px;line-height:14px;font-weight:bold;letter-spacing:0.688px;">Start</span><div class="a raised" style="left:59px;top:742px;width:157px;height:22px;"></div><svg class="a" style="left:63px;top:746px;" width="18" height="16" viewBox="0 0 18 16"><use href="#tk_novell"/></svg><span class="t" style="left:82.5px;top:746.00px;font-size:11px;line-height:14px;letter-spacing:-0.039px;">Novell-delivered Applica...</span><div class="a raised" style="left:219px;top:742px;width:157px;height:22px;"></div><svg class="a" style="left:223px;top:746px;" width="16" height="16" viewBox="0 0 16 16"><use href="#tk_notes"/></svg><span class="t" style="left:242.5px;top:746.00px;font-size:11px;line-height:14px;letter-spacing:-0.115px;">NSCG draft web instrum...</span><div class="a dith" style="left:379px;top:742px;width:157px;height:22px;border:1px solid;border-color:#404040 #fff #fff #404040;box-shadow:inset 1px 1px 0 #808080"></div><svg class="a" style="left:384px;top:747px;" width="16" height="16" viewBox="0 0 16 16"><use href="#ff_fox"/></svg><span class="t" style="left:403.5px;top:747.00px;font-size:11px;line-height:14px;font-weight:bold;letter-spacing:0.116px;">NSCG - Mozilla Firefox</span><div class="a raised" style="left:539px;top:742px;width:157px;height:22px;"></div><svg class="a" style="left:543px;top:746px;" width="16" height="16" viewBox="0 0 16 16"><use href="#tk_folder"/></svg><span class="t" style="left:562.5px;top:746.00px;font-size:11px;line-height:14px;letter-spacing:-1.195px;">NSCG</span><div class="a raised" style="left:699px;top:742px;width:157px;height:22px;"></div><svg class="a" style="left:704px;top:746px;" width="16" height="16" viewBox="0 0 16 16"><use href="#tk_word"/></svg><span class="t" style="left:721.5px;top:746.00px;font-size:11px;line-height:14px;font-weight:bold;">3</span><span class="t" style="left:732.5px;top:746.00px;font-size:11px;line-height:14px;letter-spacing:-0.054px;">Microsoft Word</span><svg class="a" style="left:847px;top:753px" width="5" height="3"><path d="M0 0H5L2.5 3z" fill="#000"/></svg><svg class="a" style="left:867px;top:745px;" width="16" height="18" viewBox="0 0 16 18"><use href="#tk_mic"/></svg><svg class="a" style="left:890px;top:745px;" width="17" height="18" viewBox="0 0 17 18"><use href="#tk_lang"/></svg><div class="a sunk" style="left:909px;top:742px;width:113px;height:24px;"></div><span class="t" style="left:914px;top:746.00px;font-size:12px;line-height:15px;font-weight:bold;">«</span><svg class="a" style="left:926px;top:746px;" width="17" height="17" viewBox="0 0 17 17"><use href="#tk_oct"/></svg><svg class="a" style="left:944px;top:745px;" width="16" height="18" viewBox="0 0 16 18"><use href="#tk_net"/></svg><span class="t" style="left:968px;top:747.00px;font-size:11px;line-height:14px;letter-spacing:-0.260px;">12:45 PM</span></div><div class="win" style="left:1024px;top:0;width:1024px;height:768px"><div class="a" style="left:0px;top:0px;width:1024px;height:18px;background:linear-gradient(90deg,#0a246a,#3a5aa0 40%,#a6caf0)"></div><svg class="a" style="left:2px;top:1px;" width="16" height="16" viewBox="0 0 16 16"><use href="#ff_fox"/></svg><span class="t" style="left:19.5px;top:2.00px;font-size:11px;line-height:14px;font-weight:bold;color:#fff;letter-spacing:0.116px;">NSCG - Mozilla Firefox</span><div class="a cap" style="left:972px;top:2px;width:16px;height:14px;"></div><div class="a cap" style="left:988px;top:2px;width:16px;height:14px;"></div><div class="a cap" style="left:1006px;top:2px;width:16px;height:14px;"></div><div class="a" style="left:976px;top:11px;width:6px;height:2px;background:#000"></div><svg class="a" style="left:991px;top:4px;" width="10" height="10" viewBox="0 0 10 10"><path d="M2.5 1h6v5h-2M2.5 2h6" stroke="#000" fill="none"/><rect x=".5" y="4" width="6" height="5" fill="none" stroke="#000"/><path d="M.5 4.5h6" stroke="#000"/></svg><svg class="a" style="left:1010px;top:5px;" width="8" height="8" viewBox="0 0 8 8"><path d="M0 0l8 7M1 0l7 7M8 0l-8 7M7 0l-7 7" stroke="#000" stroke-width="1"/></svg><div class="a" style="left:0px;top:18px;width:1024px;height:1px;background:#808080"></div><div class="a" style="left:0px;top:19px;width:1024px;height:1px;background:#fff"></div><span class="t" style="left:7.5px;top:25.00px;font-size:11px;line-height:14px;letter-spacing:-0.556px;"><u>F</u>ile</span><span class="t" style="left:39.5px;top:25.00px;font-size:11px;line-height:14px;letter-spacing:-0.364px;"><u>E</u>dit</span><span class="t" style="left:73px;top:25.00px;font-size:11px;line-height:14px;letter-spacing:-0.411px;"><u>V</u>iew</span><span class="t" style="left:111px;top:25.00px;font-size:11px;line-height:14px;letter-spacing:-0.032px;">Hi<u>s</u>tory</span><span class="t" style="left:161px;top:25.00px;font-size:11px;line-height:14px;letter-spacing:-0.446px;"><u>B</u>ookmarks</span><span class="t" style="left:229px;top:25.00px;font-size:11px;line-height:14px;letter-spacing:-0.336px;"><u>T</u>ools</span><span class="t" style="left:269.5px;top:25.00px;font-size:11px;line-height:14px;letter-spacing:-0.531px;"><u>H</u>elp</span><svg class="a" style="left:1003px;top:24px;" width="16" height="16" viewBox="0 0 16 16"><use href="#ff_throb"/></svg><div class="a" style="left:0px;top:43px;width:1024px;height:1px;background:#808080"></div><div class="a" style="left:0px;top:44px;width:1024px;height:1px;background:#fff"></div><svg class="a" style="left:7px;top:51px;" width="24" height="24" viewBox="0 0 24 24"><use href="#ff_back"/></svg><svg class="a" style="left:39px;top:61px" width="5" height="3"><path d="M0 0H5L2.5 3z" fill="#000"/></svg><svg class="a" style="left:54px;top:51px;" width="24" height="24" viewBox="0 0 24 24"><use href="#ff_fwd"/></svg><svg class="a" style="left:86px;top:61px" width="5" height="3"><path d="M0 0H5L2.5 3z" fill="#a0a0a0"/></svg><svg class="a" style="left:100px;top:51px;" width="24" height="24" viewBox="0 0 24 24"><use href="#ff_reload"/></svg><svg class="a" style="left:137px;top:51px;" width="24" height="24" viewBox="0 0 24 24"><use href="#ff_stop"/></svg><svg class="a" style="left:173px;top:51px;" width="24" height="24" viewBox="0 0 24 24"><use href="#ff_home"/></svg><div class="a" style="left:205px;top:52px;width:585px;height:22px;border:1px solid #8e8f8f;border-radius:0 4px 4px 0;background:#d4d0c8"></div><div class="a" style="left:206px;top:53px;width:541px;height:20px;background:#fff"></div><div class="a" style="left:747px;top:53px;width:1px;height:20px;background:#a8a6a0"></div><div class="a" style="left:764px;top:53px;width:1px;height:20px;background:#a8a6a0"></div><svg class="a" style="left:752px;top:61px;" width="8" height="5" viewBox="0 0 8 5"><path d="M0 0h7l-3.5 4.5z" fill="#555"/></svg><svg class="a" style="left:769px;top:55px;" width="16" height="16" viewBox="0 0 16 16"><use href="#ff_go"/></svg><svg class="a" style="left:209px;top:55px;" width="16" height="16" viewBox="0 0 16 16"><use href="#ff_spartan"/></svg><span class="t" style="left:230.5px;top:57.00px;font-size:11px;line-height:14px;letter-spacing:-0.006px;">http://idc4.ssd.census.gov:4321/nscg/VerifyName</span><div class="a" style="left:798px;top:52px;width:222px;height:22px;border:1px solid #8e8f8f;border-radius:4px;background:#d4d0c8"></div><svg class="a" style="left:802px;top:55px;" width="16" height="16" viewBox="0 0 16 16"><use href="#ff_g"/></svg><svg class="a" style="left:820px;top:61px" width="5" height="3"><path d="M0 0H5L2.5 3z" fill="#000"/></svg><div class="a" style="left:829px;top:53px;width:164px;height:20px;background:#fff;border-left:1px solid #a8a6a0;border-right:1px solid #a8a6a0"></div><span class="t" style="left:833px;top:57.00px;font-size:11px;line-height:14px;color:#808080;letter-spacing:-0.495px;">Google</span><svg class="a" style="left:997px;top:54px;" width="18" height="18" viewBox="0 0 18 18"><use href="#ff_mag"/></svg><div class="a" style="left:0px;top:82px;width:1024px;height:1px;background:#808080"></div><div class="a" style="left:0px;top:83px;width:1024px;height:1px;background:#fff"></div><svg class="a" style="left:7px;top:88px;" width="16" height="16" viewBox="0 0 16 16"><use href="#ff_dino"/></svg><span class="t" style="left:27.5px;top:90.00px;font-size:11px;line-height:14px;letter-spacing:-0.032px;">Getting Started</span><svg class="a" style="left:110px;top:88px;" width="16" height="16" viewBox="0 0 16 16"><use href="#ff_rss"/></svg><span class="t" style="left:130px;top:90.00px;font-size:11px;line-height:14px;letter-spacing:-0.153px;">Latest Headlines</span><svg class="a" style="left:218px;top:88px;" width="16" height="16" viewBox="0 0 16 16"><use href="#ff_page"/></svg><span class="t" style="left:238px;top:90.00px;font-size:11px;line-height:14px;letter-spacing:0.019px;">Import to Mendeley</span><div class="a" style="left:0px;top:108px;width:1024px;height:1px;background:#8e8c86"></div><div class="a" style="left:0px;top:109px;width:1024px;height:26px;background:linear-gradient(#cfccc5,#c6c3bb)"></div><div class="a" style="left:4px;top:112px;width:199px;height:22px;background:linear-gradient(#e6e4de,#cdcac2);border:1px solid #9a9892;border-bottom:none;border-radius:4px 4px 0 0;box-shadow:inset 0 1px 0 #f4f3ef"></div><svg class="a" style="left:12px;top:116px;" width="16" height="16" viewBox="0 0 16 16"><use href="#ff_gmail"/></svg><span class="t" style="left:31px;top:117.00px;font-size:11px;line-height:14px;letter-spacing:0.059px;">Inbox (180) - 20romano@g...</span><svg class="a" style="left:181px;top:116px;" width="15" height="15" viewBox="0 0 15 15"><use href="#ff_tabx"/></svg><div class="a" style="left:205px;top:112px;width:198px;height:22px;background:linear-gradient(#e6e4de,#cdcac2);border:1px solid #9a9892;border-bottom:none;border-radius:4px 4px 0 0;box-shadow:inset 0 1px 0 #f4f3ef"></div><svg class="a" style="left:213px;top:116px;" width="16" height="16" viewBox="0 0 16 16"><use href="#ff_gcal"/></svg><span class="t" style="left:232px;top:117.00px;font-size:11px;line-height:14px;letter-spacing:-0.311px;">Google Calendar</span><svg class="a" style="left:381px;top:116px;" width="15" height="15" viewBox="0 0 15 15"><use href="#ff_tabx"/></svg><div class="a" style="left:405px;top:112px;width:199px;height:22px;background:linear-gradient(#e6e4de,#cdcac2);border:1px solid #9a9892;border-bottom:none;border-radius:4px 4px 0 0;box-shadow:inset 0 1px 0 #f4f3ef"></div><svg class="a" style="left:413px;top:116px;" width="16" height="16" viewBox="0 0 16 16"><use href="#ff_gmail"/></svg><span class="t" style="left:432px;top:117.00px;font-size:11px;line-height:14px;letter-spacing:0.042px;">Eye Street Mail - Inbox (2) -...</span><svg class="a" style="left:582px;top:116px;" width="15" height="15" viewBox="0 0 15 15"><use href="#ff_tabx"/></svg><div class="a" style="left:606px;top:112px;width:198px;height:22px;background:linear-gradient(#e6e4de,#cdcac2);border:1px solid #9a9892;border-bottom:none;border-radius:4px 4px 0 0;box-shadow:inset 0 1px 0 #f4f3ef"></div><svg class="a" style="left:614px;top:116px;" width="16" height="16" viewBox="0 0 16 16"><use href="#ff_page"/></svg><span class="t" style="left:633px;top:117.00px;font-size:11px;line-height:14px;letter-spacing:-0.210px;">Enrollment: Add Classes</span><svg class="a" style="left:782px;top:116px;" width="15" height="15" viewBox="0 0 15 15"><use href="#ff_tabx"/></svg><div class="a" style="left:806px;top:111px;width:199px;height:25px;background:linear-gradient(#f6f5f1,#e8e6e0);border:1px solid #8c8a84;border-bottom:none;border-radius:4px 4px 0 0"></div><svg class="a" style="left:813px;top:116px;" width="16" height="16" viewBox="0 0 16 16"><use href="#ff_spartan"/></svg><span class="t" style="left:833px;top:117.00px;font-size:11px;line-height:14px;font-weight:bold;letter-spacing:-0.695px;">NSCG</span><svg class="a" style="left:982px;top:116px;" width="15" height="15" viewBox="0 0 15 15"><use href="#ff_tabxr"/></svg><div class="a" style="left:1007px;top:112px;width:17px;height:22px;background:linear-gradient(#e4e2dc,#cdcac2);border:1px solid #a09e98;border-bottom:none;border-radius:4px 0 0 0"></div><svg class="a" style="left:1013px;top:122px" width="5" height="3"><path d="M0 0H5L2.5 3z" fill="#000"/></svg><div class="a" style="left:0px;top:134px;width:1024px;height:1px;background:#8c8a84"></div><div class="a" style="left:0px;top:135px;width:1024px;height:2px;background:#f0eee8"></div><div class="a" style="left:806px;top:134px;width:199px;height:2px;background:#e8e6e0"></div><div class="a" style="left:0px;top:746px;width:1024px;height:22px;background:#d4d0c8"></div><div class="a" style="left:0px;top:748px;width:967px;height:20px;border:1px solid;border-color:#808080 #fff #fff #808080"></div><div class="a" style="left:969px;top:748px;width:53px;height:20px;border:1px solid;border-color:#808080 #fff #fff #808080"></div><span class="t" style="left:7px;top:751.00px;font-size:11px;line-height:14px;letter-spacing:-0.199px;">Done</span><span class="t" style="left:972px;top:749.00px;font-size:14px;line-height:18px;letter-spacing:1.100px;"><span style="color:#b00000">z</span>otero</span><div class="a pagebg" style="left:0px;top:137px;width:1008px;height:609px;"></div><div class="a" style="left:26px;top:141px;width:956px;height:488px;background:#7a9496;border:1px solid #302e2c;box-shadow:0 0 1.5px .5px rgba(50,44,34,.75),1px 1px 1.5px rgba(40,36,28,.5),inset 0 0 0 1px rgba(255,255,255,.07)"></div><div class="a" style="left:27px;top:142px;width:954px;height:5px;background:linear-gradient(#6f898b,#7a9496)"></div><svg class="a" style="left:32px;top:147px;" width="944" height="159" viewBox="0 0 944 159"><use href="#art_banner"/><text x="35.9" y="59.8" font-size="17" font-weight="bold" font-family="Liberation Serif,serif" fill="#fff" textLength="38.7" lengthAdjust="spacingAndGlyphs">NSF</text></svg><span class="t" style="left:137.5px;top:175.00px;font-size:24px;line-height:30px;font-family:Liberation Serif,serif;color:#fff;letter-spacing:0.867px;text-shadow:1px 1px 1px rgba(60,40,20,.6);">National Science Foundation</span><span class="t" style="left:138px;top:205.50px;font-size:10.5px;line-height:13px;color:#e4dccb;letter-spacing:6.724px;">WHERE DISCOVERIES BEGIN</span><span class="t" style="left:280px;top:240.50px;font-size:18px;line-height:22px;font-weight:bold;font-family:Liberation Serif,serif;color:#fff;letter-spacing:1.182px;text-shadow:1px 1px 1px #000;">NATIONAL SURVEY OF COLLEGE GRADUATES</span><span class="t" style="left:82px;top:276.00px;font-size:22px;line-height:28px;font-weight:bold;color:#f2eec4;letter-spacing:-0.313px;">Save and Exit</span><span class="t" style="left:334.5px;top:276.00px;font-size:22px;line-height:28px;font-weight:bold;color:#f2eec4;letter-spacing:-0.635px;">Information</span><svg class="a" style="left:32px;top:342px;" width="944" height="43" viewBox="0 0 944 43"><path d="M0 1H204C214 1 218 28 256 33H0z" fill="url(#gTab)"/><path d="M0 1H204C214 1 218 28 256 33" fill="none" stroke="#5a5a48" stroke-width=".8" opacity=".5"/><rect y="32" width="258" height="1.5" fill="#a88830" opacity=".7"/><rect y="33" width="944" height="6" fill="#b3a06c"/><rect y="39" width="944" height="2" fill="#d9ccab"/><rect y="41" width="944" height="1.5" fill="#bfae86"/></svg><span class="t" style="left:37px;top:352.00px;font-size:16px;line-height:20px;font-weight:bold;letter-spacing:-0.051px;">Demographic Information</span><div class="a" style="left:32px;top:384px;width:944px;height:130px;background:#ece8c4;border-right:3px solid #000;border-bottom:3px solid #000;border-left:1px solid #f8f6e0"></div><span class="t" style="left:57.5px;top:394.00px;font-size:16px;line-height:20px;font-weight:bold;">Is your name MARY ANN PUBLIC?</span><svg class="a" style="left:78.5px;top:428px;" width="12" height="12" viewBox="0 0 12 12"><circle cx="6" cy="6" r="5" fill="#fff" stroke="#7a7a72" stroke-width="1"/><path d="M2.5 9.5A5 5 0 0 1 9.5 2.5" fill="none" stroke="#404040" stroke-width="1.2"/></svg><span class="t" style="left:94.5px;top:426.00px;font-size:16px;line-height:20px;color:#222;">Yes</span><svg class="a" style="left:78.5px;top:450px;" width="12" height="12" viewBox="0 0 12 12"><circle cx="6" cy="6" r="5" fill="#fff" stroke="#7a7a72" stroke-width="1"/><path d="M2.5 9.5A5 5 0 0 1 9.5 2.5" fill="none" stroke="#404040" stroke-width="1.2"/></svg><span class="t" style="left:94.5px;top:448.00px;font-size:16px;line-height:20px;color:#222;">Not exactly, correction needed</span><svg class="a" style="left:78.5px;top:472px;" width="12" height="12" viewBox="0 0 12 12"><circle cx="6" cy="6" r="5" fill="#fff" stroke="#7a7a72" stroke-width="1"/><path d="M2.5 9.5A5 5 0 0 1 9.5 2.5" fill="none" stroke="#404040" stroke-width="1.2"/></svg><span class="t" style="left:94.5px;top:470.00px;font-size:16px;line-height:20px;color:#222;">No</span><div class="a" style="left:49.5px;top:517px;width:93px;height:27.5px;border:1px solid #6e6a60;border-radius:14px;background:linear-gradient(#ddd3c3,#c9bda8 60%,#bfb39e);box-shadow:1px 1px 1px rgba(0,0,0,.35)"></div><span class="t" style="left:80.5px;top:523.00px;font-size:12.5px;line-height:16px;letter-spacing:-0.050px;">Next</span><span class="t" style="left:852.5px;top:567.00px;font-size:10px;line-height:12px;color:#fff;letter-spacing:0.104px;">Form Number: NSCG-1</span><span class="t" style="left:852.5px;top:578.00px;font-size:10px;line-height:12px;color:#fff;letter-spacing:0.250px;">OMB No.: 3145-0141</span><span class="t" style="left:852.5px;top:590.00px;font-size:10px;line-height:12px;color:#fff;letter-spacing:0.230px;">Approval Expires: 7/2011</span><span class="t" style="left:200px;top:643.00px;font-size:16px;line-height:20px;color:#fff;letter-spacing:-0.188px;text-decoration:underline;">Statement of Work</span><span class="t" style="left:653px;top:643.00px;font-size:16px;line-height:20px;color:#fff;letter-spacing:-0.184px;text-decoration:underline;">Privacy Policy</span><span class="t" style="left:410px;top:669.00px;font-size:18px;line-height:22px;font-style:italic;font-family:Liberation Serif,serif;color:#fff;letter-spacing:-0.005px;">Acting as Collection Agent</span><svg class="a" style="left:461px;top:689px;" width="82" height="82" viewBox="0 0 82 82"><use href="#art_seal"/><text font-size="6.8" font-weight="bold" font-family="Liberation Sans,sans-serif" fill="#222"><textPath href="#sealTop" startOffset="4" textLength="100">U.S. DEPARTMENT OF COMMERCE</textPath></text><text font-size="6.8" font-weight="bold" font-family="Liberation Sans,sans-serif" fill="#222"><textPath href="#sealBot" startOffset="16" textLength="84">BUREAU OF THE CENSUS</textPath></text></svg><div class="a dith" style="left:1008px;top:137px;width:16px;height:609px;"></div><div class="a sraised" style="left:1008px;top:137px;width:16px;height:16px;"></div><svg class="a" style="left:1012px;top:143px;" width="7" height="4" viewBox="0 0 7 4"><path d="M0 4h7l-3.5-4z" fill="#000"/></svg><div class="a sraised" style="left:1008px;top:153px;width:16px;height:560px;"></div><div class="a sraised" style="left:1008px;top:730px;width:16px;height:16px;"></div><svg class="a" style="left:1012px;top:736px;" width="7" height="4" viewBox="0 0 7 4"><path d="M0 0h7l-3.5 4z" fill="#000"/></svg></div></div><div class="a" style="left:77px;top:518px;width:2048px;height:130px;transform:scale(0.3232);transform-origin:0 0;overflow:hidden;background:#d4d0c8"><div class="win" style="left:0;top:0;width:1024px;height:768px"><div class="a" style="left:0px;top:0px;width:1024px;height:18px;background:linear-gradient(90deg,#808080,#a8a8a8 60%,#c0c0c0)"></div><svg class="a" style="left:2px;top:1px;" width="16" height="16" viewBox="0 0 16 16"><use href="#tk_wordico"/></svg><span class="t" style="left:19px;top:2.00px;font-size:11px;line-height:14px;font-weight:bold;color:#d4d0c8;letter-spacing:0.367px;">NCSG test plan 082409 - Microsoft Word</span><div class="a cap" style="left:972px;top:2px;width:16px;height:14px;"></div><div class="a cap" style="left:988px;top:2px;width:16px;height:14px;"></div><div class="a cap" style="left:1006px;top:2px;width:16px;height:14px;"></div><div class="a" style="left:976px;top:11px;width:6px;height:2px;background:#000"></div><svg class="a" style="left:991px;top:4px;" width="10" height="10" viewBox="0 0 10 10"><path d="M2.5 1h6v5h-2M2.5 2h6" stroke="#000" fill="none"/><rect x=".5" y="4" width="6" height="5" fill="none" stroke="#000"/><path d="M.5 4.5h6" stroke="#000"/></svg><svg class="a" style="left:1010px;top:5px;" width="8" height="8" viewBox="0 0 8 8"><path d="M0 0l8 7M1 0l7 7M8 0l-8 7M7 0l-7 7" stroke="#000" stroke-width="1"/></svg><div class="a grip" style="left:3px;top:24px;width:3px;height:14px;"></div><span class="t" style="left:16px;top:24.00px;font-size:11px;line-height:14px;letter-spacing:-0.431px;"><u>F</u>ile</span><span class="t" style="left:47.5px;top:24.00px;font-size:11px;line-height:14px;letter-spacing:-0.489px;"><u>E</u>dit</span><span class="t" style="left:82px;top:24.00px;font-size:11px;line-height:14px;letter-spacing:-0.411px;"><u>V</u>iew</span><span class="t" style="left:120px;top:24.00px;font-size:11px;line-height:14px;letter-spacing:0.082px;"><u>I</u>nsert</span><span class="t" style="left:164px;top:24.00px;font-size:11px;line-height:14px;letter-spacing:-0.140px;">F<u>o</u>rmat</span><span class="t" style="left:215px;top:24.00px;font-size:11px;line-height:14px;letter-spacing:-0.336px;"><u>T</u>ools</span><span class="t" style="left:256px;top:24.00px;font-size:11px;line-height:14px;letter-spacing:-0.259px;">T<u>a</u>ble</span><span class="t" style="left:298px;top:24.00px;font-size:11px;line-height:14px;letter-spacing:-0.354px;"><u>W</u>indow</span><span class="t" style="left:351.5px;top:24.00px;font-size:11px;line-height:14px;letter-spacing:-0.212px;"><u>M</u>endeley</span><span class="t" style="left:413.5px;top:24.00px;font-size:11px;line-height:14px;letter-spacing:-0.406px;"><u>H</u>elp</span><span class="t" style="left:451px;top:24.00px;font-size:11px;line-height:14px;letter-spacing:-0.540px;">Adob<u>e</u> PDF</span><span class="t" style="left:519.5px;top:24.00px;font-size:11px;line-height:14px;letter-spacing:-0.228px;">Acrobat <u>C</u>omments</span><div class="a" style="left:857px;top:22px;width:148px;height:18px;background:#fff"></div><span class="t" style="left:860px;top:23.00px;font-size:11px;line-height:14px;color:#808080;letter-spacing:-0.017px;">Type a question for help</span><div class="a" style="left:993px;top:23px;width:11px;height:16px;background:#d4d0c8"></div><svg class="a" style="left:996px;top:30px" width="5" height="3"><path d="M0 0H5L2.5 3z" fill="#000"/></svg><svg class="a" style="left:1010px;top:27px;" width="9" height="9" viewBox="0 0 9 9"><path d="M.5 .5l8 8M8.5 .5l-8 8" stroke="#000" stroke-width="1.5"/></svg><div class="a tb" style="left:292px;top:44px;width:721px;height:24px;"></div><div class="a grip" style="left:294px;top:48px;width:3px;height:15px;"></div><svg class="a" style="left:301px;top:49px;" width="16" height="16" viewBox="0 0 16 16"><use href="#styles"/></svg><div class="a" style="left:323px;top:47px;width:90px;height:18px;background:#fff"></div><div class="a" style="left:401px;top:48px;width:11px;height:16px;background:#d4d0c8"></div><svg class="a" style="left:404px;top:55px" width="5" height="3"><path d="M0 0H5L2.5 3z" fill="#000"/></svg><span class="t" style="left:325.5px;top:48.00px;font-size:11px;line-height:14px;color:#000;">Normal + Arial,</span><div class="a" style="left:415px;top:47px;width:111px;height:18px;background:#fff"></div><div class="a" style="left:514px;top:48px;width:11px;height:16px;background:#d4d0c8"></div><svg class="a" style="left:517px;top:55px" width="5" height="3"><path d="M0 0H5L2.5 3z" fill="#000"/></svg><span class="t" style="left:418px;top:48.00px;font-size:11px;line-height:14px;color:#000;">Arial</span><div class="a" style="left:527.5px;top:47px;width:37px;height:18px;background:#fff"></div><div class="a" style="left:552.5px;top:48px;width:11px;height:16px;background:#d4d0c8"></div><svg class="a" style="left:555.5px;top:55px" width="5" height="3"><path d="M0 0H5L2.5 3z" fill="#000"/></svg><span class="t" style="left:531px;top:48.00px;font-size:11px;line-height:14px;color:#000;">11</span><div class="a sep" style="left:567px;top:47px;width:1px;height:19px;"></div><span class="t" style="left:577px;top:48.00px;font-size:14px;line-height:18px;font-weight:bold;font-family:Liberation Serif,serif;color:#333;">B</span><span class="t" style="left:600px;top:48.00px;font-size:14px;line-height:18px;font-weight:bold;font-style:italic;font-family:Liberation Serif,serif;color:#444;">I</span><span class="t" style="left:622px;top:48.00px;font-size:13px;line-height:16px;font-weight:bold;font-family:Liberation Serif,serif;color:#444;text-decoration:underline;">U</span><div class="a sep" style="left:642px;top:47px;width:1px;height:19px;"></div><svg class="a" style="left:648px;top:49px;" width="16" height="16" viewBox="0 0 16 16"><use href="#al_l"/></svg><div class="a" style="left:669px;top:45px;width:23px;height:22px;border:1px solid #0a246a;background:#d4d5d8"></div><svg class="a" style="left:672px;top:49px;" width="16" height="16" viewBox="0 0 16 16"><use href="#al_c"/></svg><svg class="a" style="left:694px;top:49px;" width="16" height="16" viewBox="0 0 16 16"><use href="#al_r"/></svg><svg class="a" style="left:717px;top:49px;" width="16" height="16" viewBox="0 0 16 16"><use href="#al_j"/></svg><svg class="a" style="left:741px;top:49px;" width="16" height="16" viewBox="0 0 16 16"><use href="#al_d"/></svg><svg class="a" style="left:764px;top:49px;" width="16" height="16" viewBox="0 0 16 16"><use href="#lnsp"/></svg><svg class="a" style="left:786px;top:56px" width="5" height="3"><path d="M0 0H5L2.5 3z" fill="#000"/></svg><div class="a sep" style="left:797px;top:47px;width:1px;height:19px;"></div><svg class="a" style="left:803px;top:49px;" width="16" height="16" viewBox="0 0 16 16"><use href="#numlist"/></svg><svg class="a" style="left:826px;top:49px;" width="16" height="16" viewBox="0 0 16 16"><use href="#bullist"/></svg><svg class="a" style="left:850px;top:49px;" width="16" height="16" viewBox="0 0 16 16"><use href="#outdent"/></svg><svg class="a" style="left:873px;top:49px;" width="16" height="16" viewBox="0 0 16 16"><use href="#indent"/></svg><div class="a sep" style="left:895px;top:47px;width:1px;height:19px;"></div><svg class="a" style="left:903px;top:49px;" width="16" height="16" viewBox="0 0 16 16"><use href="#borders"/></svg><svg class="a" style="left:924px;top:56px" width="5" height="3"><path d="M0 0H5L2.5 3z" fill="#000"/></svg><svg class="a" style="left:936px;top:49px;" width="16" height="16" viewBox="0 0 16 16"><use href="#hilite"/></svg><svg class="a" style="left:958px;top:56px" width="5" height="3"><path d="M0 0H5L2.5 3z" fill="#000"/></svg><svg class="a" style="left:970px;top:49px;" width="16" height="16" viewBox="0 0 16 16"><use href="#fcolor"/></svg><svg class="a" style="left:992px;top:56px" width="5" height="3"><path d="M0 0H5L2.5 3z" fill="#000"/></svg><svg class="a" style="left:1004px;top:60px" width="5" height="3"><path d="M0 0H5L2.5 3z" fill="#000"/></svg><div class="a tb" style="left:2px;top:70px;width:64px;height:24px;"></div><div class="a grip" style="left:4px;top:74px;width:3px;height:15px;"></div><svg class="a" style="left:10px;top:74px;" width="16" height="16" viewBox="0 0 16 16"><use href="#pdf1"/></svg><svg class="a" style="left:34px;top:74px;" width="16" height="16" viewBox="0 0 16 16"><use href="#pdf2"/></svg><svg class="a" style="left:57px;top:86px" width="5" height="3"><path d="M0 0H5L2.5 3z" fill="#000"/></svg><div class="a tb" style="left:68px;top:70px;width:383px;height:24px;"></div><div class="a grip" style="left:70px;top:74px;width:3px;height:15px;"></div><svg class="a" style="left:78px;top:74px;" width="16" height="16" viewBox="0 0 16 16"><use href="#quote"/></svg><span class="t" style="left:96.5px;top:75.00px;font-size:11px;line-height:14px;letter-spacing:0.042px;">Insert Citation</span><svg class="a" style="left:173px;top:74px;" width="16" height="16" viewBox="0 0 16 16"><use href="#book"/></svg><span class="t" style="left:192px;top:75.00px;font-size:11px;line-height:14px;letter-spacing:-0.111px;">Insert Bibliography</span><svg class="a" style="left:290px;top:74px;" width="16" height="16" viewBox="0 0 16 16"><use href="#refresh"/></svg><span class="t" style="left:307.5px;top:75.00px;font-size:11px;line-height:14px;letter-spacing:-0.145px;">Refresh</span><div class="a" style="left:351px;top:73px;width:88px;height:18px;background:#fff"></div><div class="a" style="left:427px;top:74px;width:11px;height:16px;background:#d4d0c8"></div><svg class="a" style="left:430px;top:81px" width="5" height="3"><path d="M0 0H5L2.5 3z" fill="#000"/></svg><svg class="a" style="left:443px;top:86px" width="5" height="3"><path d="M0 0H5L2.5 3z" fill="#000"/></svg><div class="a tb" style="left:454px;top:70px;width:42px;height:24px;"></div><div class="a grip" style="left:456px;top:74px;width:3px;height:15px;"></div><svg class="a" style="left:464px;top:74px;" width="16" height="16" viewBox="0 0 16 16"><use href="#emailrev"/></svg><svg class="a" style="left:487px;top:86px" width="5" height="3"><path d="M0 0H5L2.5 3z" fill="#000"/></svg><div class="a tb" style="left:498px;top:70px;width:417px;height:24px;"></div><div class="a grip" style="left:500px;top:74px;width:3px;height:15px;"></div><div class="a" style="left:505px;top:73px;width:137px;height:18px;background:#fff"></div><div class="a" style="left:630px;top:74px;width:11px;height:16px;background:#d4d0c8"></div><svg class="a" style="left:633px;top:81px" width="5" height="3"><path d="M0 0H5L2.5 3z" fill="#000"/></svg><span class="t" style="left:508px;top:75.00px;font-size:11px;line-height:14px;letter-spacing:-0.341px;">Final Showing Markup</span><span class="t" style="left:646px;top:75.00px;font-size:11px;line-height:14px;letter-spacing:-0.379px;"><u>S</u>how</span><svg class="a" style="left:675px;top:81px" width="5" height="3"><path d="M0 0H5L2.5 3z" fill="#000"/></svg><div class="a sep" style="left:687px;top:73px;width:1px;height:19px;"></div><svg class="a" style="left:694px;top:74px;" width="16" height="16" viewBox="0 0 16 16"><use href="#revprev"/></svg><svg class="a" style="left:717px;top:74px;" width="16" height="16" viewBox="0 0 16 16"><use href="#revnext"/></svg><svg class="a" style="left:740px;top:74px;" width="16" height="16" viewBox="0 0 16 16"><use href="#revacc"/></svg><svg class="a" style="left:762px;top:81px" width="5" height="3"><path d="M0 0H5L2.5 3z" fill="#000"/></svg><svg class="a" style="left:773px;top:74px;" width="16" height="16" viewBox="0 0 16 16"><use href="#revrej"/></svg><svg class="a" style="left:796px;top:81px" width="5" height="3"><path d="M0 0H5L2.5 3z" fill="#000"/></svg><div class="a sep" style="left:807px;top:73px;width:1px;height:19px;"></div><svg class="a" style="left:814px;top:74px;" width="16" height="16" viewBox="0 0 16 16"><use href="#newcomm"/></svg><svg class="a" style="left:836px;top:81px" width="5" height="3"><path d="M0 0H5L2.5 3z" fill="#000"/></svg><div class="a sep" style="left:847px;top:73px;width:1px;height:19px;"></div><svg class="a" style="left:854px;top:74px;" width="16" height="16" viewBox="0 0 16 16"><use href="#track"/></svg><div class="a sep" style="left:876px;top:73px;width:1px;height:19px;"></div><svg class="a" style="left:883px;top:74px;" width="16" height="16" viewBox="0 0 16 16"><use href="#revpane"/></svg><svg class="a" style="left:906px;top:86px" width="5" height="3"><path d="M0 0H5L2.5 3z" fill="#000"/></svg><div class="a tb" style="left:7px;top:96px;width:641px;height:24px;"></div><div class="a grip" style="left:10px;top:100px;width:3px;height:15px;"></div><svg class="a" style="left:18px;top:100px;" width="16" height="16" viewBox="0 0 16 16"><use href="#new"/></svg><svg class="a" style="left:40px;top:100px;" width="16" height="16" viewBox="0 0 16 16"><use href="#open"/></svg><svg class="a" style="left:63px;top:100px;" width="16" height="16" viewBox="0 0 16 16"><use href="#save"/></svg><svg class="a" style="left:86px;top:100px;" width="16" height="16" viewBox="0 0 16 16"><use href="#perm"/></svg><svg class="a" style="left:115px;top:100px;" width="16" height="16" viewBox="0 0 16 16"><use href="#print"/></svg><svg class="a" style="left:137px;top:100px;" width="16" height="16" viewBox="0 0 16 16"><use href="#preview"/></svg><svg class="a" style="left:161px;top:100px;" width="16" height="16" viewBox="0 0 16 16"><use href="#spell"/></svg><svg class="a" style="left:190px;top:100px;" width="16" height="16" viewBox="0 0 16 16"><use href="#cut"/></svg><svg class="a" style="left:212px;top:100px;" width="16" height="16" viewBox="0 0 16 16"><use href="#copy"/></svg><svg class="a" style="left:235px;top:100px;" width="16" height="16" viewBox="0 0 16 16"><use href="#paste"/></svg><svg class="a" style="left:258px;top:100px;" width="16" height="16" viewBox="0 0 16 16"><use href="#painter"/></svg><svg class="a" style="left:288px;top:100px;" width="16" height="16" viewBox="0 0 16 16"><use href="#undo"/></svg><svg class="a" style="left:322px;top:100px;" width="16" height="16" viewBox="0 0 16 16"><use href="#redo"/></svg><svg class="a" style="left:362px;top:100px;" width="16" height="16" viewBox="0 0 16 16"><use href="#hlink"/></svg><svg class="a" style="left:386px;top:100px;" width="16" height="16" viewBox="0 0 16 16"><use href="#tblbord"/></svg><svg class="a" style="left:408px;top:100px;" width="16" height="16" viewBox="0 0 16 16"><use href="#instbl"/></svg><svg class="a" style="left:431px;top:100px;" width="16" height="16" viewBox="0 0 16 16"><use href="#excel"/></svg><svg class="a" style="left:454px;top:100px;" width="16" height="16" viewBox="0 0 16 16"><use href="#columns"/></svg><div class="a sep" style="left:108px;top:99px;width:1px;height:19px;"></div><div class="a sep" style="left:183px;top:99px;width:1px;height:19px;"></div><div class="a sep" style="left:281px;top:99px;width:1px;height:19px;"></div><div class="a sep" style="left:355px;top:99px;width:1px;height:19px;"></div><div class="a sep" style="left:499.5px;top:99px;width:1px;height:19px;"></div><svg class="a" style="left:310px;top:107px" width="5" height="3"><path d="M0 0H5L2.5 3z" fill="#000"/></svg><svg class="a" style="left:344px;top:107px" width="5" height="3"><path d="M0 0H5L2.5 3z" fill="#a0a0a0"/></svg><div class="a" style="left:474px;top:97px;width:23px;height:22px;border:1px solid #0a246a;background:#d4d5d8"></div><svg class="a" style="left:478px;top:100px;" width="16" height="16" viewBox="0 0 16 16"><use href="#drawing"/></svg><svg class="a" style="left:506px;top:100px;" width="16" height="16" viewBox="0 0 16 16"><use href="#docmap"/></svg><svg class="a" style="left:527px;top:100px;" width="16" height="16" viewBox="0 0 16 16"><use href="#para"/></svg><div class="a" style="left:549.5px;top:99px;width:62px;height:18px;background:#fff"></div><div class="a" style="left:599.5px;top:100px;width:11px;height:16px;background:#d4d0c8"></div><svg class="a" style="left:602.5px;top:107px" width="5" height="3"><path d="M0 0H5L2.5 3z" fill="#000"/></svg><span class="t" style="left:553px;top:100.00px;font-size:11px;line-height:14px;color:#000;">100%</span><svg class="a" style="left:618px;top:100px;" width="16" height="16" viewBox="0 0 16 16"><use href="#help"/></svg><svg class="a" style="left:640px;top:112px" width="5" height="3"><path d="M0 0H5L2.5 3z" fill="#000"/></svg></div><div class="win" style="left:1024px;top:0;width:1024px;height:768px"><div class="a" style="left:0px;top:0px;width:1024px;height:18px;background:linear-gradient(90deg,#0a246a,#3a5aa0 40%,#a6caf0)"></div><svg class="a" style="left:2px;top:1px;" width="16" height="16" viewBox="0 0 16 16"><use href="#ff_fox"/></svg><span class="t" style="left:19.5px;top:2.00px;font-size:11px;line-height:14px;font-weight:bold;color:#fff;letter-spacing:0.116px;">NSCG - Mozilla Firefox</span><div class="a cap" style="left:972px;top:2px;width:16px;height:14px;"></div><div class="a cap" style="left:988px;top:2px;width:16px;height:14px;"></div><div class="a cap" style="left:1006px;top:2px;width:16px;height:14px;"></div><div class="a" style="left:976px;top:11px;width:6px;height:2px;background:#000"></div><svg class="a" style="left:991px;top:4px;" width="10" height="10" viewBox="0 0 10 10"><path d="M2.5 1h6v5h-2M2.5 2h6" stroke="#000" fill="none"/><rect x=".5" y="4" width="6" height="5" fill="none" stroke="#000"/><path d="M.5 4.5h6" stroke="#000"/></svg><svg class="a" style="left:1010px;top:5px;" width="8" height="8" viewBox="0 0 8 8"><path d="M0 0l8 7M1 0l7 7M8 0l-8 7M7 0l-7 7" stroke="#000" stroke-width="1"/></svg><div class="a" style="left:0px;top:18px;width:1024px;height:1px;background:#808080"></div><div class="a" style="left:0px;top:19px;width:1024px;height:1px;background:#fff"></div><span class="t" style="left:7.5px;top:25.00px;font-size:11px;line-height:14px;letter-spacing:-0.556px;"><u>F</u>ile</span><span class="t" style="left:39.5px;top:25.00px;font-size:11px;line-height:14px;letter-spacing:-0.364px;"><u>E</u>dit</span><span class="t" style="left:73px;top:25.00px;font-size:11px;line-height:14px;letter-spacing:-0.411px;"><u>V</u>iew</span><span class="t" style="left:111px;top:25.00px;font-size:11px;line-height:14px;letter-spacing:-0.032px;">Hi<u>s</u>tory</span><span class="t" style="left:161px;top:25.00px;font-size:11px;line-height:14px;letter-spacing:-0.446px;"><u>B</u>ookmarks</span><span class="t" style="left:229px;top:25.00px;font-size:11px;line-height:14px;letter-spacing:-0.336px;"><u>T</u>ools</span><span class="t" style="left:269.5px;top:25.00px;font-size:11px;line-height:14px;letter-spacing:-0.531px;"><u>H</u>elp</span><svg class="a" style="left:1003px;top:24px;" width="16" height="16" viewBox="0 0 16 16"><use href="#ff_throb"/></svg><div class="a" style="left:0px;top:43px;width:1024px;height:1px;background:#808080"></div><div class="a" style="left:0px;top:44px;width:1024px;height:1px;background:#fff"></div><svg class="a" style="left:7px;top:51px;" width="24" height="24" viewBox="0 0 24 24"><use href="#ff_back"/></svg><svg class="a" style="left:39px;top:61px" width="5" height="3"><path d="M0 0H5L2.5 3z" fill="#000"/></svg><svg class="a" style="left:54px;top:51px;" width="24" height="24" viewBox="0 0 24 24"><use href="#ff_fwd"/></svg><svg class="a" style="left:86px;top:61px" width="5" height="3"><path d="M0 0H5L2.5 3z" fill="#a0a0a0"/></svg><svg class="a" style="left:100px;top:51px;" width="24" height="24" viewBox="0 0 24 24"><use href="#ff_reload"/></svg><svg class="a" style="left:137px;top:51px;" width="24" height="24" viewBox="0 0 24 24"><use href="#ff_stop"/></svg><svg class="a" style="left:173px;top:51px;" width="24" height="24" viewBox="0 0 24 24"><use href="#ff_home"/></svg><div class="a" style="left:205px;top:52px;width:585px;height:22px;border:1px solid #8e8f8f;border-radius:0 4px 4px 0;background:#d4d0c8"></div><div class="a" style="left:206px;top:53px;width:541px;height:20px;background:#fff"></div><div class="a" style="left:747px;top:53px;width:1px;height:20px;background:#a8a6a0"></div><div class="a" style="left:764px;top:53px;width:1px;height:20px;background:#a8a6a0"></div><svg class="a" style="left:752px;top:61px;" width="8" height="5" viewBox="0 0 8 5"><path d="M0 0h7l-3.5 4.5z" fill="#555"/></svg><svg class="a" style="left:769px;top:55px;" width="16" height="16" viewBox="0 0 16 16"><use href="#ff_go"/></svg><svg class="a" style="left:209px;top:55px;" width="16" height="16" viewBox="0 0 16 16"><use href="#ff_spartan"/></svg><span class="t" style="left:230.5px;top:57.00px;font-size:11px;line-height:14px;letter-spacing:-0.042px;">http://idc4.ssd.census.gov:4321/nscg/EUR</span><div class="a" style="left:798px;top:52px;width:222px;height:22px;border:1px solid #8e8f8f;border-radius:4px;background:#d4d0c8"></div><svg class="a" style="left:802px;top:55px;" width="16" height="16" viewBox="0 0 16 16"><use href="#ff_g"/></svg><svg class="a" style="left:820px;top:61px" width="5" height="3"><path d="M0 0H5L2.5 3z" fill="#000"/></svg><div class="a" style="left:829px;top:53px;width:164px;height:20px;background:#fff;border-left:1px solid #a8a6a0;border-right:1px solid #a8a6a0"></div><span class="t" style="left:833px;top:57.00px;font-size:11px;line-height:14px;color:#808080;letter-spacing:-0.495px;">Google</span><svg class="a" style="left:997px;top:54px;" width="18" height="18" viewBox="0 0 18 18"><use href="#ff_mag"/></svg><div class="a" style="left:0px;top:82px;width:1024px;height:1px;background:#808080"></div><div class="a" style="left:0px;top:83px;width:1024px;height:1px;background:#fff"></div><svg class="a" style="left:7px;top:88px;" width="16" height="16" viewBox="0 0 16 16"><use href="#ff_dino"/></svg><span class="t" style="left:27.5px;top:90.00px;font-size:11px;line-height:14px;letter-spacing:-0.032px;">Getting Started</span><svg class="a" style="left:110px;top:88px;" width="16" height="16" viewBox="0 0 16 16"><use href="#ff_rss"/></svg><span class="t" style="left:130px;top:90.00px;font-size:11px;line-height:14px;letter-spacing:-0.153px;">Latest Headlines</span><svg class="a" style="left:218px;top:88px;" width="16" height="16" viewBox="0 0 16 16"><use href="#ff_page"/></svg><span class="t" style="left:238px;top:90.00px;font-size:11px;line-height:14px;letter-spacing:0.019px;">Import to Mendeley</span><div class="a" style="left:0px;top:108px;width:1024px;height:1px;background:#8e8c86"></div><div class="a" style="left:0px;top:109px;width:1024px;height:26px;background:linear-gradient(#cfccc5,#c6c3bb)"></div><div class="a" style="left:4px;top:112px;width:199px;height:22px;background:linear-gradient(#e6e4de,#cdcac2);border:1px solid #9a9892;border-bottom:none;border-radius:4px 4px 0 0;box-shadow:inset 0 1px 0 #f4f3ef"></div><svg class="a" style="left:12px;top:116px;" width="16" height="16" viewBox="0 0 16 16"><use href="#ff_gmail"/></svg><span class="t" style="left:31px;top:117.00px;font-size:11px;line-height:14px;letter-spacing:0.059px;">Inbox (180) - 20romano@g...</span><svg class="a" style="left:181px;top:116px;" width="15" height="15" viewBox="0 0 15 15"><use href="#ff_tabx"/></svg><div class="a" style="left:205px;top:112px;width:198px;height:22px;background:linear-gradient(#e6e4de,#cdcac2);border:1px solid #9a9892;border-bottom:none;border-radius:4px 4px 0 0;box-shadow:inset 0 1px 0 #f4f3ef"></div><svg class="a" style="left:213px;top:116px;" width="16" height="16" viewBox="0 0 16 16"><use href="#ff_gcal"/></svg><span class="t" style="left:232px;top:117.00px;font-size:11px;line-height:14px;letter-spacing:-0.311px;">Google Calendar</span><svg class="a" style="left:381px;top:116px;" width="15" height="15" viewBox="0 0 15 15"><use href="#ff_tabx"/></svg><div class="a" style="left:405px;top:112px;width:199px;height:22px;background:linear-gradient(#e6e4de,#cdcac2);border:1px solid #9a9892;border-bottom:none;border-radius:4px 4px 0 0;box-shadow:inset 0 1px 0 #f4f3ef"></div><svg class="a" style="left:413px;top:116px;" width="16" height="16" viewBox="0 0 16 16"><use href="#ff_gmail"/></svg><span class="t" style="left:432px;top:117.00px;font-size:11px;line-height:14px;letter-spacing:0.042px;">Eye Street Mail - Inbox (2) -...</span><svg class="a" style="left:582px;top:116px;" width="15" height="15" viewBox="0 0 15 15"><use href="#ff_tabx"/></svg><div class="a" style="left:606px;top:112px;width:198px;height:22px;background:linear-gradient(#e6e4de,#cdcac2);border:1px solid #9a9892;border-bottom:none;border-radius:4px 4px 0 0;box-shadow:inset 0 1px 0 #f4f3ef"></div><svg class="a" style="left:614px;top:116px;" width="16" height="16" viewBox="0 0 16 16"><use href="#ff_page"/></svg><span class="t" style="left:633px;top:117.00px;font-size:11px;line-height:14px;letter-spacing:-0.210px;">Enrollment: Add Classes</span><svg class="a" style="left:782px;top:116px;" width="15" height="15" viewBox="0 0 15 15"><use href="#ff_tabx"/></svg><div class="a" style="left:806px;top:111px;width:199px;height:25px;background:linear-gradient(#f6f5f1,#e8e6e0);border:1px solid #8c8a84;border-bottom:none;border-radius:4px 4px 0 0"></div><svg class="a" style="left:813px;top:116px;" width="16" height="16" viewBox="0 0 16 16"><use href="#ff_spartan"/></svg><span class="t" style="left:833px;top:117.00px;font-size:11px;line-height:14px;font-weight:bold;letter-spacing:-0.695px;">NSCG</span><svg class="a" style="left:982px;top:116px;" width="15" height="15" viewBox="0 0 15 15"><use href="#ff_tabxr"/></svg><div class="a" style="left:1007px;top:112px;width:17px;height:22px;background:linear-gradient(#e4e2dc,#cdcac2);border:1px solid #a09e98;border-bottom:none;border-radius:4px 0 0 0"></div><svg class="a" style="left:1013px;top:122px" width="5" height="3"><path d="M0 0H5L2.5 3z" fill="#000"/></svg><div class="a" style="left:0px;top:134px;width:1024px;height:1px;background:#8c8a84"></div><div class="a" style="left:0px;top:135px;width:1024px;height:2px;background:#f0eee8"></div><div class="a" style="left:806px;top:134px;width:199px;height:2px;background:#e8e6e0"></div><div class="a" style="left:0px;top:746px;width:1024px;height:22px;background:#d4d0c8"></div><div class="a" style="left:0px;top:748px;width:967px;height:20px;border:1px solid;border-color:#808080 #fff #fff #808080"></div><div class="a" style="left:969px;top:748px;width:53px;height:20px;border:1px solid;border-color:#808080 #fff #fff #808080"></div><span class="t" style="left:7px;top:751.00px;font-size:11px;line-height:14px;letter-spacing:-0.199px;">Done</span><span class="t" style="left:972px;top:749.00px;font-size:14px;line-height:18px;letter-spacing:1.100px;"><span style="color:#b00000">z</span>otero</span></div></div></div><div class="a" style="left:995px;top:127px;width:3px;height:546px;background:#000"></div><div class="a" style="left:998px;top:127px;width:8px;height:546px;background:#808080"></div><div class="a" style="left:1006px;top:123px;width:16px;height:5px;background:#fff;border:1px solid;border-color:#fff #000 #000 #fff"></div><div class="a dith" style="left:1006px;top:128px;width:16px;height:545px;"></div><div class="a sraised" style="left:1006px;top:128px;width:16px;height:16px;"></div><svg class="a" style="left:1010px;top:134px;" width="7" height="4" viewBox="0 0 7 4"><path d="M0 4h7l-3.5-4z" fill="#000"/></svg><div class="a sraised" style="left:1006px;top:331px;width:16px;height:13px;"></div><div class="a sraised" style="left:1006px;top:609px;width:16px;height:16px;"></div><svg class="a" style="left:1010px;top:615px;" width="7" height="4" viewBox="0 0 7 4"><path d="M0 0h7l-3.5 4z" fill="#000"/></svg><div class="a" style="left:1006px;top:625px;width:16px;height:48px;background:#d4d0c8"></div><svg class="a" style="left:1010px;top:630px;" width="7" height="7" viewBox="0 0 7 7"><path d="M1 3h5l-2.5-3zM0 6.5h7l-3.5-3.5z" fill="#000"/><path d="M1 3.5h5" stroke="#000"/></svg><svg class="a" style="left:1009px;top:644px;" width="9" height="9" viewBox="0 0 9 9"><circle cx="4.5" cy="4.5" r="3.5" fill="url(#gBall)" stroke="#333" stroke-width=".8"/></svg><svg class="a" style="left:1010px;top:661px;" width="7" height="7" viewBox="0 0 7 7"><path d="M0 0h7l-3.5 3.5zM1 4h5l-2.5 3z" fill="#000"/><path d="M1 3.5h5" stroke="#000"/></svg><div class="a" style="left:2px;top:673px;width:1004px;height:16px;background:#d4d0c8"></div><svg class="a" style="left:5px;top:676px;" width="16" height="16" viewBox="0 0 16 16"><use href="#v_normal"/></svg><svg class="a" style="left:21px;top:677px;" width="16" height="16" viewBox="0 0 16 16"><use href="#v_web"/></svg><div class="a" style="left:34px;top:673px;width:17px;height:16px;border:1px solid #0a246a;background:#d4d5d8"></div><svg class="a" style="left:37px;top:676px;" width="16" height="16" viewBox="0 0 16 16"><use href="#v_print"/></svg><svg class="a" style="left:53px;top:676px;" width="16" height="16" viewBox="0 0 16 16"><use href="#v_outline"/></svg><div class="a dith" style="left:66px;top:673px;width:940px;height:16px;"></div><div class="a sraised" style="left:66px;top:673px;width:16px;height:16px;"></div><svg class="a" style="left:71px;top:677px;" width="4" height="7" viewBox="0 0 4 7"><path d="M4 0v7l-4-3.5z" fill="#000"/></svg><div class="a sraised" style="left:91px;top:673px;width:889px;height:16px;"></div><div class="a sraised" style="left:990px;top:673px;width:16px;height:16px;"></div><svg class="a" style="left:996px;top:677px;" width="4" height="7" viewBox="0 0 4 7"><path d="M0 0v7l4-3.5z" fill="#000"/></svg><div class="a" style="left:1006px;top:673px;width:16px;height:16px;background:#d4d0c8"></div><div class="a" style="left:0px;top:689px;width:1023px;height:1px;background:#fff"></div><div class="a" style="left:1023px;top:19px;width:1px;height:721px;background:#fff"></div><div class="a tb" style="left:2px;top:691px;width:615px;height:25px;"></div><div class="a grip" style="left:4px;top:695px;width:3px;height:15px;"></div><span class="t" style="left:10px;top:697.00px;font-size:11px;line-height:14px;letter-spacing:-0.167px;">D<u>r</u>aw</span><svg class="a" style="left:39px;top:703px" width="5" height="3"><path d="M0 0H5L2.5 3z" fill="#000"/></svg><svg class="a" style="left:54px;top:695px;" width="16" height="16" viewBox="0 0 16 16"><use href="#cursor"/></svg><div class="a sep" style="left:74px;top:694px;width:1px;height:19px;"></div><span class="t" style="left:80.5px;top:697.00px;font-size:11px;line-height:14px;letter-spacing:-0.244px;">A<u>u</u>toShapes</span><svg class="a" style="left:141px;top:703px" width="5" height="3"><path d="M0 0H5L2.5 3z" fill="#000"/></svg><svg class="a" style="left:155px;top:695px;" width="16" height="16" viewBox="0 0 16 16"><use href="#line"/></svg><svg class="a" style="left:180px;top:695px;" width="16" height="16" viewBox="0 0 16 16"><use href="#arrowi"/></svg><svg class="a" style="left:201px;top:695px;" width="16" height="16" viewBox="0 0 16 16"><use href="#rect"/></svg><svg class="a" style="left:224px;top:695px;" width="16" height="16" viewBox="0 0 16 16"><use href="#oval"/></svg><svg class="a" style="left:247px;top:695px;" width="16" height="16" viewBox="0 0 16 16"><use href="#textbox"/></svg><svg class="a" style="left:270px;top:695px;" width="16" height="16" viewBox="0 0 16 16"><use href="#vtextbox"/></svg><svg class="a" style="left:292px;top:695px;" width="16" height="16" viewBox="0 0 16 16"><use href="#wordart"/></svg><svg class="a" style="left:316px;top:695px;" width="16" height="16" viewBox="0 0 16 16"><use href="#diagram"/></svg><svg class="a" style="left:340px;top:695px;" width="16" height="16" viewBox="0 0 16 16"><use href="#clipart"/></svg><svg class="a" style="left:363px;top:695px;" width="16" height="16" viewBox="0 0 16 16"><use href="#picture"/></svg><svg class="a" style="left:391px;top:695px;" width="16" height="16" viewBox="0 0 16 16"><use href="#fill"/></svg><svg class="a" style="left:425px;top:695px;" width="16" height="16" viewBox="0 0 16 16"><use href="#lcolor"/></svg><svg class="a" style="left:459px;top:695px;" width="16" height="16" viewBox="0 0 16 16"><use href="#fcolor"/></svg><svg class="a" style="left:492px;top:695px;" width="16" height="16" viewBox="0 0 16 16"><use href="#lstyle"/></svg><svg class="a" style="left:516px;top:695px;" width="16" height="16" viewBox="0 0 16 16"><use href="#dstyle"/></svg><svg class="a" style="left:539px;top:695px;" width="16" height="16" viewBox="0 0 16 16"><use href="#astyle"/></svg><svg class="a" style="left:562px;top:695px;" width="16" height="16" viewBox="0 0 16 16"><use href="#shadow"/></svg><svg class="a" style="left:585px;top:695px;" width="16" height="16" viewBox="0 0 16 16"><use href="#threed"/></svg><div class="a sep" style="left:384px;top:694px;width:1px;height:19px;"></div><svg class="a" style="left:413px;top:702px" width="5" height="3"><path d="M0 0H5L2.5 3z" fill="#000"/></svg><svg class="a" style="left:447px;top:702px" width="5" height="3"><path d="M0 0H5L2.5 3z" fill="#000"/></svg><svg class="a" style="left:481px;top:702px" width="5" height="3"><path d="M0 0H5L2.5 3z" fill="#000"/></svg><svg class="a" style="left:606px;top:707px" width="5" height="3"><path d="M0 0H5L2.5 3z" fill="#000"/></svg><div class="a" style="left:0px;top:717px;width:1024px;height:1px;background:#e8e6e0"></div><div class="a" style="left:4px;top:722px;width:189px;height:16px;border:1px solid;border-color:#a8a59c #f4f3ee #f4f3ee #a8a59c"></div><div class="a" style="left:197px;top:722px;width:164px;height:16px;border:1px solid;border-color:#a8a59c #f4f3ee #f4f3ee #a8a59c"></div><div class="a" style="left:365px;top:722px;width:26px;height:16px;border:1px solid;border-color:#a8a59c #f4f3ee #f4f3ee #a8a59c"></div><div class="a" style="left:396px;top:722px;width:25px;height:16px;border:1px solid;border-color:#a8a59c #f4f3ee #f4f3ee #a8a59c"></div><div class="a" style="left:426px;top:722px;width:25px;height:16px;border:1px solid;border-color:#a8a59c #f4f3ee #f4f3ee #a8a59c"></div><div class="a" style="left:456px;top:722px;width:25px;height:16px;border:1px solid;border-color:#a8a59c #f4f3ee #f4f3ee #a8a59c"></div><div class="a" style="left:486px;top:722px;width:66px;height:16px;border:1px solid;border-color:#a8a59c #f4f3ee #f4f3ee #a8a59c"></div><div class="a" style="left:557px;top:722px;width:45px;height:16px;border:1px solid;border-color:#a8a59c #f4f3ee #f4f3ee #a8a59c"></div><div class="a" style="left:606px;top:722px;width:37px;height:16px;border:1px solid;border-color:#a8a59c #f4f3ee #f4f3ee #a8a59c"></div><div class="a" style="left:648px;top:722px;width:28px;height:16px;border:1px solid;border-color:#a8a59c #f4f3ee #f4f3ee #a8a59c"></div><span class="t" style="left:10px;top:722.00px;font-size:11px;line-height:14px;letter-spacing:-0.274px;">Page  9</span><span class="t" style="left:78px;top:722.00px;font-size:11px;line-height:14px;letter-spacing:-0.364px;">Sec  1</span><span class="t" style="left:154px;top:722.00px;font-size:11px;line-height:14px;letter-spacing:0.148px;">9/20</span><span class="t" style="left:201px;top:722.00px;font-size:11px;line-height:14px;letter-spacing:0.287px;">At  5.9"</span><span class="t" style="left:264px;top:722.00px;font-size:11px;line-height:14px;letter-spacing:-0.093px;">Ln  3</span><span class="t" style="left:307.5px;top:722.00px;font-size:11px;line-height:14px;letter-spacing:-0.289px;">Col  1</span><span class="t" style="left:369px;top:722.00px;font-size:11px;line-height:14px;color:#9a978f;letter-spacing:-1.408px;">REC</span><span class="t" style="left:399px;top:722.00px;font-size:11px;line-height:14px;color:#9a978f;letter-spacing:-1.000px;">TRK</span><span class="t" style="left:429px;top:722.00px;font-size:11px;line-height:14px;color:#9a978f;letter-spacing:-0.798px;">EXT</span><span class="t" style="left:458px;top:722.00px;font-size:11px;line-height:14px;color:#9a978f;letter-spacing:-1.612px;">OVR</span><div class="a" style="left:486px;top:722px;width:66px;height:16px;overflow:hidden"><span class="t" style="left:3px;top:0.00px;font-size:11px;line-height:14px;letter-spacing:-0.095px;">English (U.S</span></div><svg class="a" style="left:568px;top:722px;" width="20" height="16" viewBox="0 0 20 16"><use href="#spellbook"/></svg><div class="a" style="left:0px;top:739px;width:1024px;height:29px;background:#d4d0c8;border-top:1px solid #fff"></div><div class="a raised" style="left:2px;top:742px;width:52px;height:22px;"></div><svg class="a" style="left:5px;top:746px;" width="16" height="16" viewBox="0 0 16 16"><use href="#tk_flag"/></svg><span class="t" style="left:21.5px;top:746.00px;font-size:11px;line-height:14px;font-weight:bold;letter-spacing:0.688px;">Start</span><div class="a raised" style="left:59px;top:742px;width:157px;height:22px;"></div><svg class="a" style="left:63px;top:746px;" width="18" height="16" viewBox="0 0 18 16"><use href="#tk_novell"/></svg><span class="t" style="left:82.5px;top:746.00px;font-size:11px;line-height:14px;letter-spacing:-0.039px;">Novell-delivered Applica...</span><div class="a raised" style="left:219px;top:742px;width:157px;height:22px;"></div><svg class="a" style="left:223px;top:746px;" width="16" height="16" viewBox="0 0 16 16"><use href="#tk_notes"/></svg><span class="t" style="left:242.5px;top:746.00px;font-size:11px;line-height:14px;letter-spacing:-0.115px;">NSCG draft web instrum...</span><div class="a dith" style="left:379px;top:742px;width:157px;height:22px;border:1px solid;border-color:#404040 #fff #fff #404040;box-shadow:inset 1px 1px 0 #808080"></div><svg class="a" style="left:384px;top:747px;" width="16" height="16" viewBox="0 0 16 16"><use href="#ff_fox"/></svg><span class="t" style="left:403.5px;top:747.00px;font-size:11px;line-height:14px;font-weight:bold;letter-spacing:0.116px;">NSCG - Mozilla Firefox</span><div class="a raised" style="left:539px;top:742px;width:157px;height:22px;"></div><svg class="a" style="left:543px;top:746px;" width="16" height="16" viewBox="0 0 16 16"><use href="#tk_folder"/></svg><span class="t" style="left:562.5px;top:746.00px;font-size:11px;line-height:14px;letter-spacing:-1.195px;">NSCG</span><div class="a raised" style="left:699px;top:742px;width:157px;height:22px;"></div><svg class="a" style="left:704px;top:746px;" width="16" height="16" viewBox="0 0 16 16"><use href="#tk_word"/></svg><span class="t" style="left:721.5px;top:746.00px;font-size:11px;line-height:14px;font-weight:bold;">3</span><span class="t" style="left:732.5px;top:746.00px;font-size:11px;line-height:14px;letter-spacing:-0.054px;">Microsoft Word</span><svg class="a" style="left:847px;top:753px" width="5" height="3"><path d="M0 0H5L2.5 3z" fill="#000"/></svg><svg class="a" style="left:867px;top:745px;" width="16" height="18" viewBox="0 0 16 18"><use href="#tk_mic"/></svg><svg class="a" style="left:890px;top:745px;" width="17" height="18" viewBox="0 0 17 18"><use href="#tk_lang"/></svg><div class="a sunk" style="left:909px;top:742px;width:113px;height:24px;"></div><span class="t" style="left:914px;top:746.00px;font-size:12px;line-height:15px;font-weight:bold;">«</span><svg class="a" style="left:926px;top:746px;" width="17" height="17" viewBox="0 0 17 17"><use href="#tk_oct"/></svg><svg class="a" style="left:944px;top:745px;" width="16" height="18" viewBox="0 0 16 18"><use href="#tk_net"/></svg><span class="t" style="left:968px;top:747.00px;font-size:11px;line-height:14px;letter-spacing:-0.260px;">12:45 PM</span></div><div class="win top" style="left:1024px;top:0;width:1024px;height:768px"><div class="a" style="left:0px;top:0px;width:1024px;height:18px;background:linear-gradient(90deg,#0a246a,#3a5aa0 40%,#a6caf0)"></div><svg class="a" style="left:2px;top:1px;" width="16" height="16" viewBox="0 0 16 16"><use href="#ff_fox"/></svg><span class="t" style="left:19.5px;top:2.00px;font-size:11px;line-height:14px;font-weight:bold;color:#fff;letter-spacing:0.116px;">NSCG - Mozilla Firefox</span><div class="a cap" style="left:972px;top:2px;width:16px;height:14px;"></div><div class="a cap" style="left:988px;top:2px;width:16px;height:14px;"></div><div class="a cap" style="left:1006px;top:2px;width:16px;height:14px;"></div><div class="a" style="left:976px;top:11px;width:6px;height:2px;background:#000"></div><svg class="a" style="left:991px;top:4px;" width="10" height="10" viewBox="0 0 10 10"><path d="M2.5 1h6v5h-2M2.5 2h6" stroke="#000" fill="none"/><rect x=".5" y="4" width="6" height="5" fill="none" stroke="#000"/><path d="M.5 4.5h6" stroke="#000"/></svg><svg class="a" style="left:1010px;top:5px;" width="8" height="8" viewBox="0 0 8 8"><path d="M0 0l8 7M1 0l7 7M8 0l-8 7M7 0l-7 7" stroke="#000" stroke-width="1"/></svg><div class="a" style="left:0px;top:18px;width:1024px;height:1px;background:#808080"></div><div class="a" style="left:0px;top:19px;width:1024px;height:1px;background:#fff"></div><span class="t" style="left:7.5px;top:25.00px;font-size:11px;line-height:14px;letter-spacing:-0.556px;"><u>F</u>ile</span><span class="t" style="left:39.5px;top:25.00px;font-size:11px;line-height:14px;letter-spacing:-0.364px;"><u>E</u>dit</span><span class="t" style="left:73px;top:25.00px;font-size:11px;line-height:14px;letter-spacing:-0.411px;"><u>V</u>iew</span><span class="t" style="left:111px;top:25.00px;font-size:11px;line-height:14px;letter-spacing:-0.032px;">Hi<u>s</u>tory</span><span class="t" style="left:161px;top:25.00px;font-size:11px;line-height:14px;letter-spacing:-0.446px;"><u>B</u>ookmarks</span><span class="t" style="left:229px;top:25.00px;font-size:11px;line-height:14px;letter-spacing:-0.336px;"><u>T</u>ools</span><span class="t" style="left:269.5px;top:25.00px;font-size:11px;line-height:14px;letter-spacing:-0.531px;"><u>H</u>elp</span><svg class="a" style="left:1003px;top:24px;" width="16" height="16" viewBox="0 0 16 16"><use href="#ff_throb"/></svg><div class="a" style="left:0px;top:43px;width:1024px;height:1px;background:#808080"></div><div class="a" style="left:0px;top:44px;width:1024px;height:1px;background:#fff"></div><svg class="a" style="left:7px;top:51px;" width="24" height="24" viewBox="0 0 24 24"><use href="#ff_back"/></svg><svg class="a" style="left:39px;top:61px" width="5" height="3"><path d="M0 0H5L2.5 3z" fill="#000"/></svg><svg class="a" style="left:54px;top:51px;" width="24" height="24" viewBox="0 0 24 24"><use href="#ff_fwd"/></svg><svg class="a" style="left:86px;top:61px" width="5" height="3"><path d="M0 0H5L2.5 3z" fill="#a0a0a0"/></svg><svg class="a" style="left:100px;top:51px;" width="24" height="24" viewBox="0 0 24 24"><use href="#ff_reload"/></svg><svg class="a" style="left:137px;top:51px;" width="24" height="24" viewBox="0 0 24 24"><use href="#ff_stop"/></svg><svg class="a" style="left:173px;top:51px;" width="24" height="24" viewBox="0 0 24 24"><use href="#ff_home"/></svg><div class="a" style="left:205px;top:52px;width:585px;height:22px;border:1px solid #8e8f8f;border-radius:0 4px 4px 0;background:#d4d0c8"></div><div class="a" style="left:206px;top:53px;width:541px;height:20px;background:#fff"></div><div class="a" style="left:747px;top:53px;width:1px;height:20px;background:#a8a6a0"></div><div class="a" style="left:764px;top:53px;width:1px;height:20px;background:#a8a6a0"></div><svg class="a" style="left:752px;top:61px;" width="8" height="5" viewBox="0 0 8 5"><path d="M0 0h7l-3.5 4.5z" fill="#555"/></svg><svg class="a" style="left:769px;top:55px;" width="16" height="16" viewBox="0 0 16 16"><use href="#ff_go"/></svg><svg class="a" style="left:209px;top:55px;" width="16" height="16" viewBox="0 0 16 16"><use href="#ff_spartan"/></svg><span class="t" style="left:230.5px;top:57.00px;font-size:11px;line-height:14px;letter-spacing:0.031px;">http://idc4.ssd.census.gov:4321/nscg/VerifySchoolA</span><div class="a" style="left:798px;top:52px;width:222px;height:22px;border:1px solid #8e8f8f;border-radius:4px;background:#d4d0c8"></div><svg class="a" style="left:802px;top:55px;" width="16" height="16" viewBox="0 0 16 16"><use href="#ff_g"/></svg><svg class="a" style="left:820px;top:61px" width="5" height="3"><path d="M0 0H5L2.5 3z" fill="#000"/></svg><div class="a" style="left:829px;top:53px;width:164px;height:20px;background:#fff;border-left:1px solid #a8a6a0;border-right:1px solid #a8a6a0"></div><span class="t" style="left:833px;top:57.00px;font-size:11px;line-height:14px;color:#808080;letter-spacing:-0.495px;">Google</span><svg class="a" style="left:997px;top:54px;" width="18" height="18" viewBox="0 0 18 18"><use href="#ff_mag"/></svg><div class="a" style="left:0px;top:82px;width:1024px;height:1px;background:#808080"></div><div class="a" style="left:0px;top:83px;width:1024px;height:1px;background:#fff"></div><svg class="a" style="left:7px;top:88px;" width="16" height="16" viewBox="0 0 16 16"><use href="#ff_dino"/></svg><span class="t" style="left:27.5px;top:90.00px;font-size:11px;line-height:14px;letter-spacing:-0.032px;">Getting Started</span><svg class="a" style="left:110px;top:88px;" width="16" height="16" viewBox="0 0 16 16"><use href="#ff_rss"/></svg><span class="t" style="left:130px;top:90.00px;font-size:11px;line-height:14px;letter-spacing:-0.153px;">Latest Headlines</span><svg class="a" style="left:218px;top:88px;" width="16" height="16" viewBox="0 0 16 16"><use href="#ff_page"/></svg><span class="t" style="left:238px;top:90.00px;font-size:11px;line-height:14px;letter-spacing:0.019px;">Import to Mendeley</span><div class="a" style="left:0px;top:108px;width:1024px;height:1px;background:#8e8c86"></div><div class="a" style="left:0px;top:109px;width:1024px;height:26px;background:linear-gradient(#cfccc5,#c6c3bb)"></div><div class="a" style="left:4px;top:112px;width:199px;height:22px;background:linear-gradient(#e6e4de,#cdcac2);border:1px solid #9a9892;border-bottom:none;border-radius:4px 4px 0 0;box-shadow:inset 0 1px 0 #f4f3ef"></div><svg class="a" style="left:12px;top:116px;" width="16" height="16" viewBox="0 0 16 16"><use href="#ff_gmail"/></svg><span class="t" style="left:31px;top:117.00px;font-size:11px;line-height:14px;letter-spacing:0.059px;">Inbox (184) - 20romano@g...</span><svg class="a" style="left:181px;top:116px;" width="15" height="15" viewBox="0 0 15 15"><use href="#ff_tabx"/></svg><div class="a" style="left:205px;top:112px;width:198px;height:22px;background:linear-gradient(#e6e4de,#cdcac2);border:1px solid #9a9892;border-bottom:none;border-radius:4px 4px 0 0;box-shadow:inset 0 1px 0 #f4f3ef"></div><svg class="a" style="left:213px;top:116px;" width="16" height="16" viewBox="0 0 16 16"><use href="#ff_gcal"/></svg><span class="t" style="left:232px;top:117.00px;font-size:11px;line-height:14px;letter-spacing:-0.311px;">Google Calendar</span><svg class="a" style="left:381px;top:116px;" width="15" height="15" viewBox="0 0 15 15"><use href="#ff_tabx"/></svg><div class="a" style="left:405px;top:112px;width:199px;height:22px;background:linear-gradient(#e6e4de,#cdcac2);border:1px solid #9a9892;border-bottom:none;border-radius:4px 4px 0 0;box-shadow:inset 0 1px 0 #f4f3ef"></div><svg class="a" style="left:413px;top:116px;" width="16" height="16" viewBox="0 0 16 16"><use href="#ff_gmail"/></svg><span class="t" style="left:432px;top:117.00px;font-size:11px;line-height:14px;letter-spacing:0.042px;">Eye Street Mail - Inbox (2) -...</span><svg class="a" style="left:582px;top:116px;" width="15" height="15" viewBox="0 0 15 15"><use href="#ff_tabx"/></svg><div class="a" style="left:606px;top:112px;width:198px;height:22px;background:linear-gradient(#e6e4de,#cdcac2);border:1px solid #9a9892;border-bottom:none;border-radius:4px 4px 0 0;box-shadow:inset 0 1px 0 #f4f3ef"></div><svg class="a" style="left:614px;top:116px;" width="16" height="16" viewBox="0 0 16 16"><use href="#ff_page"/></svg><span class="t" style="left:633px;top:117.00px;font-size:11px;line-height:14px;letter-spacing:-0.210px;">Enrollment: Add Classes</span><svg class="a" style="left:782px;top:116px;" width="15" height="15" viewBox="0 0 15 15"><use href="#ff_tabx"/></svg><div class="a" style="left:806px;top:111px;width:199px;height:25px;background:linear-gradient(#f6f5f1,#e8e6e0);border:1px solid #8c8a84;border-bottom:none;border-radius:4px 4px 0 0"></div><svg class="a" style="left:813px;top:116px;" width="16" height="16" viewBox="0 0 16 16"><use href="#ff_spartan"/></svg><span class="t" style="left:833px;top:117.00px;font-size:11px;line-height:14px;font-weight:bold;letter-spacing:-0.695px;">NSCG</span><svg class="a" style="left:982px;top:116px;" width="15" height="15" viewBox="0 0 15 15"><use href="#ff_tabxr"/></svg><div class="a" style="left:1007px;top:112px;width:17px;height:22px;background:linear-gradient(#e4e2dc,#cdcac2);border:1px solid #a09e98;border-bottom:none;border-radius:4px 0 0 0"></div><svg class="a" style="left:1013px;top:122px" width="5" height="3"><path d="M0 0H5L2.5 3z" fill="#000"/></svg><div class="a" style="left:0px;top:134px;width:1024px;height:1px;background:#8c8a84"></div><div class="a" style="left:0px;top:135px;width:1024px;height:2px;background:#f0eee8"></div><div class="a" style="left:806px;top:134px;width:199px;height:2px;background:#e8e6e0"></div><div class="a" style="left:0px;top:746px;width:1024px;height:22px;background:#d4d0c8"></div><div class="a" style="left:0px;top:748px;width:967px;height:20px;border:1px solid;border-color:#808080 #fff #fff #808080"></div><div class="a" style="left:969px;top:748px;width:53px;height:20px;border:1px solid;border-color:#808080 #fff #fff #808080"></div><span class="t" style="left:7px;top:751.00px;font-size:11px;line-height:14px;letter-spacing:-0.199px;">Done</span><span class="t" style="left:972px;top:749.00px;font-size:14px;line-height:18px;letter-spacing:1.100px;"><span style="color:#b00000">z</span>otero</span><div class="a pagebg" style="left:0px;top:137px;width:1008px;height:609px;"></div><div class="a" style="left:26px;top:141px;width:956px;height:468px;background:#7a9496;border:1px solid #302e2c;box-shadow:0 0 1.5px .5px rgba(50,44,34,.75),1px 1px 1.5px rgba(40,36,28,.5),inset 0 0 0 1px rgba(255,255,255,.07)"></div><div class="a" style="left:27px;top:142px;width:954px;height:5px;background:linear-gradient(#6f898b,#7a9496)"></div><svg class="a" style="left:32px;top:147px;" width="944" height="159" viewBox="0 0 944 159"><use href="#art_banner"/><text x="35.9" y="59.8" font-size="17" font-weight="bold" font-family="Liberation Serif,serif" fill="#fff" textLength="38.7" lengthAdjust="spacingAndGlyphs">NSF</text></svg><span class="t" style="left:137.5px;top:175.00px;font-size:24px;line-height:30px;font-family:Liberation Serif,serif;color:#fff;letter-spacing:0.867px;text-shadow:1px 1px 1px rgba(60,40,20,.6);">National Science Foundation</span><span class="t" style="left:138px;top:205.50px;font-size:10.5px;line-height:13px;color:#e4dccb;letter-spacing:6.724px;">WHERE DISCOVERIES BEGIN</span><span class="t" style="left:280px;top:240.50px;font-size:18px;line-height:22px;font-weight:bold;font-family:Liberation Serif,serif;color:#fff;letter-spacing:1.182px;text-shadow:1px 1px 1px #000;">NATIONAL SURVEY OF COLLEGE GRADUATES</span><span class="t" style="left:82px;top:276.00px;font-size:22px;line-height:28px;font-weight:bold;color:#f2eec4;letter-spacing:-0.313px;">Save and Exit</span><span class="t" style="left:334.5px;top:276.00px;font-size:22px;line-height:28px;font-weight:bold;color:#f2eec4;letter-spacing:-0.635px;">Information</span><svg class="a" style="left:32px;top:342px;" width="944" height="43" viewBox="0 0 944 43"><path d="M0 1H204C214 1 218 28 256 33H0z" fill="url(#gTab)"/><path d="M0 1H204C214 1 218 28 256 33" fill="none" stroke="#5a5a48" stroke-width=".8" opacity=".5"/><rect y="32" width="258" height="1.5" fill="#a88830" opacity=".7"/><rect y="33" width="944" height="6" fill="#b3a06c"/><rect y="39" width="944" height="2" fill="#d9ccab"/><rect y="41" width="944" height="1.5" fill="#bfae86"/></svg><span class="t" style="left:37px;top:352.00px;font-size:16px;line-height:20px;font-weight:bold;letter-spacing:-0.051px;">Demographic Information</span><div class="a" style="left:32px;top:384px;width:944px;height:110px;background:#ece8c4;border-right:3px solid #000;border-bottom:2px solid #000;border-left:1px solid #f8f6e0"></div><span class="t" style="left:57.5px;top:394.00px;font-size:16px;line-height:20px;font-weight:bold;letter-spacing:-0.034px;">We'd like to make sure our records are correct. Did you receive a Bachelor's degree from PRIVATE COLLEGE in 1984?</span><svg class="a" style="left:78.5px;top:428px;" width="12" height="12" viewBox="0 0 12 12"><circle cx="6" cy="6" r="5" fill="#fff" stroke="#7a7a72" stroke-width="1"/><path d="M2.5 9.5A5 5 0 0 1 9.5 2.5" fill="none" stroke="#404040" stroke-width="1.2"/></svg><span class="t" style="left:94.5px;top:426.00px;font-size:16px;line-height:20px;color:#222;letter-spacing:-0.367px;">Yes</span><svg class="a" style="left:78.5px;top:450px;" width="12" height="12" viewBox="0 0 12 12"><circle cx="6" cy="6" r="5" fill="#fff" stroke="#7a7a72" stroke-width="1"/><path d="M2.5 9.5A5 5 0 0 1 9.5 2.5" fill="none" stroke="#404040" stroke-width="1.2"/></svg><span class="t" style="left:94.5px;top:448.00px;font-size:16px;line-height:20px;color:#222;letter-spacing:-0.727px;">No</span><div class="a" style="left:49px;top:496.5px;width:93px;height:27.5px;border:1px solid #6e6a60;border-radius:14px;background:linear-gradient(#ddd3c3,#c9bda8 60%,#bfb39e);box-shadow:1px 1px 1px rgba(0,0,0,.35)"></div><span class="t" style="left:80.5px;top:502.50px;font-size:12.5px;line-height:16px;letter-spacing:-0.050px;">Next</span><div class="a" style="left:157px;top:496.5px;width:93.5px;height:27.5px;border:1px solid #6e6a60;border-radius:14px;background:linear-gradient(#ddd3c3,#c9bda8 60%,#bfb39e);box-shadow:1px 1px 1px rgba(0,0,0,.35)"></div><span class="t" style="left:181px;top:502.50px;font-size:12.5px;line-height:16px;letter-spacing:0.108px;">Previous</span><div class="a" style="left:102px;top:554px;width:65px;height:18px;background:#ffffe1;border:1px solid #000;box-shadow:2px 2px 1px rgba(0,0,0,.45)"></div><span class="t" style="left:106px;top:556.00px;font-size:11px;line-height:14px;letter-spacing:-0.299px;">Submit form</span><span class="t" style="left:852.5px;top:547.00px;font-size:10px;line-height:12px;color:#fff;letter-spacing:0.104px;">Form Number: NSCG-1</span><span class="t" style="left:852.5px;top:558.00px;font-size:10px;line-height:12px;color:#fff;letter-spacing:0.250px;">OMB No.: 3145-0141</span><span class="t" style="left:852.5px;top:570.00px;font-size:10px;line-height:12px;color:#fff;letter-spacing:0.230px;">Approval Expires: 7/2011</span><span class="t" style="left:200px;top:623.00px;font-size:16px;line-height:20px;color:#fff;letter-spacing:-0.188px;text-decoration:underline;">Statement of Work</span><span class="t" style="left:653px;top:623.00px;font-size:16px;line-height:20px;color:#fff;letter-spacing:-0.184px;text-decoration:underline;">Privacy Policy</span><span class="t" style="left:410px;top:649.00px;font-size:18px;line-height:22px;font-style:italic;font-family:Liberation Serif,serif;color:#fff;letter-spacing:-0.005px;">Acting as Collection Agent</span><svg class="a" style="left:461px;top:669px;" width="82" height="82" viewBox="0 0 82 82"><use href="#art_seal"/><text font-size="6.8" font-weight="bold" font-family="Liberation Sans,sans-serif" fill="#222"><textPath href="#sealTop" startOffset="4" textLength="100">U.S. DEPARTMENT OF COMMERCE</textPath></text><text font-size="6.8" font-weight="bold" font-family="Liberation Sans,sans-serif" fill="#222"><textPath href="#sealBot" startOffset="16" textLength="84">BUREAU OF THE CENSUS</textPath></text></svg><div class="a dith" style="left:1008px;top:137px;width:16px;height:609px;"></div><div class="a sraised" style="left:1008px;top:137px;width:16px;height:16px;"></div><svg class="a" style="left:1012px;top:143px;" width="7" height="4" viewBox="0 0 7 4"><path d="M0 4h7l-3.5-4z" fill="#000"/></svg><div class="a sraised" style="left:1008px;top:153px;width:16px;height:533px;"></div><div class="a sraised" style="left:1008px;top:730px;width:16px;height:16px;"></div><svg class="a" style="left:1012px;top:736px;" width="7" height="4" viewBox="0 0 7 4"><path d="M0 0h7l-3.5 4z" fill="#000"/></svg></div></body></html>
